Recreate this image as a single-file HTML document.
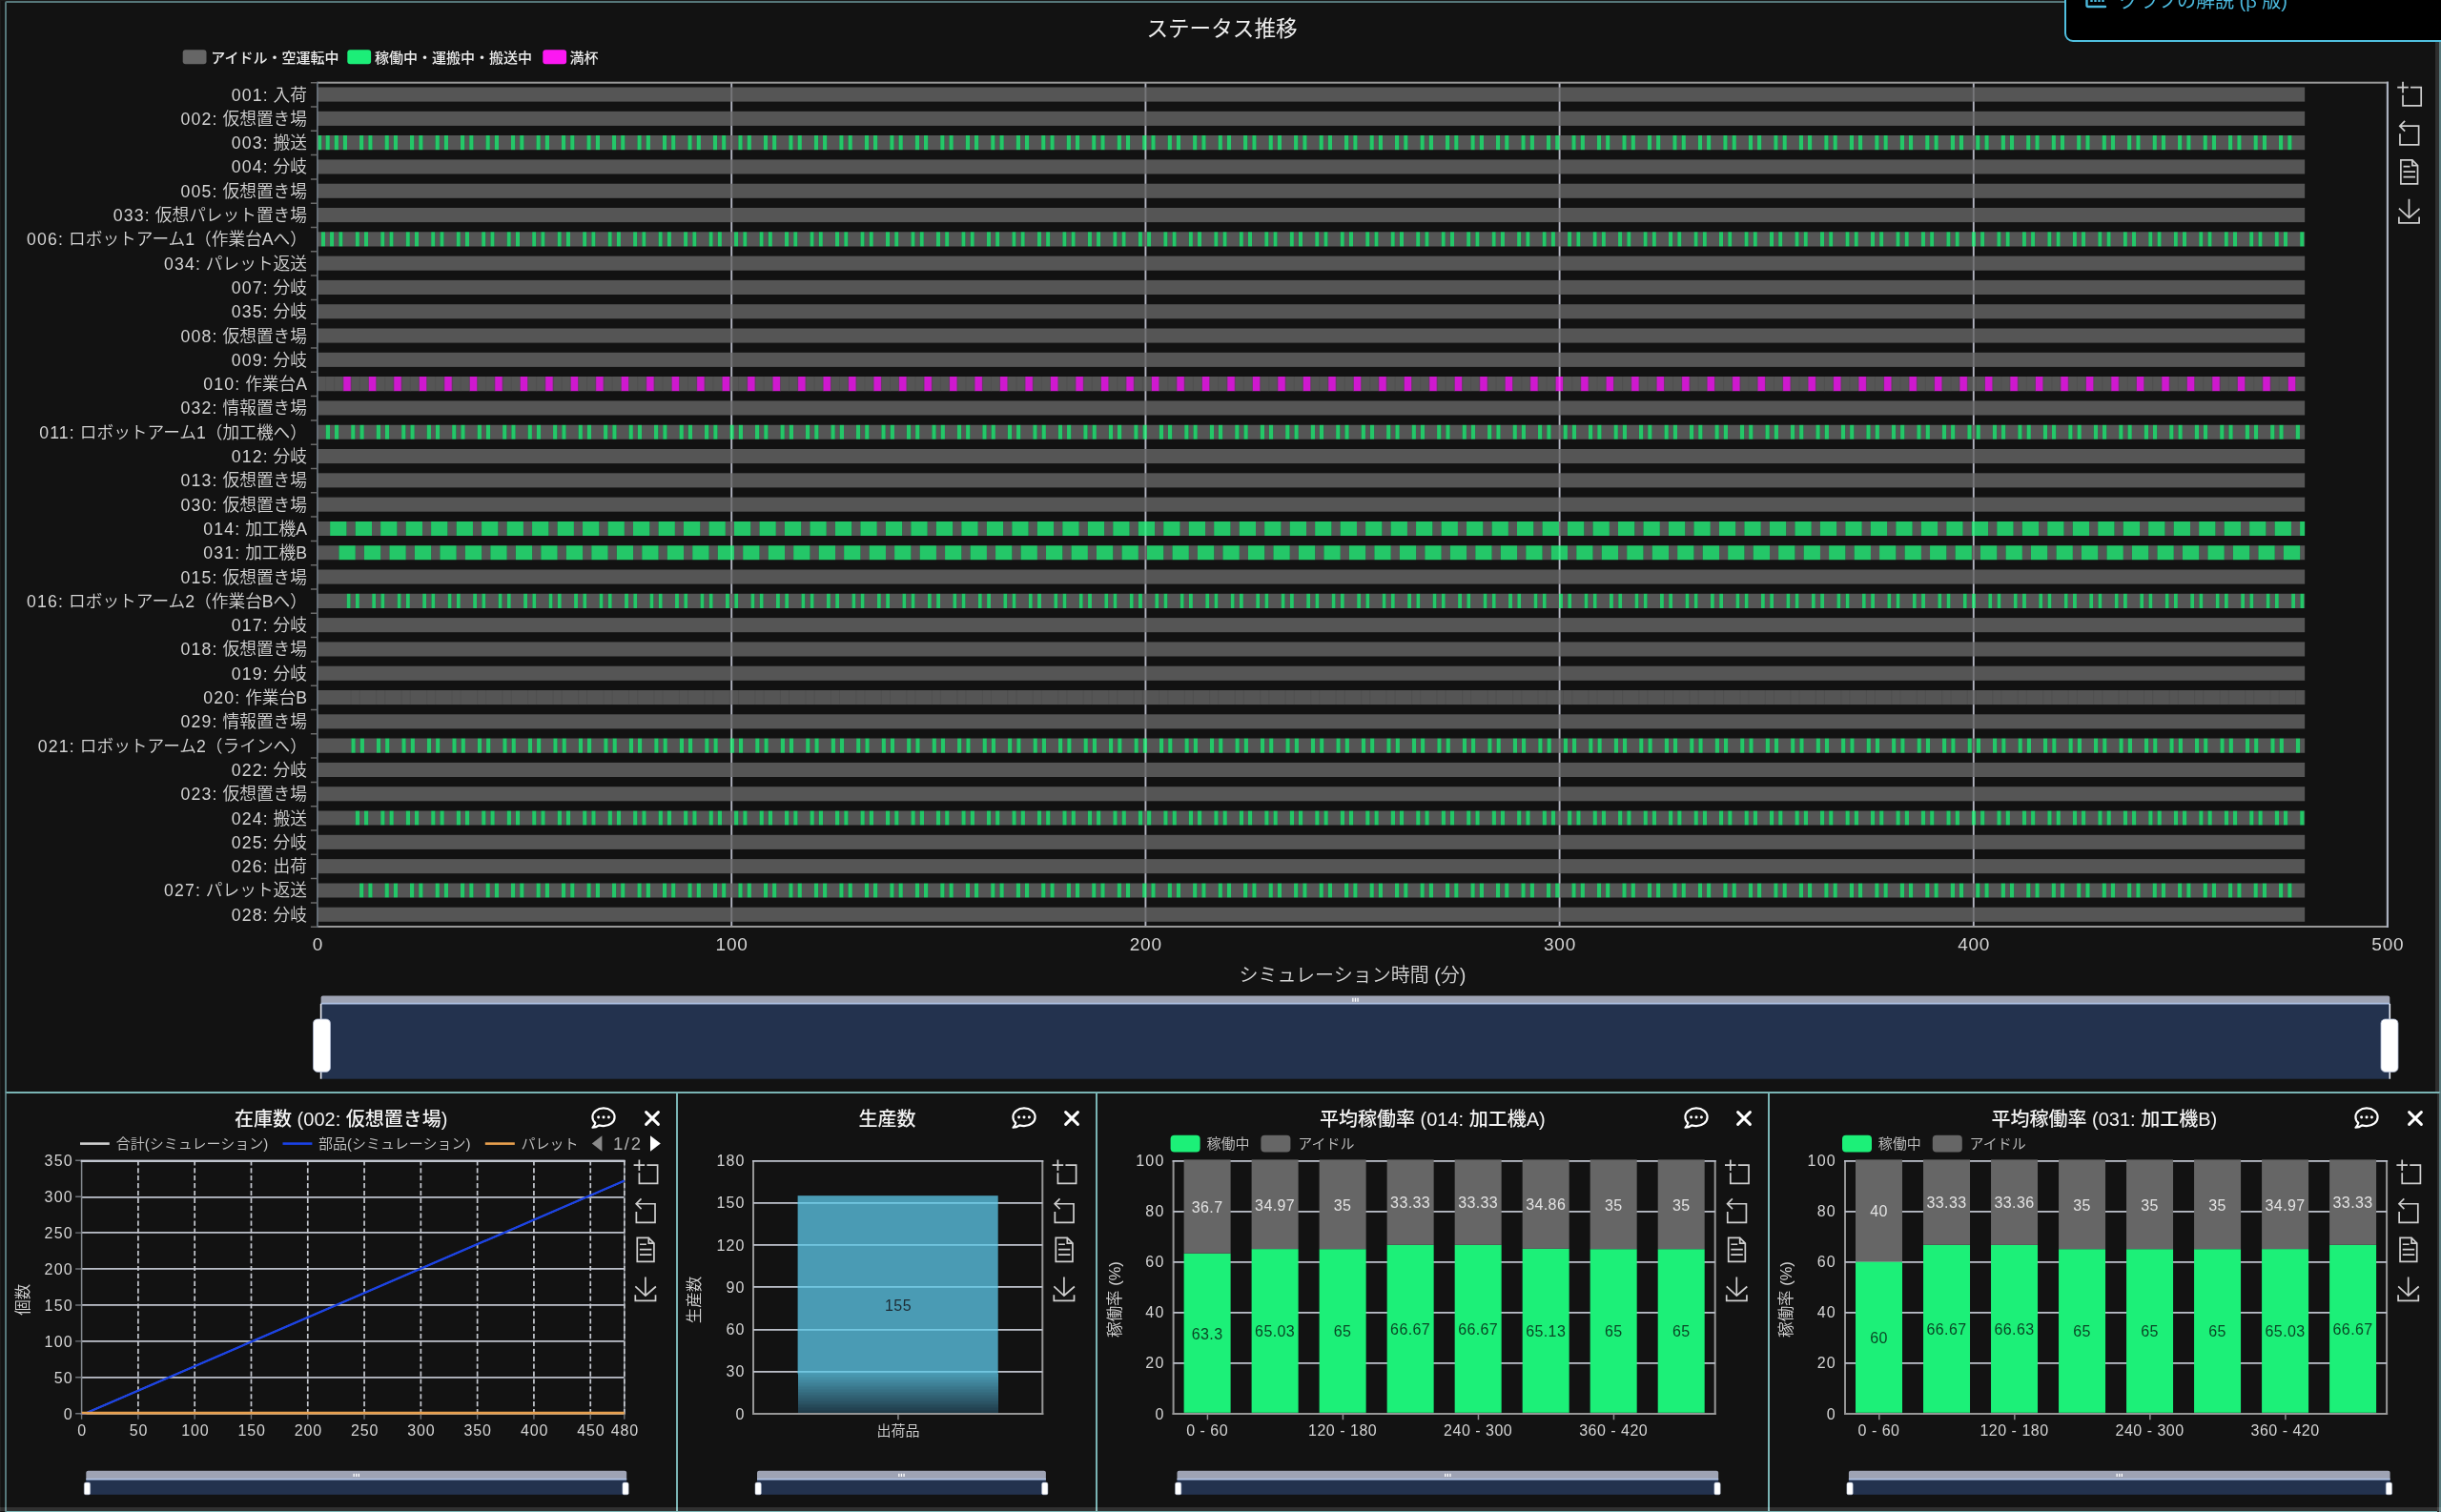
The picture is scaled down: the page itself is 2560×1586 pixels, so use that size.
<!DOCTYPE html>
<html lang="ja">
<head>
<meta charset="utf-8">
<title>ステータス推移 ダッシュボード</title>
<style>
html,body{margin:0;padding:0;background:#121212;}
body{width:2560px;height:1586px;overflow:hidden;position:relative;font-family:"Liberation Sans","Noto Sans CJK JP",sans-serif;color:#eee;}
#app{position:absolute;left:0;top:0;width:2560px;height:1586px;overflow:hidden;background:#121212;}
.edge-l{position:absolute;left:0;top:0;width:1px;height:1586px;background:#1c1c1c;}
.edge-t{position:absolute;left:0;top:0;width:2560px;height:1px;background:#1a1a1a;}
.panel{position:absolute;box-sizing:border-box;border:2px solid #557679;border-radius:2px;}
.panel.main{left:5px;top:1px;width:2555px;height:1146px;}
.panel.sub{top:1145px;height:442px;border-color:#7ab4b4;}
.ptitle{will-change:transform;position:absolute;left:0;right:0;text-align:center;white-space:nowrap;color:#f2f2f2;}
.sub .ptitle{top:12px;font-size:20px;line-height:30px;font-weight:500;}
.main .ptitle{top:10.7px;font-size:22.6px;line-height:34px;font-weight:400;color:#eee;}
svg{position:absolute;left:0;top:0;overflow:visible;will-change:transform;}
svg text{font-family:"Liberation Sans","Noto Sans CJK JP",sans-serif;}
.ibtn{position:absolute;}
.popup{position:absolute;left:2164.7px;top:-38px;width:420px;height:82px;box-sizing:border-box;border:2.6px solid #50c0e0;border-radius:9px;background:#000;color:#4bb8dc;font-size:20px;white-space:nowrap;}
.popup span{will-change:transform;position:absolute;left:56.5px;top:22px;line-height:30px;}
.vstrip{position:absolute;left:2554px;top:0;width:4px;height:1145px;background:#2e2e2e;}
.vstrip2{position:absolute;left:2556px;top:1147px;width:1.5px;height:439px;background:#2e2e2e;}
.scrollstrip{position:absolute;left:0;top:1581px;width:2560px;height:4px;background:rgba(255,255,255,0.13);}
</style>
</head>
<body>
<div id="app">
<div class="edge-l"></div><div class="edge-t"></div>

<section class="panel main"><div class="ptitle" style="left:-2px">ステータス推移</div></section>
<svg width="2560" height="1586" viewBox="0 0 2560 1586">
<rect x="191.7" y="52.2" width="24.8" height="15" rx="3" fill="#666"/>
<text x="221.2" y="66.3" font-size="15" fill="#ececec" font-weight="500">アイドル・空運転中</text>
<rect x="364.3" y="52.2" width="24.8" height="15" rx="3" fill="#1cee78"/>
<text x="392.9" y="66.3" font-size="15" fill="#ececec" font-weight="500">稼働中・運搬中・搬送中</text>
<rect x="569.3" y="52.2" width="24.8" height="15" rx="3" fill="#fc18f2"/>
<text x="597.4" y="66.3" font-size="15" fill="#ececec" font-weight="500">満杯</text>
<rect x="766.25" y="86.4" width="1.9" height="885.5" fill="#b2b4c0"/>
<rect x="1200.45" y="86.4" width="1.9" height="885.5" fill="#b2b4c0"/>
<rect x="1634.65" y="86.4" width="1.9" height="885.5" fill="#b2b4c0"/>
<rect x="2068.85" y="86.4" width="1.9" height="885.5" fill="#b2b4c0"/>
<g fill-opacity="0.8">
<rect x="333" y="91.5" width="2084.16" height="15.1" fill="#666"/>
<rect x="333" y="116.8" width="2084.16" height="15.1" fill="#666"/>
<path d="M337.34 142.1h4.12v15.1h-4.12zM345.81 142.1h4.78v15.1h-4.78zM354.93 142.1h4.78v15.1h-4.78zM364.05 142.1h12.98v15.1h-12.98zM381.37 142.1h4.91v15.1h-4.91zM390.62 142.1h12.9v15.1h-12.9zM407.86 142.1h4.91v15.1h-4.91zM417.1 142.1h12.9v15.1h-12.9zM434.34 142.1h4.91v15.1h-4.91zM443.59 142.1h12.9v15.1h-12.9zM460.83 142.1h4.91v15.1h-4.91zM470.08 142.1h12.9v15.1h-12.9zM487.31 142.1h4.91v15.1h-4.91zM496.56 142.1h12.9v15.1h-12.9zM513.8 142.1h4.91v15.1h-4.91zM523.05 142.1h12.9v15.1h-12.9zM540.29 142.1h4.91v15.1h-4.91zM549.54 142.1h12.9v15.1h-12.9zM566.77 142.1h4.91v15.1h-4.91zM576.02 142.1h12.9v15.1h-12.9zM593.26 142.1h4.91v15.1h-4.91zM602.51 142.1h12.9v15.1h-12.9zM619.75 142.1h4.91v15.1h-4.91zM628.99 142.1h12.9v15.1h-12.9zM646.23 142.1h4.91v15.1h-4.91zM655.48 142.1h12.9v15.1h-12.9zM672.72 142.1h4.91v15.1h-4.91zM681.97 142.1h12.9v15.1h-12.9zM699.2 142.1h4.91v15.1h-4.91zM708.45 142.1h12.9v15.1h-12.9zM725.69 142.1h4.91v15.1h-4.91zM734.94 142.1h12.9v15.1h-12.9zM752.18 142.1h4.91v15.1h-4.91zM761.43 142.1h12.9v15.1h-12.9zM778.66 142.1h4.91v15.1h-4.91zM787.91 142.1h12.9v15.1h-12.9zM805.15 142.1h4.91v15.1h-4.91zM814.4 142.1h12.9v15.1h-12.9zM831.64 142.1h4.91v15.1h-4.91zM840.88 142.1h12.9v15.1h-12.9zM858.12 142.1h4.91v15.1h-4.91zM867.37 142.1h12.9v15.1h-12.9zM884.61 142.1h4.91v15.1h-4.91zM893.86 142.1h12.9v15.1h-12.9zM911.09 142.1h4.91v15.1h-4.91zM920.34 142.1h12.9v15.1h-12.9zM937.58 142.1h4.91v15.1h-4.91zM946.83 142.1h12.9v15.1h-12.9zM964.07 142.1h4.91v15.1h-4.91zM973.31 142.1h12.9v15.1h-12.9zM990.55 142.1h4.91v15.1h-4.91zM999.8 142.1h12.9v15.1h-12.9zM1017.04 142.1h4.91v15.1h-4.91zM1026.29 142.1h12.9v15.1h-12.9zM1043.52 142.1h4.91v15.1h-4.91zM1052.77 142.1h12.9v15.1h-12.9zM1070.01 142.1h4.91v15.1h-4.91zM1079.26 142.1h12.9v15.1h-12.9zM1096.5 142.1h4.91v15.1h-4.91zM1105.75 142.1h12.9v15.1h-12.9zM1122.98 142.1h4.91v15.1h-4.91zM1132.23 142.1h12.9v15.1h-12.9zM1149.47 142.1h4.91v15.1h-4.91zM1158.72 142.1h12.9v15.1h-12.9zM1175.96 142.1h4.91v15.1h-4.91zM1185.2 142.1h12.9v15.1h-12.9zM1202.44 142.1h4.91v15.1h-4.91zM1211.69 142.1h12.9v15.1h-12.9zM1228.93 142.1h4.91v15.1h-4.91zM1238.18 142.1h12.9v15.1h-12.9zM1255.41 142.1h4.91v15.1h-4.91zM1264.66 142.1h12.9v15.1h-12.9zM1281.9 142.1h4.91v15.1h-4.91zM1291.15 142.1h12.9v15.1h-12.9zM1308.39 142.1h4.91v15.1h-4.91zM1317.64 142.1h12.9v15.1h-12.9zM1334.87 142.1h4.91v15.1h-4.91zM1344.12 142.1h12.9v15.1h-12.9zM1361.36 142.1h4.91v15.1h-4.91zM1370.61 142.1h12.9v15.1h-12.9zM1387.85 142.1h4.91v15.1h-4.91zM1397.09 142.1h12.9v15.1h-12.9zM1414.33 142.1h4.91v15.1h-4.91zM1423.58 142.1h12.9v15.1h-12.9zM1440.82 142.1h4.91v15.1h-4.91zM1450.07 142.1h12.9v15.1h-12.9zM1467.3 142.1h4.91v15.1h-4.91zM1476.55 142.1h12.9v15.1h-12.9zM1493.79 142.1h4.91v15.1h-4.91zM1503.04 142.1h12.9v15.1h-12.9zM1520.28 142.1h4.91v15.1h-4.91zM1529.52 142.1h12.9v15.1h-12.9zM1546.76 142.1h4.91v15.1h-4.91zM1556.01 142.1h12.9v15.1h-12.9zM1573.25 142.1h4.91v15.1h-4.91zM1582.5 142.1h12.9v15.1h-12.9zM1599.74 142.1h4.91v15.1h-4.91zM1608.98 142.1h12.9v15.1h-12.9zM1626.22 142.1h4.91v15.1h-4.91zM1635.47 142.1h12.9v15.1h-12.9zM1652.71 142.1h4.91v15.1h-4.91zM1661.96 142.1h12.9v15.1h-12.9zM1679.19 142.1h4.91v15.1h-4.91zM1688.44 142.1h12.9v15.1h-12.9zM1705.68 142.1h4.91v15.1h-4.91zM1714.93 142.1h12.9v15.1h-12.9zM1732.17 142.1h4.91v15.1h-4.91zM1741.41 142.1h12.9v15.1h-12.9zM1758.65 142.1h4.91v15.1h-4.91zM1767.9 142.1h12.9v15.1h-12.9zM1785.14 142.1h4.91v15.1h-4.91zM1794.39 142.1h12.9v15.1h-12.9zM1811.62 142.1h4.91v15.1h-4.91zM1820.87 142.1h12.9v15.1h-12.9zM1838.11 142.1h4.91v15.1h-4.91zM1847.36 142.1h12.9v15.1h-12.9zM1864.6 142.1h4.91v15.1h-4.91zM1873.85 142.1h12.9v15.1h-12.9zM1891.08 142.1h4.91v15.1h-4.91zM1900.33 142.1h12.9v15.1h-12.9zM1917.57 142.1h4.91v15.1h-4.91zM1926.82 142.1h12.9v15.1h-12.9zM1944.06 142.1h4.91v15.1h-4.91zM1953.3 142.1h12.9v15.1h-12.9zM1970.54 142.1h4.91v15.1h-4.91zM1979.79 142.1h12.9v15.1h-12.9zM1997.03 142.1h4.91v15.1h-4.91zM2006.28 142.1h12.9v15.1h-12.9zM2023.51 142.1h4.91v15.1h-4.91zM2032.76 142.1h12.9v15.1h-12.9zM2050 142.1h4.91v15.1h-4.91zM2059.25 142.1h12.9v15.1h-12.9zM2076.49 142.1h4.91v15.1h-4.91zM2085.74 142.1h12.9v15.1h-12.9zM2102.97 142.1h4.91v15.1h-4.91zM2112.22 142.1h12.9v15.1h-12.9zM2129.46 142.1h4.91v15.1h-4.91zM2138.71 142.1h12.9v15.1h-12.9zM2155.95 142.1h4.91v15.1h-4.91zM2165.19 142.1h12.9v15.1h-12.9zM2182.43 142.1h4.91v15.1h-4.91zM2191.68 142.1h12.9v15.1h-12.9zM2208.92 142.1h4.91v15.1h-4.91zM2218.17 142.1h12.9v15.1h-12.9zM2235.4 142.1h4.91v15.1h-4.91zM2244.65 142.1h12.9v15.1h-12.9zM2261.89 142.1h4.91v15.1h-4.91zM2271.14 142.1h12.9v15.1h-12.9zM2288.38 142.1h4.91v15.1h-4.91zM2297.62 142.1h12.9v15.1h-12.9zM2314.86 142.1h4.91v15.1h-4.91zM2324.11 142.1h12.9v15.1h-12.9zM2341.35 142.1h4.91v15.1h-4.91zM2350.6 142.1h12.9v15.1h-12.9zM2367.83 142.1h4.91v15.1h-4.91zM2377.08 142.1h12.9v15.1h-12.9zM2394.32 142.1h4.91v15.1h-4.91zM2403.57 142.1h13.59v15.1h-13.59z" fill="#666"/>
<path d="M333 142.1h4.34v15.1h-4.34zM341.47 142.1h4.34v15.1h-4.34zM350.59 142.1h4.34v15.1h-4.34zM359.7 142.1h4.34v15.1h-4.34zM377.03 142.1h4.34v15.1h-4.34zM386.28 142.1h4.34v15.1h-4.34zM403.51 142.1h4.34v15.1h-4.34zM412.76 142.1h4.34v15.1h-4.34zM430 142.1h4.34v15.1h-4.34zM439.25 142.1h4.34v15.1h-4.34zM456.49 142.1h4.34v15.1h-4.34zM465.73 142.1h4.34v15.1h-4.34zM482.97 142.1h4.34v15.1h-4.34zM492.22 142.1h4.34v15.1h-4.34zM509.46 142.1h4.34v15.1h-4.34zM518.71 142.1h4.34v15.1h-4.34zM535.95 142.1h4.34v15.1h-4.34zM545.19 142.1h4.34v15.1h-4.34zM562.43 142.1h4.34v15.1h-4.34zM571.68 142.1h4.34v15.1h-4.34zM588.92 142.1h4.34v15.1h-4.34zM598.17 142.1h4.34v15.1h-4.34zM615.4 142.1h4.34v15.1h-4.34zM624.65 142.1h4.34v15.1h-4.34zM641.89 142.1h4.34v15.1h-4.34zM651.14 142.1h4.34v15.1h-4.34zM668.38 142.1h4.34v15.1h-4.34zM677.62 142.1h4.34v15.1h-4.34zM694.86 142.1h4.34v15.1h-4.34zM704.11 142.1h4.34v15.1h-4.34zM721.35 142.1h4.34v15.1h-4.34zM730.6 142.1h4.34v15.1h-4.34zM747.83 142.1h4.34v15.1h-4.34zM757.08 142.1h4.34v15.1h-4.34zM774.32 142.1h4.34v15.1h-4.34zM783.57 142.1h4.34v15.1h-4.34zM800.81 142.1h4.34v15.1h-4.34zM810.06 142.1h4.34v15.1h-4.34zM827.29 142.1h4.34v15.1h-4.34zM836.54 142.1h4.34v15.1h-4.34zM853.78 142.1h4.34v15.1h-4.34zM863.03 142.1h4.34v15.1h-4.34zM880.27 142.1h4.34v15.1h-4.34zM889.51 142.1h4.34v15.1h-4.34zM906.75 142.1h4.34v15.1h-4.34zM916 142.1h4.34v15.1h-4.34zM933.24 142.1h4.34v15.1h-4.34zM942.49 142.1h4.34v15.1h-4.34zM959.72 142.1h4.34v15.1h-4.34zM968.97 142.1h4.34v15.1h-4.34zM986.21 142.1h4.34v15.1h-4.34zM995.46 142.1h4.34v15.1h-4.34zM1012.7 142.1h4.34v15.1h-4.34zM1021.95 142.1h4.34v15.1h-4.34zM1039.18 142.1h4.34v15.1h-4.34zM1048.43 142.1h4.34v15.1h-4.34zM1065.67 142.1h4.34v15.1h-4.34zM1074.92 142.1h4.34v15.1h-4.34zM1092.16 142.1h4.34v15.1h-4.34zM1101.4 142.1h4.34v15.1h-4.34zM1118.64 142.1h4.34v15.1h-4.34zM1127.89 142.1h4.34v15.1h-4.34zM1145.13 142.1h4.34v15.1h-4.34zM1154.38 142.1h4.34v15.1h-4.34zM1171.61 142.1h4.34v15.1h-4.34zM1180.86 142.1h4.34v15.1h-4.34zM1198.1 142.1h4.34v15.1h-4.34zM1207.35 142.1h4.34v15.1h-4.34zM1224.59 142.1h4.34v15.1h-4.34zM1233.83 142.1h4.34v15.1h-4.34zM1251.07 142.1h4.34v15.1h-4.34zM1260.32 142.1h4.34v15.1h-4.34zM1277.56 142.1h4.34v15.1h-4.34zM1286.81 142.1h4.34v15.1h-4.34zM1304.04 142.1h4.34v15.1h-4.34zM1313.29 142.1h4.34v15.1h-4.34zM1330.53 142.1h4.34v15.1h-4.34zM1339.78 142.1h4.34v15.1h-4.34zM1357.02 142.1h4.34v15.1h-4.34zM1366.27 142.1h4.34v15.1h-4.34zM1383.5 142.1h4.34v15.1h-4.34zM1392.75 142.1h4.34v15.1h-4.34zM1409.99 142.1h4.34v15.1h-4.34zM1419.24 142.1h4.34v15.1h-4.34zM1436.48 142.1h4.34v15.1h-4.34zM1445.72 142.1h4.34v15.1h-4.34zM1462.96 142.1h4.34v15.1h-4.34zM1472.21 142.1h4.34v15.1h-4.34zM1489.45 142.1h4.34v15.1h-4.34zM1498.7 142.1h4.34v15.1h-4.34zM1515.93 142.1h4.34v15.1h-4.34zM1525.18 142.1h4.34v15.1h-4.34zM1542.42 142.1h4.34v15.1h-4.34zM1551.67 142.1h4.34v15.1h-4.34zM1568.91 142.1h4.34v15.1h-4.34zM1578.16 142.1h4.34v15.1h-4.34zM1595.39 142.1h4.34v15.1h-4.34zM1604.64 142.1h4.34v15.1h-4.34zM1621.88 142.1h4.34v15.1h-4.34zM1631.13 142.1h4.34v15.1h-4.34zM1648.37 142.1h4.34v15.1h-4.34zM1657.61 142.1h4.34v15.1h-4.34zM1674.85 142.1h4.34v15.1h-4.34zM1684.1 142.1h4.34v15.1h-4.34zM1701.34 142.1h4.34v15.1h-4.34zM1710.59 142.1h4.34v15.1h-4.34zM1727.82 142.1h4.34v15.1h-4.34zM1737.07 142.1h4.34v15.1h-4.34zM1754.31 142.1h4.34v15.1h-4.34zM1763.56 142.1h4.34v15.1h-4.34zM1780.8 142.1h4.34v15.1h-4.34zM1790.04 142.1h4.34v15.1h-4.34zM1807.28 142.1h4.34v15.1h-4.34zM1816.53 142.1h4.34v15.1h-4.34zM1833.77 142.1h4.34v15.1h-4.34zM1843.02 142.1h4.34v15.1h-4.34zM1860.26 142.1h4.34v15.1h-4.34zM1869.5 142.1h4.34v15.1h-4.34zM1886.74 142.1h4.34v15.1h-4.34zM1895.99 142.1h4.34v15.1h-4.34zM1913.23 142.1h4.34v15.1h-4.34zM1922.48 142.1h4.34v15.1h-4.34zM1939.71 142.1h4.34v15.1h-4.34zM1948.96 142.1h4.34v15.1h-4.34zM1966.2 142.1h4.34v15.1h-4.34zM1975.45 142.1h4.34v15.1h-4.34zM1992.69 142.1h4.34v15.1h-4.34zM2001.93 142.1h4.34v15.1h-4.34zM2019.17 142.1h4.34v15.1h-4.34zM2028.42 142.1h4.34v15.1h-4.34zM2045.66 142.1h4.34v15.1h-4.34zM2054.91 142.1h4.34v15.1h-4.34zM2072.14 142.1h4.34v15.1h-4.34zM2081.39 142.1h4.34v15.1h-4.34zM2098.63 142.1h4.34v15.1h-4.34zM2107.88 142.1h4.34v15.1h-4.34zM2125.12 142.1h4.34v15.1h-4.34zM2134.37 142.1h4.34v15.1h-4.34zM2151.6 142.1h4.34v15.1h-4.34zM2160.85 142.1h4.34v15.1h-4.34zM2178.09 142.1h4.34v15.1h-4.34zM2187.34 142.1h4.34v15.1h-4.34zM2204.58 142.1h4.34v15.1h-4.34zM2213.82 142.1h4.34v15.1h-4.34zM2231.06 142.1h4.34v15.1h-4.34zM2240.31 142.1h4.34v15.1h-4.34zM2257.55 142.1h4.34v15.1h-4.34zM2266.8 142.1h4.34v15.1h-4.34zM2284.03 142.1h4.34v15.1h-4.34zM2293.28 142.1h4.34v15.1h-4.34zM2310.52 142.1h4.34v15.1h-4.34zM2319.77 142.1h4.34v15.1h-4.34zM2337.01 142.1h4.34v15.1h-4.34zM2346.26 142.1h4.34v15.1h-4.34zM2363.49 142.1h4.34v15.1h-4.34zM2372.74 142.1h4.34v15.1h-4.34zM2389.98 142.1h4.34v15.1h-4.34zM2399.23 142.1h4.34v15.1h-4.34z" fill="#29f57e"/>
<rect x="333" y="167.4" width="2084.16" height="15.1" fill="#666"/>
<rect x="333" y="192.7" width="2084.16" height="15.1" fill="#666"/>
<rect x="333" y="218" width="2084.16" height="15.1" fill="#666"/>
<path d="M333 243.3h3.91v15.1h-3.91zM341.03 243.3h4.99v15.1h-4.99zM350.15 243.3h5.21v15.1h-5.21zM359.49 243.3h13.24v15.1h-13.24zM376.85 243.3h5.12v15.1h-5.12zM386.1 243.3h13.11v15.1h-13.11zM403.34 243.3h5.12v15.1h-5.12zM412.59 243.3h13.11v15.1h-13.11zM429.83 243.3h5.12v15.1h-5.12zM439.08 243.3h13.11v15.1h-13.11zM456.31 243.3h5.12v15.1h-5.12zM465.56 243.3h13.11v15.1h-13.11zM482.8 243.3h5.12v15.1h-5.12zM492.05 243.3h13.11v15.1h-13.11zM509.29 243.3h5.12v15.1h-5.12zM518.53 243.3h13.11v15.1h-13.11zM535.77 243.3h5.12v15.1h-5.12zM545.02 243.3h13.11v15.1h-13.11zM562.26 243.3h5.12v15.1h-5.12zM571.51 243.3h13.11v15.1h-13.11zM588.74 243.3h5.12v15.1h-5.12zM597.99 243.3h13.11v15.1h-13.11zM615.23 243.3h5.12v15.1h-5.12zM624.48 243.3h13.11v15.1h-13.11zM641.72 243.3h5.12v15.1h-5.12zM650.96 243.3h13.11v15.1h-13.11zM668.2 243.3h5.12v15.1h-5.12zM677.45 243.3h13.11v15.1h-13.11zM694.69 243.3h5.12v15.1h-5.12zM703.94 243.3h13.11v15.1h-13.11zM721.17 243.3h5.12v15.1h-5.12zM730.42 243.3h13.11v15.1h-13.11zM747.66 243.3h5.12v15.1h-5.12zM756.91 243.3h13.11v15.1h-13.11zM774.15 243.3h5.12v15.1h-5.12zM783.4 243.3h13.11v15.1h-13.11zM800.63 243.3h5.12v15.1h-5.12zM809.88 243.3h13.11v15.1h-13.11zM827.12 243.3h5.12v15.1h-5.12zM836.37 243.3h13.11v15.1h-13.11zM853.61 243.3h5.12v15.1h-5.12zM862.85 243.3h13.11v15.1h-13.11zM880.09 243.3h5.12v15.1h-5.12zM889.34 243.3h13.11v15.1h-13.11zM906.58 243.3h5.12v15.1h-5.12zM915.83 243.3h13.11v15.1h-13.11zM933.06 243.3h5.12v15.1h-5.12zM942.31 243.3h13.11v15.1h-13.11zM959.55 243.3h5.12v15.1h-5.12zM968.8 243.3h13.11v15.1h-13.11zM986.04 243.3h5.12v15.1h-5.12zM995.29 243.3h13.11v15.1h-13.11zM1012.52 243.3h5.12v15.1h-5.12zM1021.77 243.3h13.11v15.1h-13.11zM1039.01 243.3h5.12v15.1h-5.12zM1048.26 243.3h13.11v15.1h-13.11zM1065.5 243.3h5.12v15.1h-5.12zM1074.74 243.3h13.11v15.1h-13.11zM1091.98 243.3h5.12v15.1h-5.12zM1101.23 243.3h13.11v15.1h-13.11zM1118.47 243.3h5.12v15.1h-5.12zM1127.72 243.3h13.11v15.1h-13.11zM1144.95 243.3h5.12v15.1h-5.12zM1154.2 243.3h13.11v15.1h-13.11zM1171.44 243.3h5.12v15.1h-5.12zM1180.69 243.3h13.11v15.1h-13.11zM1197.93 243.3h5.12v15.1h-5.12zM1207.17 243.3h13.11v15.1h-13.11zM1224.41 243.3h5.12v15.1h-5.12zM1233.66 243.3h13.11v15.1h-13.11zM1250.9 243.3h5.12v15.1h-5.12zM1260.15 243.3h13.11v15.1h-13.11zM1277.38 243.3h5.12v15.1h-5.12zM1286.63 243.3h13.11v15.1h-13.11zM1303.87 243.3h5.12v15.1h-5.12zM1313.12 243.3h13.11v15.1h-13.11zM1330.36 243.3h5.12v15.1h-5.12zM1339.61 243.3h13.11v15.1h-13.11zM1356.84 243.3h5.12v15.1h-5.12zM1366.09 243.3h13.11v15.1h-13.11zM1383.33 243.3h5.12v15.1h-5.12zM1392.58 243.3h13.11v15.1h-13.11zM1409.82 243.3h5.12v15.1h-5.12zM1419.06 243.3h13.11v15.1h-13.11zM1436.3 243.3h5.12v15.1h-5.12zM1445.55 243.3h13.11v15.1h-13.11zM1462.79 243.3h5.12v15.1h-5.12zM1472.04 243.3h13.11v15.1h-13.11zM1489.27 243.3h5.12v15.1h-5.12zM1498.52 243.3h13.11v15.1h-13.11zM1515.76 243.3h5.12v15.1h-5.12zM1525.01 243.3h13.11v15.1h-13.11zM1542.25 243.3h5.12v15.1h-5.12zM1551.5 243.3h13.11v15.1h-13.11zM1568.73 243.3h5.12v15.1h-5.12zM1577.98 243.3h13.11v15.1h-13.11zM1595.22 243.3h5.12v15.1h-5.12zM1604.47 243.3h13.11v15.1h-13.11zM1621.71 243.3h5.12v15.1h-5.12zM1630.95 243.3h13.11v15.1h-13.11zM1648.19 243.3h5.12v15.1h-5.12zM1657.44 243.3h13.11v15.1h-13.11zM1674.68 243.3h5.12v15.1h-5.12zM1683.93 243.3h13.11v15.1h-13.11zM1701.16 243.3h5.12v15.1h-5.12zM1710.41 243.3h13.11v15.1h-13.11zM1727.65 243.3h5.12v15.1h-5.12zM1736.9 243.3h13.11v15.1h-13.11zM1754.14 243.3h5.12v15.1h-5.12zM1763.39 243.3h13.11v15.1h-13.11zM1780.62 243.3h5.12v15.1h-5.12zM1789.87 243.3h13.11v15.1h-13.11zM1807.11 243.3h5.12v15.1h-5.12zM1816.36 243.3h13.11v15.1h-13.11zM1833.6 243.3h5.12v15.1h-5.12zM1842.84 243.3h13.11v15.1h-13.11zM1860.08 243.3h5.12v15.1h-5.12zM1869.33 243.3h13.11v15.1h-13.11zM1886.57 243.3h5.12v15.1h-5.12zM1895.82 243.3h13.11v15.1h-13.11zM1913.05 243.3h5.12v15.1h-5.12zM1922.3 243.3h13.11v15.1h-13.11zM1939.54 243.3h5.12v15.1h-5.12zM1948.79 243.3h13.11v15.1h-13.11zM1966.03 243.3h5.12v15.1h-5.12zM1975.27 243.3h13.11v15.1h-13.11zM1992.51 243.3h5.12v15.1h-5.12zM2001.76 243.3h13.11v15.1h-13.11zM2019 243.3h5.12v15.1h-5.12zM2028.25 243.3h13.11v15.1h-13.11zM2045.48 243.3h5.12v15.1h-5.12zM2054.73 243.3h13.11v15.1h-13.11zM2071.97 243.3h5.12v15.1h-5.12zM2081.22 243.3h13.11v15.1h-13.11zM2098.46 243.3h5.12v15.1h-5.12zM2107.71 243.3h13.11v15.1h-13.11zM2124.94 243.3h5.12v15.1h-5.12zM2134.19 243.3h13.11v15.1h-13.11zM2151.43 243.3h5.12v15.1h-5.12zM2160.68 243.3h13.11v15.1h-13.11zM2177.92 243.3h5.12v15.1h-5.12zM2187.16 243.3h13.11v15.1h-13.11zM2204.4 243.3h5.12v15.1h-5.12zM2213.65 243.3h13.11v15.1h-13.11zM2230.89 243.3h5.12v15.1h-5.12zM2240.14 243.3h13.11v15.1h-13.11zM2257.37 243.3h5.12v15.1h-5.12zM2266.62 243.3h13.11v15.1h-13.11zM2283.86 243.3h5.12v15.1h-5.12zM2293.11 243.3h13.11v15.1h-13.11zM2310.35 243.3h5.12v15.1h-5.12zM2319.6 243.3h13.11v15.1h-13.11zM2336.83 243.3h5.12v15.1h-5.12zM2346.08 243.3h13.11v15.1h-13.11zM2363.32 243.3h5.12v15.1h-5.12zM2372.57 243.3h13.11v15.1h-13.11zM2389.81 243.3h5.12v15.1h-5.12zM2399.05 243.3h13.11v15.1h-13.11zM2416.29 243.3h0.87v15.1h-0.87z" fill="#666"/>
<path d="M336.91 243.3h4.12v15.1h-4.12zM346.03 243.3h4.12v15.1h-4.12zM355.36 243.3h4.12v15.1h-4.12zM372.73 243.3h4.12v15.1h-4.12zM381.98 243.3h4.12v15.1h-4.12zM399.22 243.3h4.12v15.1h-4.12zM408.46 243.3h4.12v15.1h-4.12zM425.7 243.3h4.12v15.1h-4.12zM434.95 243.3h4.12v15.1h-4.12zM452.19 243.3h4.12v15.1h-4.12zM461.44 243.3h4.12v15.1h-4.12zM478.67 243.3h4.12v15.1h-4.12zM487.92 243.3h4.12v15.1h-4.12zM505.16 243.3h4.12v15.1h-4.12zM514.41 243.3h4.12v15.1h-4.12zM531.65 243.3h4.12v15.1h-4.12zM540.89 243.3h4.12v15.1h-4.12zM558.13 243.3h4.12v15.1h-4.12zM567.38 243.3h4.12v15.1h-4.12zM584.62 243.3h4.12v15.1h-4.12zM593.87 243.3h4.12v15.1h-4.12zM611.11 243.3h4.12v15.1h-4.12zM620.35 243.3h4.12v15.1h-4.12zM637.59 243.3h4.12v15.1h-4.12zM646.84 243.3h4.12v15.1h-4.12zM664.08 243.3h4.12v15.1h-4.12zM673.33 243.3h4.12v15.1h-4.12zM690.56 243.3h4.12v15.1h-4.12zM699.81 243.3h4.12v15.1h-4.12zM717.05 243.3h4.12v15.1h-4.12zM726.3 243.3h4.12v15.1h-4.12zM743.54 243.3h4.12v15.1h-4.12zM752.78 243.3h4.12v15.1h-4.12zM770.02 243.3h4.12v15.1h-4.12zM779.27 243.3h4.12v15.1h-4.12zM796.51 243.3h4.12v15.1h-4.12zM805.76 243.3h4.12v15.1h-4.12zM822.99 243.3h4.12v15.1h-4.12zM832.24 243.3h4.12v15.1h-4.12zM849.48 243.3h4.12v15.1h-4.12zM858.73 243.3h4.12v15.1h-4.12zM875.97 243.3h4.12v15.1h-4.12zM885.22 243.3h4.12v15.1h-4.12zM902.45 243.3h4.12v15.1h-4.12zM911.7 243.3h4.12v15.1h-4.12zM928.94 243.3h4.12v15.1h-4.12zM938.19 243.3h4.12v15.1h-4.12zM955.43 243.3h4.12v15.1h-4.12zM964.67 243.3h4.12v15.1h-4.12zM981.91 243.3h4.12v15.1h-4.12zM991.16 243.3h4.12v15.1h-4.12zM1008.4 243.3h4.12v15.1h-4.12zM1017.65 243.3h4.12v15.1h-4.12zM1034.88 243.3h4.12v15.1h-4.12zM1044.13 243.3h4.12v15.1h-4.12zM1061.37 243.3h4.12v15.1h-4.12zM1070.62 243.3h4.12v15.1h-4.12zM1087.86 243.3h4.12v15.1h-4.12zM1097.11 243.3h4.12v15.1h-4.12zM1114.34 243.3h4.12v15.1h-4.12zM1123.59 243.3h4.12v15.1h-4.12zM1140.83 243.3h4.12v15.1h-4.12zM1150.08 243.3h4.12v15.1h-4.12zM1167.32 243.3h4.12v15.1h-4.12zM1176.56 243.3h4.12v15.1h-4.12zM1193.8 243.3h4.12v15.1h-4.12zM1203.05 243.3h4.12v15.1h-4.12zM1220.29 243.3h4.12v15.1h-4.12zM1229.54 243.3h4.12v15.1h-4.12zM1246.77 243.3h4.12v15.1h-4.12zM1256.02 243.3h4.12v15.1h-4.12zM1273.26 243.3h4.12v15.1h-4.12zM1282.51 243.3h4.12v15.1h-4.12zM1299.75 243.3h4.12v15.1h-4.12zM1308.99 243.3h4.12v15.1h-4.12zM1326.23 243.3h4.12v15.1h-4.12zM1335.48 243.3h4.12v15.1h-4.12zM1352.72 243.3h4.12v15.1h-4.12zM1361.97 243.3h4.12v15.1h-4.12zM1379.2 243.3h4.12v15.1h-4.12zM1388.45 243.3h4.12v15.1h-4.12zM1405.69 243.3h4.12v15.1h-4.12zM1414.94 243.3h4.12v15.1h-4.12zM1432.18 243.3h4.12v15.1h-4.12zM1441.43 243.3h4.12v15.1h-4.12zM1458.66 243.3h4.12v15.1h-4.12zM1467.91 243.3h4.12v15.1h-4.12zM1485.15 243.3h4.12v15.1h-4.12zM1494.4 243.3h4.12v15.1h-4.12zM1511.64 243.3h4.12v15.1h-4.12zM1520.88 243.3h4.12v15.1h-4.12zM1538.12 243.3h4.12v15.1h-4.12zM1547.37 243.3h4.12v15.1h-4.12zM1564.61 243.3h4.12v15.1h-4.12zM1573.86 243.3h4.12v15.1h-4.12zM1591.09 243.3h4.12v15.1h-4.12zM1600.34 243.3h4.12v15.1h-4.12zM1617.58 243.3h4.12v15.1h-4.12zM1626.83 243.3h4.12v15.1h-4.12zM1644.07 243.3h4.12v15.1h-4.12zM1653.32 243.3h4.12v15.1h-4.12zM1670.55 243.3h4.12v15.1h-4.12zM1679.8 243.3h4.12v15.1h-4.12zM1697.04 243.3h4.12v15.1h-4.12zM1706.29 243.3h4.12v15.1h-4.12zM1723.53 243.3h4.12v15.1h-4.12zM1732.77 243.3h4.12v15.1h-4.12zM1750.01 243.3h4.12v15.1h-4.12zM1759.26 243.3h4.12v15.1h-4.12zM1776.5 243.3h4.12v15.1h-4.12zM1785.75 243.3h4.12v15.1h-4.12zM1802.98 243.3h4.12v15.1h-4.12zM1812.23 243.3h4.12v15.1h-4.12zM1829.47 243.3h4.12v15.1h-4.12zM1838.72 243.3h4.12v15.1h-4.12zM1855.96 243.3h4.12v15.1h-4.12zM1865.2 243.3h4.12v15.1h-4.12zM1882.44 243.3h4.12v15.1h-4.12zM1891.69 243.3h4.12v15.1h-4.12zM1908.93 243.3h4.12v15.1h-4.12zM1918.18 243.3h4.12v15.1h-4.12zM1935.42 243.3h4.12v15.1h-4.12zM1944.66 243.3h4.12v15.1h-4.12zM1961.9 243.3h4.12v15.1h-4.12zM1971.15 243.3h4.12v15.1h-4.12zM1988.39 243.3h4.12v15.1h-4.12zM1997.64 243.3h4.12v15.1h-4.12zM2014.87 243.3h4.12v15.1h-4.12zM2024.12 243.3h4.12v15.1h-4.12zM2041.36 243.3h4.12v15.1h-4.12zM2050.61 243.3h4.12v15.1h-4.12zM2067.85 243.3h4.12v15.1h-4.12zM2077.09 243.3h4.12v15.1h-4.12zM2094.33 243.3h4.12v15.1h-4.12zM2103.58 243.3h4.12v15.1h-4.12zM2120.82 243.3h4.12v15.1h-4.12zM2130.07 243.3h4.12v15.1h-4.12zM2147.3 243.3h4.12v15.1h-4.12zM2156.55 243.3h4.12v15.1h-4.12zM2173.79 243.3h4.12v15.1h-4.12zM2183.04 243.3h4.12v15.1h-4.12zM2200.28 243.3h4.12v15.1h-4.12zM2209.53 243.3h4.12v15.1h-4.12zM2226.76 243.3h4.12v15.1h-4.12zM2236.01 243.3h4.12v15.1h-4.12zM2253.25 243.3h4.12v15.1h-4.12zM2262.5 243.3h4.12v15.1h-4.12zM2279.74 243.3h4.12v15.1h-4.12zM2288.98 243.3h4.12v15.1h-4.12zM2306.22 243.3h4.12v15.1h-4.12zM2315.47 243.3h4.12v15.1h-4.12zM2332.71 243.3h4.12v15.1h-4.12zM2341.96 243.3h4.12v15.1h-4.12zM2359.19 243.3h4.12v15.1h-4.12zM2368.44 243.3h4.12v15.1h-4.12zM2385.68 243.3h4.12v15.1h-4.12zM2394.93 243.3h4.12v15.1h-4.12zM2412.17 243.3h4.12v15.1h-4.12z" fill="#29f57e"/>
<rect x="333" y="268.6" width="2084.16" height="15.1" fill="#666"/>
<rect x="333" y="293.9" width="2084.16" height="15.1" fill="#666"/>
<rect x="333" y="319.2" width="2084.16" height="15.1" fill="#666"/>
<rect x="333" y="344.5" width="2084.16" height="15.1" fill="#666"/>
<rect x="333" y="369.8" width="2084.16" height="15.1" fill="#666"/>
<path d="M333 395.1h26.79v15.1h-26.79zM368.39 395.1h17.89v15.1h-17.89zM394.87 395.1h17.89v15.1h-17.89zM421.36 395.1h17.89v15.1h-17.89zM447.85 395.1h17.89v15.1h-17.89zM474.33 395.1h17.89v15.1h-17.89zM500.82 395.1h17.89v15.1h-17.89zM527.3 395.1h17.89v15.1h-17.89zM553.79 395.1h17.89v15.1h-17.89zM580.28 395.1h17.89v15.1h-17.89zM606.76 395.1h17.89v15.1h-17.89zM633.25 395.1h17.89v15.1h-17.89zM659.74 395.1h17.89v15.1h-17.89zM686.22 395.1h17.89v15.1h-17.89zM712.71 395.1h17.89v15.1h-17.89zM739.19 395.1h17.89v15.1h-17.89zM765.68 395.1h17.89v15.1h-17.89zM792.17 395.1h17.89v15.1h-17.89zM818.65 395.1h17.89v15.1h-17.89zM845.14 395.1h17.89v15.1h-17.89zM871.63 395.1h17.89v15.1h-17.89zM898.11 395.1h17.89v15.1h-17.89zM924.6 395.1h17.89v15.1h-17.89zM951.08 395.1h17.89v15.1h-17.89zM977.57 395.1h17.89v15.1h-17.89zM1004.06 395.1h17.89v15.1h-17.89zM1030.54 395.1h17.89v15.1h-17.89zM1057.03 395.1h17.89v15.1h-17.89zM1083.51 395.1h17.89v15.1h-17.89zM1110 395.1h17.89v15.1h-17.89zM1136.49 395.1h17.89v15.1h-17.89zM1162.97 395.1h17.89v15.1h-17.89zM1189.46 395.1h17.89v15.1h-17.89zM1215.95 395.1h17.89v15.1h-17.89zM1242.43 395.1h17.89v15.1h-17.89zM1268.92 395.1h17.89v15.1h-17.89zM1295.4 395.1h17.89v15.1h-17.89zM1321.89 395.1h17.89v15.1h-17.89zM1348.38 395.1h17.89v15.1h-17.89zM1374.86 395.1h17.89v15.1h-17.89zM1401.35 395.1h17.89v15.1h-17.89zM1427.84 395.1h17.89v15.1h-17.89zM1454.32 395.1h17.89v15.1h-17.89zM1480.81 395.1h17.89v15.1h-17.89zM1507.29 395.1h17.89v15.1h-17.89zM1533.78 395.1h17.89v15.1h-17.89zM1560.27 395.1h17.89v15.1h-17.89zM1586.75 395.1h17.89v15.1h-17.89zM1613.24 395.1h17.89v15.1h-17.89zM1639.72 395.1h17.89v15.1h-17.89zM1666.21 395.1h17.89v15.1h-17.89zM1692.7 395.1h17.89v15.1h-17.89zM1719.18 395.1h17.89v15.1h-17.89zM1745.67 395.1h17.89v15.1h-17.89zM1772.16 395.1h17.89v15.1h-17.89zM1798.64 395.1h17.89v15.1h-17.89zM1825.13 395.1h17.89v15.1h-17.89zM1851.61 395.1h17.89v15.1h-17.89zM1878.1 395.1h17.89v15.1h-17.89zM1904.59 395.1h17.89v15.1h-17.89zM1931.07 395.1h17.89v15.1h-17.89zM1957.56 395.1h17.89v15.1h-17.89zM1984.05 395.1h17.89v15.1h-17.89zM2010.53 395.1h17.89v15.1h-17.89zM2037.02 395.1h17.89v15.1h-17.89zM2063.5 395.1h17.89v15.1h-17.89zM2089.99 395.1h17.89v15.1h-17.89zM2116.48 395.1h17.89v15.1h-17.89zM2142.96 395.1h17.89v15.1h-17.89zM2169.45 395.1h17.89v15.1h-17.89zM2195.94 395.1h17.89v15.1h-17.89zM2222.42 395.1h17.89v15.1h-17.89zM2248.91 395.1h17.89v15.1h-17.89zM2275.39 395.1h17.89v15.1h-17.89zM2301.88 395.1h17.89v15.1h-17.89zM2328.37 395.1h17.89v15.1h-17.89zM2354.85 395.1h17.89v15.1h-17.89zM2381.34 395.1h17.89v15.1h-17.89zM2407.82 395.1h9.34v15.1h-9.34z" fill="#666"/>
<path d="M359.79 395.1h8.6v15.1h-8.6zM386.28 395.1h8.6v15.1h-8.6zM412.76 395.1h8.6v15.1h-8.6zM439.25 395.1h8.6v15.1h-8.6zM465.73 395.1h8.6v15.1h-8.6zM492.22 395.1h8.6v15.1h-8.6zM518.71 395.1h8.6v15.1h-8.6zM545.19 395.1h8.6v15.1h-8.6zM571.68 395.1h8.6v15.1h-8.6zM598.17 395.1h8.6v15.1h-8.6zM624.65 395.1h8.6v15.1h-8.6zM651.14 395.1h8.6v15.1h-8.6zM677.62 395.1h8.6v15.1h-8.6zM704.11 395.1h8.6v15.1h-8.6zM730.6 395.1h8.6v15.1h-8.6zM757.08 395.1h8.6v15.1h-8.6zM783.57 395.1h8.6v15.1h-8.6zM810.06 395.1h8.6v15.1h-8.6zM836.54 395.1h8.6v15.1h-8.6zM863.03 395.1h8.6v15.1h-8.6zM889.51 395.1h8.6v15.1h-8.6zM916 395.1h8.6v15.1h-8.6zM942.49 395.1h8.6v15.1h-8.6zM968.97 395.1h8.6v15.1h-8.6zM995.46 395.1h8.6v15.1h-8.6zM1021.95 395.1h8.6v15.1h-8.6zM1048.43 395.1h8.6v15.1h-8.6zM1074.92 395.1h8.6v15.1h-8.6zM1101.4 395.1h8.6v15.1h-8.6zM1127.89 395.1h8.6v15.1h-8.6zM1154.38 395.1h8.6v15.1h-8.6zM1180.86 395.1h8.6v15.1h-8.6zM1207.35 395.1h8.6v15.1h-8.6zM1233.83 395.1h8.6v15.1h-8.6zM1260.32 395.1h8.6v15.1h-8.6zM1286.81 395.1h8.6v15.1h-8.6zM1313.29 395.1h8.6v15.1h-8.6zM1339.78 395.1h8.6v15.1h-8.6zM1366.27 395.1h8.6v15.1h-8.6zM1392.75 395.1h8.6v15.1h-8.6zM1419.24 395.1h8.6v15.1h-8.6zM1445.72 395.1h8.6v15.1h-8.6zM1472.21 395.1h8.6v15.1h-8.6zM1498.7 395.1h8.6v15.1h-8.6zM1525.18 395.1h8.6v15.1h-8.6zM1551.67 395.1h8.6v15.1h-8.6zM1578.16 395.1h8.6v15.1h-8.6zM1604.64 395.1h8.6v15.1h-8.6zM1631.13 395.1h8.6v15.1h-8.6zM1657.61 395.1h8.6v15.1h-8.6zM1684.1 395.1h8.6v15.1h-8.6zM1710.59 395.1h8.6v15.1h-8.6zM1737.07 395.1h8.6v15.1h-8.6zM1763.56 395.1h8.6v15.1h-8.6zM1790.04 395.1h8.6v15.1h-8.6zM1816.53 395.1h8.6v15.1h-8.6zM1843.02 395.1h8.6v15.1h-8.6zM1869.5 395.1h8.6v15.1h-8.6zM1895.99 395.1h8.6v15.1h-8.6zM1922.48 395.1h8.6v15.1h-8.6zM1948.96 395.1h8.6v15.1h-8.6zM1975.45 395.1h8.6v15.1h-8.6zM2001.93 395.1h8.6v15.1h-8.6zM2028.42 395.1h8.6v15.1h-8.6zM2054.91 395.1h8.6v15.1h-8.6zM2081.39 395.1h8.6v15.1h-8.6zM2107.88 395.1h8.6v15.1h-8.6zM2134.37 395.1h8.6v15.1h-8.6zM2160.85 395.1h8.6v15.1h-8.6zM2187.34 395.1h8.6v15.1h-8.6zM2213.82 395.1h8.6v15.1h-8.6zM2240.31 395.1h8.6v15.1h-8.6zM2266.8 395.1h8.6v15.1h-8.6zM2293.28 395.1h8.6v15.1h-8.6zM2319.77 395.1h8.6v15.1h-8.6zM2346.26 395.1h8.6v15.1h-8.6zM2372.74 395.1h8.6v15.1h-8.6zM2399.23 395.1h8.6v15.1h-8.6z" fill="#ff1aff"/>
<rect x="333" y="420.4" width="2084.16" height="15.1" fill="#666"/>
<path d="M333 445.7h8.68v15.1h-8.68zM346.03 445.7h4.91v15.1h-4.91zM355.27 445.7h12.9v15.1h-12.9zM372.51 445.7h4.91v15.1h-4.91zM381.76 445.7h12.9v15.1h-12.9zM399 445.7h4.91v15.1h-4.91zM408.25 445.7h12.9v15.1h-12.9zM425.48 445.7h4.91v15.1h-4.91zM434.73 445.7h12.9v15.1h-12.9zM451.97 445.7h4.91v15.1h-4.91zM461.22 445.7h12.9v15.1h-12.9zM478.46 445.7h4.91v15.1h-4.91zM487.71 445.7h12.9v15.1h-12.9zM504.94 445.7h4.91v15.1h-4.91zM514.19 445.7h12.9v15.1h-12.9zM531.43 445.7h4.91v15.1h-4.91zM540.68 445.7h12.9v15.1h-12.9zM557.92 445.7h4.91v15.1h-4.91zM567.16 445.7h12.9v15.1h-12.9zM584.4 445.7h4.91v15.1h-4.91zM593.65 445.7h12.9v15.1h-12.9zM610.89 445.7h4.91v15.1h-4.91zM620.14 445.7h12.9v15.1h-12.9zM637.37 445.7h4.91v15.1h-4.91zM646.62 445.7h12.9v15.1h-12.9zM663.86 445.7h4.91v15.1h-4.91zM673.11 445.7h12.9v15.1h-12.9zM690.35 445.7h4.91v15.1h-4.91zM699.6 445.7h12.9v15.1h-12.9zM716.83 445.7h4.91v15.1h-4.91zM726.08 445.7h12.9v15.1h-12.9zM743.32 445.7h4.91v15.1h-4.91zM752.57 445.7h12.9v15.1h-12.9zM769.81 445.7h4.91v15.1h-4.91zM779.05 445.7h12.9v15.1h-12.9zM796.29 445.7h4.91v15.1h-4.91zM805.54 445.7h12.9v15.1h-12.9zM822.78 445.7h4.91v15.1h-4.91zM832.03 445.7h12.9v15.1h-12.9zM849.26 445.7h4.91v15.1h-4.91zM858.51 445.7h12.9v15.1h-12.9zM875.75 445.7h4.91v15.1h-4.91zM885 445.7h12.9v15.1h-12.9zM902.24 445.7h4.91v15.1h-4.91zM911.48 445.7h12.9v15.1h-12.9zM928.72 445.7h4.91v15.1h-4.91zM937.97 445.7h12.9v15.1h-12.9zM955.21 445.7h4.91v15.1h-4.91zM964.46 445.7h12.9v15.1h-12.9zM981.69 445.7h4.91v15.1h-4.91zM990.94 445.7h12.9v15.1h-12.9zM1008.18 445.7h4.91v15.1h-4.91zM1017.43 445.7h12.9v15.1h-12.9zM1034.67 445.7h4.91v15.1h-4.91zM1043.92 445.7h12.9v15.1h-12.9zM1061.15 445.7h4.91v15.1h-4.91zM1070.4 445.7h12.9v15.1h-12.9zM1087.64 445.7h4.91v15.1h-4.91zM1096.89 445.7h12.9v15.1h-12.9zM1114.13 445.7h4.91v15.1h-4.91zM1123.37 445.7h12.9v15.1h-12.9zM1140.61 445.7h4.91v15.1h-4.91zM1149.86 445.7h12.9v15.1h-12.9zM1167.1 445.7h4.91v15.1h-4.91zM1176.35 445.7h12.9v15.1h-12.9zM1193.58 445.7h4.91v15.1h-4.91zM1202.83 445.7h12.9v15.1h-12.9zM1220.07 445.7h4.91v15.1h-4.91zM1229.32 445.7h12.9v15.1h-12.9zM1246.56 445.7h4.91v15.1h-4.91zM1255.81 445.7h12.9v15.1h-12.9zM1273.04 445.7h4.91v15.1h-4.91zM1282.29 445.7h12.9v15.1h-12.9zM1299.53 445.7h4.91v15.1h-4.91zM1308.78 445.7h12.9v15.1h-12.9zM1326.02 445.7h4.91v15.1h-4.91zM1335.26 445.7h12.9v15.1h-12.9zM1352.5 445.7h4.91v15.1h-4.91zM1361.75 445.7h12.9v15.1h-12.9zM1378.99 445.7h4.91v15.1h-4.91zM1388.24 445.7h12.9v15.1h-12.9zM1405.47 445.7h4.91v15.1h-4.91zM1414.72 445.7h12.9v15.1h-12.9zM1431.96 445.7h4.91v15.1h-4.91zM1441.21 445.7h12.9v15.1h-12.9zM1458.45 445.7h4.91v15.1h-4.91zM1467.69 445.7h12.9v15.1h-12.9zM1484.93 445.7h4.91v15.1h-4.91zM1494.18 445.7h12.9v15.1h-12.9zM1511.42 445.7h4.91v15.1h-4.91zM1520.67 445.7h12.9v15.1h-12.9zM1537.9 445.7h4.91v15.1h-4.91zM1547.15 445.7h12.9v15.1h-12.9zM1564.39 445.7h4.91v15.1h-4.91zM1573.64 445.7h12.9v15.1h-12.9zM1590.88 445.7h4.91v15.1h-4.91zM1600.13 445.7h12.9v15.1h-12.9zM1617.36 445.7h4.91v15.1h-4.91zM1626.61 445.7h12.9v15.1h-12.9zM1643.85 445.7h4.91v15.1h-4.91zM1653.1 445.7h12.9v15.1h-12.9zM1670.34 445.7h4.91v15.1h-4.91zM1679.58 445.7h12.9v15.1h-12.9zM1696.82 445.7h4.91v15.1h-4.91zM1706.07 445.7h12.9v15.1h-12.9zM1723.31 445.7h4.91v15.1h-4.91zM1732.56 445.7h12.9v15.1h-12.9zM1749.79 445.7h4.91v15.1h-4.91zM1759.04 445.7h12.9v15.1h-12.9zM1776.28 445.7h4.91v15.1h-4.91zM1785.53 445.7h12.9v15.1h-12.9zM1802.77 445.7h4.91v15.1h-4.91zM1812.02 445.7h12.9v15.1h-12.9zM1829.25 445.7h4.91v15.1h-4.91zM1838.5 445.7h12.9v15.1h-12.9zM1855.74 445.7h4.91v15.1h-4.91zM1864.99 445.7h12.9v15.1h-12.9zM1882.23 445.7h4.91v15.1h-4.91zM1891.47 445.7h12.9v15.1h-12.9zM1908.71 445.7h4.91v15.1h-4.91zM1917.96 445.7h12.9v15.1h-12.9zM1935.2 445.7h4.91v15.1h-4.91zM1944.45 445.7h12.9v15.1h-12.9zM1961.68 445.7h4.91v15.1h-4.91zM1970.93 445.7h12.9v15.1h-12.9zM1988.17 445.7h4.91v15.1h-4.91zM1997.42 445.7h12.9v15.1h-12.9zM2014.66 445.7h4.91v15.1h-4.91zM2023.91 445.7h12.9v15.1h-12.9zM2041.14 445.7h4.91v15.1h-4.91zM2050.39 445.7h12.9v15.1h-12.9zM2067.63 445.7h4.91v15.1h-4.91zM2076.88 445.7h12.9v15.1h-12.9zM2094.12 445.7h4.91v15.1h-4.91zM2103.36 445.7h12.9v15.1h-12.9zM2120.6 445.7h4.91v15.1h-4.91zM2129.85 445.7h12.9v15.1h-12.9zM2147.09 445.7h4.91v15.1h-4.91zM2156.34 445.7h12.9v15.1h-12.9zM2173.57 445.7h4.91v15.1h-4.91zM2182.82 445.7h12.9v15.1h-12.9zM2200.06 445.7h4.91v15.1h-4.91zM2209.31 445.7h12.9v15.1h-12.9zM2226.55 445.7h4.91v15.1h-4.91zM2235.79 445.7h12.9v15.1h-12.9zM2253.03 445.7h4.91v15.1h-4.91zM2262.28 445.7h12.9v15.1h-12.9zM2279.52 445.7h4.91v15.1h-4.91zM2288.77 445.7h12.9v15.1h-12.9zM2306 445.7h4.91v15.1h-4.91zM2315.25 445.7h12.9v15.1h-12.9zM2332.49 445.7h4.91v15.1h-4.91zM2341.74 445.7h12.9v15.1h-12.9zM2358.98 445.7h4.91v15.1h-4.91zM2368.23 445.7h12.9v15.1h-12.9zM2385.46 445.7h4.91v15.1h-4.91zM2394.71 445.7h12.9v15.1h-12.9zM2411.95 445.7h5.21v15.1h-5.21z" fill="#666"/>
<path d="M341.68 445.7h4.34v15.1h-4.34zM350.93 445.7h4.34v15.1h-4.34zM368.17 445.7h4.34v15.1h-4.34zM377.42 445.7h4.34v15.1h-4.34zM394.66 445.7h4.34v15.1h-4.34zM403.9 445.7h4.34v15.1h-4.34zM421.14 445.7h4.34v15.1h-4.34zM430.39 445.7h4.34v15.1h-4.34zM447.63 445.7h4.34v15.1h-4.34zM456.88 445.7h4.34v15.1h-4.34zM474.12 445.7h4.34v15.1h-4.34zM483.36 445.7h4.34v15.1h-4.34zM500.6 445.7h4.34v15.1h-4.34zM509.85 445.7h4.34v15.1h-4.34zM527.09 445.7h4.34v15.1h-4.34zM536.34 445.7h4.34v15.1h-4.34zM553.57 445.7h4.34v15.1h-4.34zM562.82 445.7h4.34v15.1h-4.34zM580.06 445.7h4.34v15.1h-4.34zM589.31 445.7h4.34v15.1h-4.34zM606.55 445.7h4.34v15.1h-4.34zM615.79 445.7h4.34v15.1h-4.34zM633.03 445.7h4.34v15.1h-4.34zM642.28 445.7h4.34v15.1h-4.34zM659.52 445.7h4.34v15.1h-4.34zM668.77 445.7h4.34v15.1h-4.34zM686 445.7h4.34v15.1h-4.34zM695.25 445.7h4.34v15.1h-4.34zM712.49 445.7h4.34v15.1h-4.34zM721.74 445.7h4.34v15.1h-4.34zM738.98 445.7h4.34v15.1h-4.34zM748.23 445.7h4.34v15.1h-4.34zM765.46 445.7h4.34v15.1h-4.34zM774.71 445.7h4.34v15.1h-4.34zM791.95 445.7h4.34v15.1h-4.34zM801.2 445.7h4.34v15.1h-4.34zM818.44 445.7h4.34v15.1h-4.34zM827.68 445.7h4.34v15.1h-4.34zM844.92 445.7h4.34v15.1h-4.34zM854.17 445.7h4.34v15.1h-4.34zM871.41 445.7h4.34v15.1h-4.34zM880.66 445.7h4.34v15.1h-4.34zM897.89 445.7h4.34v15.1h-4.34zM907.14 445.7h4.34v15.1h-4.34zM924.38 445.7h4.34v15.1h-4.34zM933.63 445.7h4.34v15.1h-4.34zM950.87 445.7h4.34v15.1h-4.34zM960.12 445.7h4.34v15.1h-4.34zM977.35 445.7h4.34v15.1h-4.34zM986.6 445.7h4.34v15.1h-4.34zM1003.84 445.7h4.34v15.1h-4.34zM1013.09 445.7h4.34v15.1h-4.34zM1030.33 445.7h4.34v15.1h-4.34zM1039.57 445.7h4.34v15.1h-4.34zM1056.81 445.7h4.34v15.1h-4.34zM1066.06 445.7h4.34v15.1h-4.34zM1083.3 445.7h4.34v15.1h-4.34zM1092.55 445.7h4.34v15.1h-4.34zM1109.78 445.7h4.34v15.1h-4.34zM1119.03 445.7h4.34v15.1h-4.34zM1136.27 445.7h4.34v15.1h-4.34zM1145.52 445.7h4.34v15.1h-4.34zM1162.76 445.7h4.34v15.1h-4.34zM1172 445.7h4.34v15.1h-4.34zM1189.24 445.7h4.34v15.1h-4.34zM1198.49 445.7h4.34v15.1h-4.34zM1215.73 445.7h4.34v15.1h-4.34zM1224.98 445.7h4.34v15.1h-4.34zM1242.21 445.7h4.34v15.1h-4.34zM1251.46 445.7h4.34v15.1h-4.34zM1268.7 445.7h4.34v15.1h-4.34zM1277.95 445.7h4.34v15.1h-4.34zM1295.19 445.7h4.34v15.1h-4.34zM1304.44 445.7h4.34v15.1h-4.34zM1321.67 445.7h4.34v15.1h-4.34zM1330.92 445.7h4.34v15.1h-4.34zM1348.16 445.7h4.34v15.1h-4.34zM1357.41 445.7h4.34v15.1h-4.34zM1374.65 445.7h4.34v15.1h-4.34zM1383.89 445.7h4.34v15.1h-4.34zM1401.13 445.7h4.34v15.1h-4.34zM1410.38 445.7h4.34v15.1h-4.34zM1427.62 445.7h4.34v15.1h-4.34zM1436.87 445.7h4.34v15.1h-4.34zM1454.1 445.7h4.34v15.1h-4.34zM1463.35 445.7h4.34v15.1h-4.34zM1480.59 445.7h4.34v15.1h-4.34zM1489.84 445.7h4.34v15.1h-4.34zM1507.08 445.7h4.34v15.1h-4.34zM1516.33 445.7h4.34v15.1h-4.34zM1533.56 445.7h4.34v15.1h-4.34zM1542.81 445.7h4.34v15.1h-4.34zM1560.05 445.7h4.34v15.1h-4.34zM1569.3 445.7h4.34v15.1h-4.34zM1586.54 445.7h4.34v15.1h-4.34zM1595.78 445.7h4.34v15.1h-4.34zM1613.02 445.7h4.34v15.1h-4.34zM1622.27 445.7h4.34v15.1h-4.34zM1639.51 445.7h4.34v15.1h-4.34zM1648.76 445.7h4.34v15.1h-4.34zM1665.99 445.7h4.34v15.1h-4.34zM1675.24 445.7h4.34v15.1h-4.34zM1692.48 445.7h4.34v15.1h-4.34zM1701.73 445.7h4.34v15.1h-4.34zM1718.97 445.7h4.34v15.1h-4.34zM1728.21 445.7h4.34v15.1h-4.34zM1745.45 445.7h4.34v15.1h-4.34zM1754.7 445.7h4.34v15.1h-4.34zM1771.94 445.7h4.34v15.1h-4.34zM1781.19 445.7h4.34v15.1h-4.34zM1798.42 445.7h4.34v15.1h-4.34zM1807.67 445.7h4.34v15.1h-4.34zM1824.91 445.7h4.34v15.1h-4.34zM1834.16 445.7h4.34v15.1h-4.34zM1851.4 445.7h4.34v15.1h-4.34zM1860.65 445.7h4.34v15.1h-4.34zM1877.88 445.7h4.34v15.1h-4.34zM1887.13 445.7h4.34v15.1h-4.34zM1904.37 445.7h4.34v15.1h-4.34zM1913.62 445.7h4.34v15.1h-4.34zM1930.86 445.7h4.34v15.1h-4.34zM1940.1 445.7h4.34v15.1h-4.34zM1957.34 445.7h4.34v15.1h-4.34zM1966.59 445.7h4.34v15.1h-4.34zM1983.83 445.7h4.34v15.1h-4.34zM1993.08 445.7h4.34v15.1h-4.34zM2010.31 445.7h4.34v15.1h-4.34zM2019.56 445.7h4.34v15.1h-4.34zM2036.8 445.7h4.34v15.1h-4.34zM2046.05 445.7h4.34v15.1h-4.34zM2063.29 445.7h4.34v15.1h-4.34zM2072.54 445.7h4.34v15.1h-4.34zM2089.77 445.7h4.34v15.1h-4.34zM2099.02 445.7h4.34v15.1h-4.34zM2116.26 445.7h4.34v15.1h-4.34zM2125.51 445.7h4.34v15.1h-4.34zM2142.75 445.7h4.34v15.1h-4.34zM2151.99 445.7h4.34v15.1h-4.34zM2169.23 445.7h4.34v15.1h-4.34zM2178.48 445.7h4.34v15.1h-4.34zM2195.72 445.7h4.34v15.1h-4.34zM2204.97 445.7h4.34v15.1h-4.34zM2222.2 445.7h4.34v15.1h-4.34zM2231.45 445.7h4.34v15.1h-4.34zM2248.69 445.7h4.34v15.1h-4.34zM2257.94 445.7h4.34v15.1h-4.34zM2275.18 445.7h4.34v15.1h-4.34zM2284.43 445.7h4.34v15.1h-4.34zM2301.66 445.7h4.34v15.1h-4.34zM2310.91 445.7h4.34v15.1h-4.34zM2328.15 445.7h4.34v15.1h-4.34zM2337.4 445.7h4.34v15.1h-4.34zM2354.64 445.7h4.34v15.1h-4.34zM2363.88 445.7h4.34v15.1h-4.34zM2381.12 445.7h4.34v15.1h-4.34zM2390.37 445.7h4.34v15.1h-4.34zM2407.61 445.7h4.34v15.1h-4.34z" fill="#29f57e"/>
<rect x="333" y="471" width="2084.16" height="15.1" fill="#666"/>
<rect x="333" y="496.3" width="2084.16" height="15.1" fill="#666"/>
<rect x="333" y="521.6" width="2084.16" height="15.1" fill="#666"/>
<path d="M333 546.9h13.16v15.1h-13.16zM363.52 546.9h9.12v15.1h-9.12zM390.01 546.9h9.12v15.1h-9.12zM416.5 546.9h9.12v15.1h-9.12zM442.98 546.9h9.12v15.1h-9.12zM469.47 546.9h9.12v15.1h-9.12zM495.96 546.9h9.12v15.1h-9.12zM522.44 546.9h9.12v15.1h-9.12zM548.93 546.9h9.12v15.1h-9.12zM575.41 546.9h9.12v15.1h-9.12zM601.9 546.9h9.12v15.1h-9.12zM628.39 546.9h9.12v15.1h-9.12zM654.87 546.9h9.12v15.1h-9.12zM681.36 546.9h9.12v15.1h-9.12zM707.84 546.9h9.12v15.1h-9.12zM734.33 546.9h9.12v15.1h-9.12zM760.82 546.9h9.12v15.1h-9.12zM787.3 546.9h9.12v15.1h-9.12zM813.79 546.9h9.12v15.1h-9.12zM840.28 546.9h9.12v15.1h-9.12zM866.76 546.9h9.12v15.1h-9.12zM893.25 546.9h9.12v15.1h-9.12zM919.73 546.9h9.12v15.1h-9.12zM946.22 546.9h9.12v15.1h-9.12zM972.71 546.9h9.12v15.1h-9.12zM999.19 546.9h9.12v15.1h-9.12zM1025.68 546.9h9.12v15.1h-9.12zM1052.17 546.9h9.12v15.1h-9.12zM1078.65 546.9h9.12v15.1h-9.12zM1105.14 546.9h9.12v15.1h-9.12zM1131.62 546.9h9.12v15.1h-9.12zM1158.11 546.9h9.12v15.1h-9.12zM1184.6 546.9h9.12v15.1h-9.12zM1211.08 546.9h9.12v15.1h-9.12zM1237.57 546.9h9.12v15.1h-9.12zM1264.06 546.9h9.12v15.1h-9.12zM1290.54 546.9h9.12v15.1h-9.12zM1317.03 546.9h9.12v15.1h-9.12zM1343.51 546.9h9.12v15.1h-9.12zM1370 546.9h9.12v15.1h-9.12zM1396.49 546.9h9.12v15.1h-9.12zM1422.97 546.9h9.12v15.1h-9.12zM1449.46 546.9h9.12v15.1h-9.12zM1475.94 546.9h9.12v15.1h-9.12zM1502.43 546.9h9.12v15.1h-9.12zM1528.92 546.9h9.12v15.1h-9.12zM1555.4 546.9h9.12v15.1h-9.12zM1581.89 546.9h9.12v15.1h-9.12zM1608.38 546.9h9.12v15.1h-9.12zM1634.86 546.9h9.12v15.1h-9.12zM1661.35 546.9h9.12v15.1h-9.12zM1687.83 546.9h9.12v15.1h-9.12zM1714.32 546.9h9.12v15.1h-9.12zM1740.81 546.9h9.12v15.1h-9.12zM1767.29 546.9h9.12v15.1h-9.12zM1793.78 546.9h9.12v15.1h-9.12zM1820.27 546.9h9.12v15.1h-9.12zM1846.75 546.9h9.12v15.1h-9.12zM1873.24 546.9h9.12v15.1h-9.12zM1899.72 546.9h9.12v15.1h-9.12zM1926.21 546.9h9.12v15.1h-9.12zM1952.7 546.9h9.12v15.1h-9.12zM1979.18 546.9h9.12v15.1h-9.12zM2005.67 546.9h9.12v15.1h-9.12zM2032.15 546.9h9.12v15.1h-9.12zM2058.64 546.9h9.12v15.1h-9.12zM2085.13 546.9h9.12v15.1h-9.12zM2111.61 546.9h9.12v15.1h-9.12zM2138.1 546.9h9.12v15.1h-9.12zM2164.59 546.9h9.12v15.1h-9.12zM2191.07 546.9h9.12v15.1h-9.12zM2217.56 546.9h9.12v15.1h-9.12zM2244.04 546.9h9.12v15.1h-9.12zM2270.53 546.9h9.12v15.1h-9.12zM2297.02 546.9h9.12v15.1h-9.12zM2323.5 546.9h9.12v15.1h-9.12zM2349.99 546.9h9.12v15.1h-9.12zM2376.48 546.9h9.12v15.1h-9.12zM2402.96 546.9h9.12v15.1h-9.12z" fill="#666"/>
<path d="M346.16 546.9h17.37v15.1h-17.37zM372.64 546.9h17.37v15.1h-17.37zM399.13 546.9h17.37v15.1h-17.37zM425.61 546.9h17.37v15.1h-17.37zM452.1 546.9h17.37v15.1h-17.37zM478.59 546.9h17.37v15.1h-17.37zM505.07 546.9h17.37v15.1h-17.37zM531.56 546.9h17.37v15.1h-17.37zM558.05 546.9h17.37v15.1h-17.37zM584.53 546.9h17.37v15.1h-17.37zM611.02 546.9h17.37v15.1h-17.37zM637.5 546.9h17.37v15.1h-17.37zM663.99 546.9h17.37v15.1h-17.37zM690.48 546.9h17.37v15.1h-17.37zM716.96 546.9h17.37v15.1h-17.37zM743.45 546.9h17.37v15.1h-17.37zM769.94 546.9h17.37v15.1h-17.37zM796.42 546.9h17.37v15.1h-17.37zM822.91 546.9h17.37v15.1h-17.37zM849.39 546.9h17.37v15.1h-17.37zM875.88 546.9h17.37v15.1h-17.37zM902.37 546.9h17.37v15.1h-17.37zM928.85 546.9h17.37v15.1h-17.37zM955.34 546.9h17.37v15.1h-17.37zM981.83 546.9h17.37v15.1h-17.37zM1008.31 546.9h17.37v15.1h-17.37zM1034.8 546.9h17.37v15.1h-17.37zM1061.28 546.9h17.37v15.1h-17.37zM1087.77 546.9h17.37v15.1h-17.37zM1114.26 546.9h17.37v15.1h-17.37zM1140.74 546.9h17.37v15.1h-17.37zM1167.23 546.9h17.37v15.1h-17.37zM1193.71 546.9h17.37v15.1h-17.37zM1220.2 546.9h17.37v15.1h-17.37zM1246.69 546.9h17.37v15.1h-17.37zM1273.17 546.9h17.37v15.1h-17.37zM1299.66 546.9h17.37v15.1h-17.37zM1326.15 546.9h17.37v15.1h-17.37zM1352.63 546.9h17.37v15.1h-17.37zM1379.12 546.9h17.37v15.1h-17.37zM1405.6 546.9h17.37v15.1h-17.37zM1432.09 546.9h17.37v15.1h-17.37zM1458.58 546.9h17.37v15.1h-17.37zM1485.06 546.9h17.37v15.1h-17.37zM1511.55 546.9h17.37v15.1h-17.37zM1538.04 546.9h17.37v15.1h-17.37zM1564.52 546.9h17.37v15.1h-17.37zM1591.01 546.9h17.37v15.1h-17.37zM1617.49 546.9h17.37v15.1h-17.37zM1643.98 546.9h17.37v15.1h-17.37zM1670.47 546.9h17.37v15.1h-17.37zM1696.95 546.9h17.37v15.1h-17.37zM1723.44 546.9h17.37v15.1h-17.37zM1749.92 546.9h17.37v15.1h-17.37zM1776.41 546.9h17.37v15.1h-17.37zM1802.9 546.9h17.37v15.1h-17.37zM1829.38 546.9h17.37v15.1h-17.37zM1855.87 546.9h17.37v15.1h-17.37zM1882.36 546.9h17.37v15.1h-17.37zM1908.84 546.9h17.37v15.1h-17.37zM1935.33 546.9h17.37v15.1h-17.37zM1961.81 546.9h17.37v15.1h-17.37zM1988.3 546.9h17.37v15.1h-17.37zM2014.79 546.9h17.37v15.1h-17.37zM2041.27 546.9h17.37v15.1h-17.37zM2067.76 546.9h17.37v15.1h-17.37zM2094.25 546.9h17.37v15.1h-17.37zM2120.73 546.9h17.37v15.1h-17.37zM2147.22 546.9h17.37v15.1h-17.37zM2173.7 546.9h17.37v15.1h-17.37zM2200.19 546.9h17.37v15.1h-17.37zM2226.68 546.9h17.37v15.1h-17.37zM2253.16 546.9h17.37v15.1h-17.37zM2279.65 546.9h17.37v15.1h-17.37zM2306.14 546.9h17.37v15.1h-17.37zM2332.62 546.9h17.37v15.1h-17.37zM2359.11 546.9h17.37v15.1h-17.37zM2385.59 546.9h17.37v15.1h-17.37zM2412.08 546.9h5.08v15.1h-5.08z" fill="#29f57e"/>
<path d="M333 572.2h22.4v15.1h-22.4zM372.77 572.2h9.12v15.1h-9.12zM399.26 572.2h9.12v15.1h-9.12zM425.75 572.2h9.12v15.1h-9.12zM452.23 572.2h9.12v15.1h-9.12zM478.72 572.2h9.12v15.1h-9.12zM505.2 572.2h9.12v15.1h-9.12zM531.69 572.2h9.12v15.1h-9.12zM558.18 572.2h9.12v15.1h-9.12zM584.66 572.2h9.12v15.1h-9.12zM611.15 572.2h9.12v15.1h-9.12zM637.63 572.2h9.12v15.1h-9.12zM664.12 572.2h9.12v15.1h-9.12zM690.61 572.2h9.12v15.1h-9.12zM717.09 572.2h9.12v15.1h-9.12zM743.58 572.2h9.12v15.1h-9.12zM770.07 572.2h9.12v15.1h-9.12zM796.55 572.2h9.12v15.1h-9.12zM823.04 572.2h9.12v15.1h-9.12zM849.52 572.2h9.12v15.1h-9.12zM876.01 572.2h9.12v15.1h-9.12zM902.5 572.2h9.12v15.1h-9.12zM928.98 572.2h9.12v15.1h-9.12zM955.47 572.2h9.12v15.1h-9.12zM981.96 572.2h9.12v15.1h-9.12zM1008.44 572.2h9.12v15.1h-9.12zM1034.93 572.2h9.12v15.1h-9.12zM1061.41 572.2h9.12v15.1h-9.12zM1087.9 572.2h9.12v15.1h-9.12zM1114.39 572.2h9.12v15.1h-9.12zM1140.87 572.2h9.12v15.1h-9.12zM1167.36 572.2h9.12v15.1h-9.12zM1193.84 572.2h9.12v15.1h-9.12zM1220.33 572.2h9.12v15.1h-9.12zM1246.82 572.2h9.12v15.1h-9.12zM1273.3 572.2h9.12v15.1h-9.12zM1299.79 572.2h9.12v15.1h-9.12zM1326.28 572.2h9.12v15.1h-9.12zM1352.76 572.2h9.12v15.1h-9.12zM1379.25 572.2h9.12v15.1h-9.12zM1405.73 572.2h9.12v15.1h-9.12zM1432.22 572.2h9.12v15.1h-9.12zM1458.71 572.2h9.12v15.1h-9.12zM1485.19 572.2h9.12v15.1h-9.12zM1511.68 572.2h9.12v15.1h-9.12zM1538.17 572.2h9.12v15.1h-9.12zM1564.65 572.2h9.12v15.1h-9.12zM1591.14 572.2h9.12v15.1h-9.12zM1617.62 572.2h9.12v15.1h-9.12zM1644.11 572.2h9.12v15.1h-9.12zM1670.6 572.2h9.12v15.1h-9.12zM1697.08 572.2h9.12v15.1h-9.12zM1723.57 572.2h9.12v15.1h-9.12zM1750.06 572.2h9.12v15.1h-9.12zM1776.54 572.2h9.12v15.1h-9.12zM1803.03 572.2h9.12v15.1h-9.12zM1829.51 572.2h9.12v15.1h-9.12zM1856 572.2h9.12v15.1h-9.12zM1882.49 572.2h9.12v15.1h-9.12zM1908.97 572.2h9.12v15.1h-9.12zM1935.46 572.2h9.12v15.1h-9.12zM1961.94 572.2h9.12v15.1h-9.12zM1988.43 572.2h9.12v15.1h-9.12zM2014.92 572.2h9.12v15.1h-9.12zM2041.4 572.2h9.12v15.1h-9.12zM2067.89 572.2h9.12v15.1h-9.12zM2094.38 572.2h9.12v15.1h-9.12zM2120.86 572.2h9.12v15.1h-9.12zM2147.35 572.2h9.12v15.1h-9.12zM2173.83 572.2h9.12v15.1h-9.12zM2200.32 572.2h9.12v15.1h-9.12zM2226.81 572.2h9.12v15.1h-9.12zM2253.29 572.2h9.12v15.1h-9.12zM2279.78 572.2h9.12v15.1h-9.12zM2306.27 572.2h9.12v15.1h-9.12zM2332.75 572.2h9.12v15.1h-9.12zM2359.24 572.2h9.12v15.1h-9.12zM2385.72 572.2h9.12v15.1h-9.12zM2412.21 572.2h4.95v15.1h-4.95z" fill="#666"/>
<path d="M355.4 572.2h17.37v15.1h-17.37zM381.89 572.2h17.37v15.1h-17.37zM408.38 572.2h17.37v15.1h-17.37zM434.86 572.2h17.37v15.1h-17.37zM461.35 572.2h17.37v15.1h-17.37zM487.84 572.2h17.37v15.1h-17.37zM514.32 572.2h17.37v15.1h-17.37zM540.81 572.2h17.37v15.1h-17.37zM567.29 572.2h17.37v15.1h-17.37zM593.78 572.2h17.37v15.1h-17.37zM620.27 572.2h17.37v15.1h-17.37zM646.75 572.2h17.37v15.1h-17.37zM673.24 572.2h17.37v15.1h-17.37zM699.73 572.2h17.37v15.1h-17.37zM726.21 572.2h17.37v15.1h-17.37zM752.7 572.2h17.37v15.1h-17.37zM779.18 572.2h17.37v15.1h-17.37zM805.67 572.2h17.37v15.1h-17.37zM832.16 572.2h17.37v15.1h-17.37zM858.64 572.2h17.37v15.1h-17.37zM885.13 572.2h17.37v15.1h-17.37zM911.61 572.2h17.37v15.1h-17.37zM938.1 572.2h17.37v15.1h-17.37zM964.59 572.2h17.37v15.1h-17.37zM991.07 572.2h17.37v15.1h-17.37zM1017.56 572.2h17.37v15.1h-17.37zM1044.05 572.2h17.37v15.1h-17.37zM1070.53 572.2h17.37v15.1h-17.37zM1097.02 572.2h17.37v15.1h-17.37zM1123.5 572.2h17.37v15.1h-17.37zM1149.99 572.2h17.37v15.1h-17.37zM1176.48 572.2h17.37v15.1h-17.37zM1202.96 572.2h17.37v15.1h-17.37zM1229.45 572.2h17.37v15.1h-17.37zM1255.94 572.2h17.37v15.1h-17.37zM1282.42 572.2h17.37v15.1h-17.37zM1308.91 572.2h17.37v15.1h-17.37zM1335.39 572.2h17.37v15.1h-17.37zM1361.88 572.2h17.37v15.1h-17.37zM1388.37 572.2h17.37v15.1h-17.37zM1414.85 572.2h17.37v15.1h-17.37zM1441.34 572.2h17.37v15.1h-17.37zM1467.83 572.2h17.37v15.1h-17.37zM1494.31 572.2h17.37v15.1h-17.37zM1520.8 572.2h17.37v15.1h-17.37zM1547.28 572.2h17.37v15.1h-17.37zM1573.77 572.2h17.37v15.1h-17.37zM1600.26 572.2h17.37v15.1h-17.37zM1626.74 572.2h17.37v15.1h-17.37zM1653.23 572.2h17.37v15.1h-17.37zM1679.71 572.2h17.37v15.1h-17.37zM1706.2 572.2h17.37v15.1h-17.37zM1732.69 572.2h17.37v15.1h-17.37zM1759.17 572.2h17.37v15.1h-17.37zM1785.66 572.2h17.37v15.1h-17.37zM1812.15 572.2h17.37v15.1h-17.37zM1838.63 572.2h17.37v15.1h-17.37zM1865.12 572.2h17.37v15.1h-17.37zM1891.6 572.2h17.37v15.1h-17.37zM1918.09 572.2h17.37v15.1h-17.37zM1944.58 572.2h17.37v15.1h-17.37zM1971.06 572.2h17.37v15.1h-17.37zM1997.55 572.2h17.37v15.1h-17.37zM2024.04 572.2h17.37v15.1h-17.37zM2050.52 572.2h17.37v15.1h-17.37zM2077.01 572.2h17.37v15.1h-17.37zM2103.49 572.2h17.37v15.1h-17.37zM2129.98 572.2h17.37v15.1h-17.37zM2156.47 572.2h17.37v15.1h-17.37zM2182.95 572.2h17.37v15.1h-17.37zM2209.44 572.2h17.37v15.1h-17.37zM2235.92 572.2h17.37v15.1h-17.37zM2262.41 572.2h17.37v15.1h-17.37zM2288.9 572.2h17.37v15.1h-17.37zM2315.38 572.2h17.37v15.1h-17.37zM2341.87 572.2h17.37v15.1h-17.37zM2368.36 572.2h17.37v15.1h-17.37zM2394.84 572.2h17.37v15.1h-17.37z" fill="#29f57e"/>
<rect x="333" y="597.5" width="2084.16" height="15.1" fill="#666"/>
<path d="M333 622.8h30.7v15.1h-30.7zM367.61 622.8h5.34v15.1h-5.34zM376.85 622.8h13.33v15.1h-13.33zM394.09 622.8h5.34v15.1h-5.34zM403.34 622.8h13.33v15.1h-13.33zM420.58 622.8h5.34v15.1h-5.34zM429.83 622.8h13.33v15.1h-13.33zM447.06 622.8h5.34v15.1h-5.34zM456.31 622.8h13.33v15.1h-13.33zM473.55 622.8h5.34v15.1h-5.34zM482.8 622.8h13.33v15.1h-13.33zM500.04 622.8h5.34v15.1h-5.34zM509.29 622.8h13.33v15.1h-13.33zM526.52 622.8h5.34v15.1h-5.34zM535.77 622.8h13.33v15.1h-13.33zM553.01 622.8h5.34v15.1h-5.34zM562.26 622.8h13.33v15.1h-13.33zM579.5 622.8h5.34v15.1h-5.34zM588.74 622.8h13.33v15.1h-13.33zM605.98 622.8h5.34v15.1h-5.34zM615.23 622.8h13.33v15.1h-13.33zM632.47 622.8h5.34v15.1h-5.34zM641.72 622.8h13.33v15.1h-13.33zM658.95 622.8h5.34v15.1h-5.34zM668.2 622.8h13.33v15.1h-13.33zM685.44 622.8h5.34v15.1h-5.34zM694.69 622.8h13.33v15.1h-13.33zM711.93 622.8h5.34v15.1h-5.34zM721.17 622.8h13.33v15.1h-13.33zM738.41 622.8h5.34v15.1h-5.34zM747.66 622.8h13.33v15.1h-13.33zM764.9 622.8h5.34v15.1h-5.34zM774.15 622.8h13.33v15.1h-13.33zM791.38 622.8h5.34v15.1h-5.34zM800.63 622.8h13.33v15.1h-13.33zM817.87 622.8h5.34v15.1h-5.34zM827.12 622.8h13.33v15.1h-13.33zM844.36 622.8h5.34v15.1h-5.34zM853.61 622.8h13.33v15.1h-13.33zM870.84 622.8h5.34v15.1h-5.34zM880.09 622.8h13.33v15.1h-13.33zM897.33 622.8h5.34v15.1h-5.34zM906.58 622.8h13.33v15.1h-13.33zM923.82 622.8h5.34v15.1h-5.34zM933.06 622.8h13.33v15.1h-13.33zM950.3 622.8h5.34v15.1h-5.34zM959.55 622.8h13.33v15.1h-13.33zM976.79 622.8h5.34v15.1h-5.34zM986.04 622.8h13.33v15.1h-13.33zM1003.27 622.8h5.34v15.1h-5.34zM1012.52 622.8h13.33v15.1h-13.33zM1029.76 622.8h5.34v15.1h-5.34zM1039.01 622.8h13.33v15.1h-13.33zM1056.25 622.8h5.34v15.1h-5.34zM1065.5 622.8h13.33v15.1h-13.33zM1082.73 622.8h5.34v15.1h-5.34zM1091.98 622.8h13.33v15.1h-13.33zM1109.22 622.8h5.34v15.1h-5.34zM1118.47 622.8h13.33v15.1h-13.33zM1135.71 622.8h5.34v15.1h-5.34zM1144.95 622.8h13.33v15.1h-13.33zM1162.19 622.8h5.34v15.1h-5.34zM1171.44 622.8h13.33v15.1h-13.33zM1188.68 622.8h5.34v15.1h-5.34zM1197.93 622.8h13.33v15.1h-13.33zM1215.16 622.8h5.34v15.1h-5.34zM1224.41 622.8h13.33v15.1h-13.33zM1241.65 622.8h5.34v15.1h-5.34zM1250.9 622.8h13.33v15.1h-13.33zM1268.14 622.8h5.34v15.1h-5.34zM1277.38 622.8h13.33v15.1h-13.33zM1294.62 622.8h5.34v15.1h-5.34zM1303.87 622.8h13.33v15.1h-13.33zM1321.11 622.8h5.34v15.1h-5.34zM1330.36 622.8h13.33v15.1h-13.33zM1347.6 622.8h5.34v15.1h-5.34zM1356.84 622.8h13.33v15.1h-13.33zM1374.08 622.8h5.34v15.1h-5.34zM1383.33 622.8h13.33v15.1h-13.33zM1400.57 622.8h5.34v15.1h-5.34zM1409.82 622.8h13.33v15.1h-13.33zM1427.05 622.8h5.34v15.1h-5.34zM1436.3 622.8h13.33v15.1h-13.33zM1453.54 622.8h5.34v15.1h-5.34zM1462.79 622.8h13.33v15.1h-13.33zM1480.03 622.8h5.34v15.1h-5.34zM1489.27 622.8h13.33v15.1h-13.33zM1506.51 622.8h5.34v15.1h-5.34zM1515.76 622.8h13.33v15.1h-13.33zM1533 622.8h5.34v15.1h-5.34zM1542.25 622.8h13.33v15.1h-13.33zM1559.48 622.8h5.34v15.1h-5.34zM1568.73 622.8h13.33v15.1h-13.33zM1585.97 622.8h5.34v15.1h-5.34zM1595.22 622.8h13.33v15.1h-13.33zM1612.46 622.8h5.34v15.1h-5.34zM1621.71 622.8h13.33v15.1h-13.33zM1638.94 622.8h5.34v15.1h-5.34zM1648.19 622.8h13.33v15.1h-13.33zM1665.43 622.8h5.34v15.1h-5.34zM1674.68 622.8h13.33v15.1h-13.33zM1691.92 622.8h5.34v15.1h-5.34zM1701.16 622.8h13.33v15.1h-13.33zM1718.4 622.8h5.34v15.1h-5.34zM1727.65 622.8h13.33v15.1h-13.33zM1744.89 622.8h5.34v15.1h-5.34zM1754.14 622.8h13.33v15.1h-13.33zM1771.37 622.8h5.34v15.1h-5.34zM1780.62 622.8h13.33v15.1h-13.33zM1797.86 622.8h5.34v15.1h-5.34zM1807.11 622.8h13.33v15.1h-13.33zM1824.35 622.8h5.34v15.1h-5.34zM1833.6 622.8h13.33v15.1h-13.33zM1850.83 622.8h5.34v15.1h-5.34zM1860.08 622.8h13.33v15.1h-13.33zM1877.32 622.8h5.34v15.1h-5.34zM1886.57 622.8h13.33v15.1h-13.33zM1903.81 622.8h5.34v15.1h-5.34zM1913.05 622.8h13.33v15.1h-13.33zM1930.29 622.8h5.34v15.1h-5.34zM1939.54 622.8h13.33v15.1h-13.33zM1956.78 622.8h5.34v15.1h-5.34zM1966.03 622.8h13.33v15.1h-13.33zM1983.26 622.8h5.34v15.1h-5.34zM1992.51 622.8h13.33v15.1h-13.33zM2009.75 622.8h5.34v15.1h-5.34zM2019 622.8h13.33v15.1h-13.33zM2036.24 622.8h5.34v15.1h-5.34zM2045.48 622.8h13.33v15.1h-13.33zM2062.72 622.8h5.34v15.1h-5.34zM2071.97 622.8h13.33v15.1h-13.33zM2089.21 622.8h5.34v15.1h-5.34zM2098.46 622.8h13.33v15.1h-13.33zM2115.69 622.8h5.34v15.1h-5.34zM2124.94 622.8h13.33v15.1h-13.33zM2142.18 622.8h5.34v15.1h-5.34zM2151.43 622.8h13.33v15.1h-13.33zM2168.67 622.8h5.34v15.1h-5.34zM2177.92 622.8h13.33v15.1h-13.33zM2195.15 622.8h5.34v15.1h-5.34zM2204.4 622.8h13.33v15.1h-13.33zM2221.64 622.8h5.34v15.1h-5.34zM2230.89 622.8h13.33v15.1h-13.33zM2248.13 622.8h5.34v15.1h-5.34zM2257.37 622.8h13.33v15.1h-13.33zM2274.61 622.8h5.34v15.1h-5.34zM2283.86 622.8h13.33v15.1h-13.33zM2301.1 622.8h5.34v15.1h-5.34zM2310.35 622.8h13.33v15.1h-13.33zM2327.58 622.8h5.34v15.1h-5.34zM2336.83 622.8h13.33v15.1h-13.33zM2354.07 622.8h5.34v15.1h-5.34zM2363.32 622.8h13.33v15.1h-13.33zM2380.56 622.8h5.34v15.1h-5.34zM2389.81 622.8h13.33v15.1h-13.33zM2407.04 622.8h5.34v15.1h-5.34zM2416.29 622.8h0.87v15.1h-0.87z" fill="#666"/>
<path d="M363.7 622.8h3.91v15.1h-3.91zM372.95 622.8h3.91v15.1h-3.91zM390.18 622.8h3.91v15.1h-3.91zM399.43 622.8h3.91v15.1h-3.91zM416.67 622.8h3.91v15.1h-3.91zM425.92 622.8h3.91v15.1h-3.91zM443.16 622.8h3.91v15.1h-3.91zM452.4 622.8h3.91v15.1h-3.91zM469.64 622.8h3.91v15.1h-3.91zM478.89 622.8h3.91v15.1h-3.91zM496.13 622.8h3.91v15.1h-3.91zM505.38 622.8h3.91v15.1h-3.91zM522.62 622.8h3.91v15.1h-3.91zM531.86 622.8h3.91v15.1h-3.91zM549.1 622.8h3.91v15.1h-3.91zM558.35 622.8h3.91v15.1h-3.91zM575.59 622.8h3.91v15.1h-3.91zM584.84 622.8h3.91v15.1h-3.91zM602.07 622.8h3.91v15.1h-3.91zM611.32 622.8h3.91v15.1h-3.91zM628.56 622.8h3.91v15.1h-3.91zM637.81 622.8h3.91v15.1h-3.91zM655.05 622.8h3.91v15.1h-3.91zM664.29 622.8h3.91v15.1h-3.91zM681.53 622.8h3.91v15.1h-3.91zM690.78 622.8h3.91v15.1h-3.91zM708.02 622.8h3.91v15.1h-3.91zM717.27 622.8h3.91v15.1h-3.91zM734.5 622.8h3.91v15.1h-3.91zM743.75 622.8h3.91v15.1h-3.91zM760.99 622.8h3.91v15.1h-3.91zM770.24 622.8h3.91v15.1h-3.91zM787.48 622.8h3.91v15.1h-3.91zM796.73 622.8h3.91v15.1h-3.91zM813.96 622.8h3.91v15.1h-3.91zM823.21 622.8h3.91v15.1h-3.91zM840.45 622.8h3.91v15.1h-3.91zM849.7 622.8h3.91v15.1h-3.91zM866.94 622.8h3.91v15.1h-3.91zM876.18 622.8h3.91v15.1h-3.91zM893.42 622.8h3.91v15.1h-3.91zM902.67 622.8h3.91v15.1h-3.91zM919.91 622.8h3.91v15.1h-3.91zM929.16 622.8h3.91v15.1h-3.91zM946.39 622.8h3.91v15.1h-3.91zM955.64 622.8h3.91v15.1h-3.91zM972.88 622.8h3.91v15.1h-3.91zM982.13 622.8h3.91v15.1h-3.91zM999.37 622.8h3.91v15.1h-3.91zM1008.62 622.8h3.91v15.1h-3.91zM1025.85 622.8h3.91v15.1h-3.91zM1035.1 622.8h3.91v15.1h-3.91zM1052.34 622.8h3.91v15.1h-3.91zM1061.59 622.8h3.91v15.1h-3.91zM1078.83 622.8h3.91v15.1h-3.91zM1088.07 622.8h3.91v15.1h-3.91zM1105.31 622.8h3.91v15.1h-3.91zM1114.56 622.8h3.91v15.1h-3.91zM1131.8 622.8h3.91v15.1h-3.91zM1141.05 622.8h3.91v15.1h-3.91zM1158.28 622.8h3.91v15.1h-3.91zM1167.53 622.8h3.91v15.1h-3.91zM1184.77 622.8h3.91v15.1h-3.91zM1194.02 622.8h3.91v15.1h-3.91zM1211.26 622.8h3.91v15.1h-3.91zM1220.5 622.8h3.91v15.1h-3.91zM1237.74 622.8h3.91v15.1h-3.91zM1246.99 622.8h3.91v15.1h-3.91zM1264.23 622.8h3.91v15.1h-3.91zM1273.48 622.8h3.91v15.1h-3.91zM1290.71 622.8h3.91v15.1h-3.91zM1299.96 622.8h3.91v15.1h-3.91zM1317.2 622.8h3.91v15.1h-3.91zM1326.45 622.8h3.91v15.1h-3.91zM1343.69 622.8h3.91v15.1h-3.91zM1352.94 622.8h3.91v15.1h-3.91zM1370.17 622.8h3.91v15.1h-3.91zM1379.42 622.8h3.91v15.1h-3.91zM1396.66 622.8h3.91v15.1h-3.91zM1405.91 622.8h3.91v15.1h-3.91zM1423.15 622.8h3.91v15.1h-3.91zM1432.39 622.8h3.91v15.1h-3.91zM1449.63 622.8h3.91v15.1h-3.91zM1458.88 622.8h3.91v15.1h-3.91zM1476.12 622.8h3.91v15.1h-3.91zM1485.37 622.8h3.91v15.1h-3.91zM1502.6 622.8h3.91v15.1h-3.91zM1511.85 622.8h3.91v15.1h-3.91zM1529.09 622.8h3.91v15.1h-3.91zM1538.34 622.8h3.91v15.1h-3.91zM1555.58 622.8h3.91v15.1h-3.91zM1564.83 622.8h3.91v15.1h-3.91zM1582.06 622.8h3.91v15.1h-3.91zM1591.31 622.8h3.91v15.1h-3.91zM1608.55 622.8h3.91v15.1h-3.91zM1617.8 622.8h3.91v15.1h-3.91zM1635.04 622.8h3.91v15.1h-3.91zM1644.28 622.8h3.91v15.1h-3.91zM1661.52 622.8h3.91v15.1h-3.91zM1670.77 622.8h3.91v15.1h-3.91zM1688.01 622.8h3.91v15.1h-3.91zM1697.26 622.8h3.91v15.1h-3.91zM1714.49 622.8h3.91v15.1h-3.91zM1723.74 622.8h3.91v15.1h-3.91zM1740.98 622.8h3.91v15.1h-3.91zM1750.23 622.8h3.91v15.1h-3.91zM1767.47 622.8h3.91v15.1h-3.91zM1776.71 622.8h3.91v15.1h-3.91zM1793.95 622.8h3.91v15.1h-3.91zM1803.2 622.8h3.91v15.1h-3.91zM1820.44 622.8h3.91v15.1h-3.91zM1829.69 622.8h3.91v15.1h-3.91zM1846.93 622.8h3.91v15.1h-3.91zM1856.17 622.8h3.91v15.1h-3.91zM1873.41 622.8h3.91v15.1h-3.91zM1882.66 622.8h3.91v15.1h-3.91zM1899.9 622.8h3.91v15.1h-3.91zM1909.15 622.8h3.91v15.1h-3.91zM1926.38 622.8h3.91v15.1h-3.91zM1935.63 622.8h3.91v15.1h-3.91zM1952.87 622.8h3.91v15.1h-3.91zM1962.12 622.8h3.91v15.1h-3.91zM1979.36 622.8h3.91v15.1h-3.91zM1988.6 622.8h3.91v15.1h-3.91zM2005.84 622.8h3.91v15.1h-3.91zM2015.09 622.8h3.91v15.1h-3.91zM2032.33 622.8h3.91v15.1h-3.91zM2041.58 622.8h3.91v15.1h-3.91zM2058.81 622.8h3.91v15.1h-3.91zM2068.06 622.8h3.91v15.1h-3.91zM2085.3 622.8h3.91v15.1h-3.91zM2094.55 622.8h3.91v15.1h-3.91zM2111.79 622.8h3.91v15.1h-3.91zM2121.04 622.8h3.91v15.1h-3.91zM2138.27 622.8h3.91v15.1h-3.91zM2147.52 622.8h3.91v15.1h-3.91zM2164.76 622.8h3.91v15.1h-3.91zM2174.01 622.8h3.91v15.1h-3.91zM2191.25 622.8h3.91v15.1h-3.91zM2200.49 622.8h3.91v15.1h-3.91zM2217.73 622.8h3.91v15.1h-3.91zM2226.98 622.8h3.91v15.1h-3.91zM2244.22 622.8h3.91v15.1h-3.91zM2253.47 622.8h3.91v15.1h-3.91zM2270.7 622.8h3.91v15.1h-3.91zM2279.95 622.8h3.91v15.1h-3.91zM2297.19 622.8h3.91v15.1h-3.91zM2306.44 622.8h3.91v15.1h-3.91zM2323.68 622.8h3.91v15.1h-3.91zM2332.93 622.8h3.91v15.1h-3.91zM2350.16 622.8h3.91v15.1h-3.91zM2359.41 622.8h3.91v15.1h-3.91zM2376.65 622.8h3.91v15.1h-3.91zM2385.9 622.8h3.91v15.1h-3.91zM2403.14 622.8h3.91v15.1h-3.91zM2412.38 622.8h3.91v15.1h-3.91z" fill="#29f57e"/>
<rect x="333" y="648.1" width="2084.16" height="15.1" fill="#666"/>
<rect x="333" y="673.4" width="2084.16" height="15.1" fill="#666"/>
<rect x="333" y="698.7" width="2084.16" height="15.1" fill="#666"/>
<rect x="333" y="724" width="2084.16" height="15.1" fill="#666"/>
<rect x="333" y="749.3" width="2084.16" height="15.1" fill="#666"/>
<path d="M333 774.6h35.39v15.1h-35.39zM372.73 774.6h4.91v15.1h-4.91zM381.98 774.6h12.9v15.1h-12.9zM399.22 774.6h4.91v15.1h-4.91zM408.46 774.6h12.9v15.1h-12.9zM425.7 774.6h4.91v15.1h-4.91zM434.95 774.6h12.9v15.1h-12.9zM452.19 774.6h4.91v15.1h-4.91zM461.44 774.6h12.9v15.1h-12.9zM478.67 774.6h4.91v15.1h-4.91zM487.92 774.6h12.9v15.1h-12.9zM505.16 774.6h4.91v15.1h-4.91zM514.41 774.6h12.9v15.1h-12.9zM531.65 774.6h4.91v15.1h-4.91zM540.89 774.6h12.9v15.1h-12.9zM558.13 774.6h4.91v15.1h-4.91zM567.38 774.6h12.9v15.1h-12.9zM584.62 774.6h4.91v15.1h-4.91zM593.87 774.6h12.9v15.1h-12.9zM611.11 774.6h4.91v15.1h-4.91zM620.35 774.6h12.9v15.1h-12.9zM637.59 774.6h4.91v15.1h-4.91zM646.84 774.6h12.9v15.1h-12.9zM664.08 774.6h4.91v15.1h-4.91zM673.33 774.6h12.9v15.1h-12.9zM690.56 774.6h4.91v15.1h-4.91zM699.81 774.6h12.9v15.1h-12.9zM717.05 774.6h4.91v15.1h-4.91zM726.3 774.6h12.9v15.1h-12.9zM743.54 774.6h4.91v15.1h-4.91zM752.78 774.6h12.9v15.1h-12.9zM770.02 774.6h4.91v15.1h-4.91zM779.27 774.6h12.9v15.1h-12.9zM796.51 774.6h4.91v15.1h-4.91zM805.76 774.6h12.9v15.1h-12.9zM822.99 774.6h4.91v15.1h-4.91zM832.24 774.6h12.9v15.1h-12.9zM849.48 774.6h4.91v15.1h-4.91zM858.73 774.6h12.9v15.1h-12.9zM875.97 774.6h4.91v15.1h-4.91zM885.22 774.6h12.9v15.1h-12.9zM902.45 774.6h4.91v15.1h-4.91zM911.7 774.6h12.9v15.1h-12.9zM928.94 774.6h4.91v15.1h-4.91zM938.19 774.6h12.9v15.1h-12.9zM955.43 774.6h4.91v15.1h-4.91zM964.67 774.6h12.9v15.1h-12.9zM981.91 774.6h4.91v15.1h-4.91zM991.16 774.6h12.9v15.1h-12.9zM1008.4 774.6h4.91v15.1h-4.91zM1017.65 774.6h12.9v15.1h-12.9zM1034.88 774.6h4.91v15.1h-4.91zM1044.13 774.6h12.9v15.1h-12.9zM1061.37 774.6h4.91v15.1h-4.91zM1070.62 774.6h12.9v15.1h-12.9zM1087.86 774.6h4.91v15.1h-4.91zM1097.11 774.6h12.9v15.1h-12.9zM1114.34 774.6h4.91v15.1h-4.91zM1123.59 774.6h12.9v15.1h-12.9zM1140.83 774.6h4.91v15.1h-4.91zM1150.08 774.6h12.9v15.1h-12.9zM1167.32 774.6h4.91v15.1h-4.91zM1176.56 774.6h12.9v15.1h-12.9zM1193.8 774.6h4.91v15.1h-4.91zM1203.05 774.6h12.9v15.1h-12.9zM1220.29 774.6h4.91v15.1h-4.91zM1229.54 774.6h12.9v15.1h-12.9zM1246.77 774.6h4.91v15.1h-4.91zM1256.02 774.6h12.9v15.1h-12.9zM1273.26 774.6h4.91v15.1h-4.91zM1282.51 774.6h12.9v15.1h-12.9zM1299.75 774.6h4.91v15.1h-4.91zM1308.99 774.6h12.9v15.1h-12.9zM1326.23 774.6h4.91v15.1h-4.91zM1335.48 774.6h12.9v15.1h-12.9zM1352.72 774.6h4.91v15.1h-4.91zM1361.97 774.6h12.9v15.1h-12.9zM1379.2 774.6h4.91v15.1h-4.91zM1388.45 774.6h12.9v15.1h-12.9zM1405.69 774.6h4.91v15.1h-4.91zM1414.94 774.6h12.9v15.1h-12.9zM1432.18 774.6h4.91v15.1h-4.91zM1441.43 774.6h12.9v15.1h-12.9zM1458.66 774.6h4.91v15.1h-4.91zM1467.91 774.6h12.9v15.1h-12.9zM1485.15 774.6h4.91v15.1h-4.91zM1494.4 774.6h12.9v15.1h-12.9zM1511.64 774.6h4.91v15.1h-4.91zM1520.88 774.6h12.9v15.1h-12.9zM1538.12 774.6h4.91v15.1h-4.91zM1547.37 774.6h12.9v15.1h-12.9zM1564.61 774.6h4.91v15.1h-4.91zM1573.86 774.6h12.9v15.1h-12.9zM1591.09 774.6h4.91v15.1h-4.91zM1600.34 774.6h12.9v15.1h-12.9zM1617.58 774.6h4.91v15.1h-4.91zM1626.83 774.6h12.9v15.1h-12.9zM1644.07 774.6h4.91v15.1h-4.91zM1653.32 774.6h12.9v15.1h-12.9zM1670.55 774.6h4.91v15.1h-4.91zM1679.8 774.6h12.9v15.1h-12.9zM1697.04 774.6h4.91v15.1h-4.91zM1706.29 774.6h12.9v15.1h-12.9zM1723.53 774.6h4.91v15.1h-4.91zM1732.77 774.6h12.9v15.1h-12.9zM1750.01 774.6h4.91v15.1h-4.91zM1759.26 774.6h12.9v15.1h-12.9zM1776.5 774.6h4.91v15.1h-4.91zM1785.75 774.6h12.9v15.1h-12.9zM1802.98 774.6h4.91v15.1h-4.91zM1812.23 774.6h12.9v15.1h-12.9zM1829.47 774.6h4.91v15.1h-4.91zM1838.72 774.6h12.9v15.1h-12.9zM1855.96 774.6h4.91v15.1h-4.91zM1865.2 774.6h12.9v15.1h-12.9zM1882.44 774.6h4.91v15.1h-4.91zM1891.69 774.6h12.9v15.1h-12.9zM1908.93 774.6h4.91v15.1h-4.91zM1918.18 774.6h12.9v15.1h-12.9zM1935.42 774.6h4.91v15.1h-4.91zM1944.66 774.6h12.9v15.1h-12.9zM1961.9 774.6h4.91v15.1h-4.91zM1971.15 774.6h12.9v15.1h-12.9zM1988.39 774.6h4.91v15.1h-4.91zM1997.64 774.6h12.9v15.1h-12.9zM2014.87 774.6h4.91v15.1h-4.91zM2024.12 774.6h12.9v15.1h-12.9zM2041.36 774.6h4.91v15.1h-4.91zM2050.61 774.6h12.9v15.1h-12.9zM2067.85 774.6h4.91v15.1h-4.91zM2077.09 774.6h12.9v15.1h-12.9zM2094.33 774.6h4.91v15.1h-4.91zM2103.58 774.6h12.9v15.1h-12.9zM2120.82 774.6h4.91v15.1h-4.91zM2130.07 774.6h12.9v15.1h-12.9zM2147.3 774.6h4.91v15.1h-4.91zM2156.55 774.6h12.9v15.1h-12.9zM2173.79 774.6h4.91v15.1h-4.91zM2183.04 774.6h12.9v15.1h-12.9zM2200.28 774.6h4.91v15.1h-4.91zM2209.53 774.6h12.9v15.1h-12.9zM2226.76 774.6h4.91v15.1h-4.91zM2236.01 774.6h12.9v15.1h-12.9zM2253.25 774.6h4.91v15.1h-4.91zM2262.5 774.6h12.9v15.1h-12.9zM2279.74 774.6h4.91v15.1h-4.91zM2288.98 774.6h12.9v15.1h-12.9zM2306.22 774.6h4.91v15.1h-4.91zM2315.47 774.6h12.9v15.1h-12.9zM2332.71 774.6h4.91v15.1h-4.91zM2341.96 774.6h12.9v15.1h-12.9zM2359.19 774.6h4.91v15.1h-4.91zM2368.44 774.6h12.9v15.1h-12.9zM2385.68 774.6h4.91v15.1h-4.91zM2394.93 774.6h12.9v15.1h-12.9zM2412.17 774.6h4.99v15.1h-4.99z" fill="#666"/>
<path d="M368.39 774.6h4.34v15.1h-4.34zM377.64 774.6h4.34v15.1h-4.34zM394.87 774.6h4.34v15.1h-4.34zM404.12 774.6h4.34v15.1h-4.34zM421.36 774.6h4.34v15.1h-4.34zM430.61 774.6h4.34v15.1h-4.34zM447.85 774.6h4.34v15.1h-4.34zM457.09 774.6h4.34v15.1h-4.34zM474.33 774.6h4.34v15.1h-4.34zM483.58 774.6h4.34v15.1h-4.34zM500.82 774.6h4.34v15.1h-4.34zM510.07 774.6h4.34v15.1h-4.34zM527.3 774.6h4.34v15.1h-4.34zM536.55 774.6h4.34v15.1h-4.34zM553.79 774.6h4.34v15.1h-4.34zM563.04 774.6h4.34v15.1h-4.34zM580.28 774.6h4.34v15.1h-4.34zM589.53 774.6h4.34v15.1h-4.34zM606.76 774.6h4.34v15.1h-4.34zM616.01 774.6h4.34v15.1h-4.34zM633.25 774.6h4.34v15.1h-4.34zM642.5 774.6h4.34v15.1h-4.34zM659.74 774.6h4.34v15.1h-4.34zM668.98 774.6h4.34v15.1h-4.34zM686.22 774.6h4.34v15.1h-4.34zM695.47 774.6h4.34v15.1h-4.34zM712.71 774.6h4.34v15.1h-4.34zM721.96 774.6h4.34v15.1h-4.34zM739.19 774.6h4.34v15.1h-4.34zM748.44 774.6h4.34v15.1h-4.34zM765.68 774.6h4.34v15.1h-4.34zM774.93 774.6h4.34v15.1h-4.34zM792.17 774.6h4.34v15.1h-4.34zM801.41 774.6h4.34v15.1h-4.34zM818.65 774.6h4.34v15.1h-4.34zM827.9 774.6h4.34v15.1h-4.34zM845.14 774.6h4.34v15.1h-4.34zM854.39 774.6h4.34v15.1h-4.34zM871.63 774.6h4.34v15.1h-4.34zM880.87 774.6h4.34v15.1h-4.34zM898.11 774.6h4.34v15.1h-4.34zM907.36 774.6h4.34v15.1h-4.34zM924.6 774.6h4.34v15.1h-4.34zM933.85 774.6h4.34v15.1h-4.34zM951.08 774.6h4.34v15.1h-4.34zM960.33 774.6h4.34v15.1h-4.34zM977.57 774.6h4.34v15.1h-4.34zM986.82 774.6h4.34v15.1h-4.34zM1004.06 774.6h4.34v15.1h-4.34zM1013.3 774.6h4.34v15.1h-4.34zM1030.54 774.6h4.34v15.1h-4.34zM1039.79 774.6h4.34v15.1h-4.34zM1057.03 774.6h4.34v15.1h-4.34zM1066.28 774.6h4.34v15.1h-4.34zM1083.51 774.6h4.34v15.1h-4.34zM1092.76 774.6h4.34v15.1h-4.34zM1110 774.6h4.34v15.1h-4.34zM1119.25 774.6h4.34v15.1h-4.34zM1136.49 774.6h4.34v15.1h-4.34zM1145.74 774.6h4.34v15.1h-4.34zM1162.97 774.6h4.34v15.1h-4.34zM1172.22 774.6h4.34v15.1h-4.34zM1189.46 774.6h4.34v15.1h-4.34zM1198.71 774.6h4.34v15.1h-4.34zM1215.95 774.6h4.34v15.1h-4.34zM1225.19 774.6h4.34v15.1h-4.34zM1242.43 774.6h4.34v15.1h-4.34zM1251.68 774.6h4.34v15.1h-4.34zM1268.92 774.6h4.34v15.1h-4.34zM1278.17 774.6h4.34v15.1h-4.34zM1295.4 774.6h4.34v15.1h-4.34zM1304.65 774.6h4.34v15.1h-4.34zM1321.89 774.6h4.34v15.1h-4.34zM1331.14 774.6h4.34v15.1h-4.34zM1348.38 774.6h4.34v15.1h-4.34zM1357.63 774.6h4.34v15.1h-4.34zM1374.86 774.6h4.34v15.1h-4.34zM1384.11 774.6h4.34v15.1h-4.34zM1401.35 774.6h4.34v15.1h-4.34zM1410.6 774.6h4.34v15.1h-4.34zM1427.84 774.6h4.34v15.1h-4.34zM1437.08 774.6h4.34v15.1h-4.34zM1454.32 774.6h4.34v15.1h-4.34zM1463.57 774.6h4.34v15.1h-4.34zM1480.81 774.6h4.34v15.1h-4.34zM1490.06 774.6h4.34v15.1h-4.34zM1507.29 774.6h4.34v15.1h-4.34zM1516.54 774.6h4.34v15.1h-4.34zM1533.78 774.6h4.34v15.1h-4.34zM1543.03 774.6h4.34v15.1h-4.34zM1560.27 774.6h4.34v15.1h-4.34zM1569.51 774.6h4.34v15.1h-4.34zM1586.75 774.6h4.34v15.1h-4.34zM1596 774.6h4.34v15.1h-4.34zM1613.24 774.6h4.34v15.1h-4.34zM1622.49 774.6h4.34v15.1h-4.34zM1639.72 774.6h4.34v15.1h-4.34zM1648.97 774.6h4.34v15.1h-4.34zM1666.21 774.6h4.34v15.1h-4.34zM1675.46 774.6h4.34v15.1h-4.34zM1692.7 774.6h4.34v15.1h-4.34zM1701.95 774.6h4.34v15.1h-4.34zM1719.18 774.6h4.34v15.1h-4.34zM1728.43 774.6h4.34v15.1h-4.34zM1745.67 774.6h4.34v15.1h-4.34zM1754.92 774.6h4.34v15.1h-4.34zM1772.16 774.6h4.34v15.1h-4.34zM1781.4 774.6h4.34v15.1h-4.34zM1798.64 774.6h4.34v15.1h-4.34zM1807.89 774.6h4.34v15.1h-4.34zM1825.13 774.6h4.34v15.1h-4.34zM1834.38 774.6h4.34v15.1h-4.34zM1851.61 774.6h4.34v15.1h-4.34zM1860.86 774.6h4.34v15.1h-4.34zM1878.1 774.6h4.34v15.1h-4.34zM1887.35 774.6h4.34v15.1h-4.34zM1904.59 774.6h4.34v15.1h-4.34zM1913.84 774.6h4.34v15.1h-4.34zM1931.07 774.6h4.34v15.1h-4.34zM1940.32 774.6h4.34v15.1h-4.34zM1957.56 774.6h4.34v15.1h-4.34zM1966.81 774.6h4.34v15.1h-4.34zM1984.05 774.6h4.34v15.1h-4.34zM1993.29 774.6h4.34v15.1h-4.34zM2010.53 774.6h4.34v15.1h-4.34zM2019.78 774.6h4.34v15.1h-4.34zM2037.02 774.6h4.34v15.1h-4.34zM2046.27 774.6h4.34v15.1h-4.34zM2063.5 774.6h4.34v15.1h-4.34zM2072.75 774.6h4.34v15.1h-4.34zM2089.99 774.6h4.34v15.1h-4.34zM2099.24 774.6h4.34v15.1h-4.34zM2116.48 774.6h4.34v15.1h-4.34zM2125.72 774.6h4.34v15.1h-4.34zM2142.96 774.6h4.34v15.1h-4.34zM2152.21 774.6h4.34v15.1h-4.34zM2169.45 774.6h4.34v15.1h-4.34zM2178.7 774.6h4.34v15.1h-4.34zM2195.94 774.6h4.34v15.1h-4.34zM2205.18 774.6h4.34v15.1h-4.34zM2222.42 774.6h4.34v15.1h-4.34zM2231.67 774.6h4.34v15.1h-4.34zM2248.91 774.6h4.34v15.1h-4.34zM2258.16 774.6h4.34v15.1h-4.34zM2275.39 774.6h4.34v15.1h-4.34zM2284.64 774.6h4.34v15.1h-4.34zM2301.88 774.6h4.34v15.1h-4.34zM2311.13 774.6h4.34v15.1h-4.34zM2328.37 774.6h4.34v15.1h-4.34zM2337.61 774.6h4.34v15.1h-4.34zM2354.85 774.6h4.34v15.1h-4.34zM2364.1 774.6h4.34v15.1h-4.34zM2381.34 774.6h4.34v15.1h-4.34zM2390.59 774.6h4.34v15.1h-4.34zM2407.82 774.6h4.34v15.1h-4.34z" fill="#29f57e"/>
<rect x="333" y="799.9" width="2084.16" height="15.1" fill="#666"/>
<rect x="333" y="825.2" width="2084.16" height="15.1" fill="#666"/>
<path d="M333 850.5h39.73v15.1h-39.73zM377.07 850.5h4.91v15.1h-4.91zM386.32 850.5h12.9v15.1h-12.9zM403.56 850.5h4.91v15.1h-4.91zM412.81 850.5h12.9v15.1h-12.9zM430.04 850.5h4.91v15.1h-4.91zM439.29 850.5h12.9v15.1h-12.9zM456.53 850.5h4.91v15.1h-4.91zM465.78 850.5h12.9v15.1h-12.9zM483.02 850.5h4.91v15.1h-4.91zM492.26 850.5h12.9v15.1h-12.9zM509.5 850.5h4.91v15.1h-4.91zM518.75 850.5h12.9v15.1h-12.9zM535.99 850.5h4.91v15.1h-4.91zM545.24 850.5h12.9v15.1h-12.9zM562.47 850.5h4.91v15.1h-4.91zM571.72 850.5h12.9v15.1h-12.9zM588.96 850.5h4.91v15.1h-4.91zM598.21 850.5h12.9v15.1h-12.9zM615.45 850.5h4.91v15.1h-4.91zM624.7 850.5h12.9v15.1h-12.9zM641.93 850.5h4.91v15.1h-4.91zM651.18 850.5h12.9v15.1h-12.9zM668.42 850.5h4.91v15.1h-4.91zM677.67 850.5h12.9v15.1h-12.9zM694.91 850.5h4.91v15.1h-4.91zM704.15 850.5h12.9v15.1h-12.9zM721.39 850.5h4.91v15.1h-4.91zM730.64 850.5h12.9v15.1h-12.9zM747.88 850.5h4.91v15.1h-4.91zM757.13 850.5h12.9v15.1h-12.9zM774.36 850.5h4.91v15.1h-4.91zM783.61 850.5h12.9v15.1h-12.9zM800.85 850.5h4.91v15.1h-4.91zM810.1 850.5h12.9v15.1h-12.9zM827.34 850.5h4.91v15.1h-4.91zM836.59 850.5h12.9v15.1h-12.9zM853.82 850.5h4.91v15.1h-4.91zM863.07 850.5h12.9v15.1h-12.9zM880.31 850.5h4.91v15.1h-4.91zM889.56 850.5h12.9v15.1h-12.9zM906.8 850.5h4.91v15.1h-4.91zM916.04 850.5h12.9v15.1h-12.9zM933.28 850.5h4.91v15.1h-4.91zM942.53 850.5h12.9v15.1h-12.9zM959.77 850.5h4.91v15.1h-4.91zM969.02 850.5h12.9v15.1h-12.9zM986.25 850.5h4.91v15.1h-4.91zM995.5 850.5h12.9v15.1h-12.9zM1012.74 850.5h4.91v15.1h-4.91zM1021.99 850.5h12.9v15.1h-12.9zM1039.23 850.5h4.91v15.1h-4.91zM1048.47 850.5h12.9v15.1h-12.9zM1065.71 850.5h4.91v15.1h-4.91zM1074.96 850.5h12.9v15.1h-12.9zM1092.2 850.5h4.91v15.1h-4.91zM1101.45 850.5h12.9v15.1h-12.9zM1118.68 850.5h4.91v15.1h-4.91zM1127.93 850.5h12.9v15.1h-12.9zM1145.17 850.5h4.91v15.1h-4.91zM1154.42 850.5h12.9v15.1h-12.9zM1171.66 850.5h4.91v15.1h-4.91zM1180.91 850.5h12.9v15.1h-12.9zM1198.14 850.5h4.91v15.1h-4.91zM1207.39 850.5h12.9v15.1h-12.9zM1224.63 850.5h4.91v15.1h-4.91zM1233.88 850.5h12.9v15.1h-12.9zM1251.12 850.5h4.91v15.1h-4.91zM1260.36 850.5h12.9v15.1h-12.9zM1277.6 850.5h4.91v15.1h-4.91zM1286.85 850.5h12.9v15.1h-12.9zM1304.09 850.5h4.91v15.1h-4.91zM1313.34 850.5h12.9v15.1h-12.9zM1330.57 850.5h4.91v15.1h-4.91zM1339.82 850.5h12.9v15.1h-12.9zM1357.06 850.5h4.91v15.1h-4.91zM1366.31 850.5h12.9v15.1h-12.9zM1383.55 850.5h4.91v15.1h-4.91zM1392.8 850.5h12.9v15.1h-12.9zM1410.03 850.5h4.91v15.1h-4.91zM1419.28 850.5h12.9v15.1h-12.9zM1436.52 850.5h4.91v15.1h-4.91zM1445.77 850.5h12.9v15.1h-12.9zM1463.01 850.5h4.91v15.1h-4.91zM1472.25 850.5h12.9v15.1h-12.9zM1489.49 850.5h4.91v15.1h-4.91zM1498.74 850.5h12.9v15.1h-12.9zM1515.98 850.5h4.91v15.1h-4.91zM1525.23 850.5h12.9v15.1h-12.9zM1542.46 850.5h4.91v15.1h-4.91zM1551.71 850.5h12.9v15.1h-12.9zM1568.95 850.5h4.91v15.1h-4.91zM1578.2 850.5h12.9v15.1h-12.9zM1595.44 850.5h4.91v15.1h-4.91zM1604.68 850.5h12.9v15.1h-12.9zM1621.92 850.5h4.91v15.1h-4.91zM1631.17 850.5h12.9v15.1h-12.9zM1648.41 850.5h4.91v15.1h-4.91zM1657.66 850.5h12.9v15.1h-12.9zM1674.9 850.5h4.91v15.1h-4.91zM1684.14 850.5h12.9v15.1h-12.9zM1701.38 850.5h4.91v15.1h-4.91zM1710.63 850.5h12.9v15.1h-12.9zM1727.87 850.5h4.91v15.1h-4.91zM1737.12 850.5h12.9v15.1h-12.9zM1754.35 850.5h4.91v15.1h-4.91zM1763.6 850.5h12.9v15.1h-12.9zM1780.84 850.5h4.91v15.1h-4.91zM1790.09 850.5h12.9v15.1h-12.9zM1807.33 850.5h4.91v15.1h-4.91zM1816.57 850.5h12.9v15.1h-12.9zM1833.81 850.5h4.91v15.1h-4.91zM1843.06 850.5h12.9v15.1h-12.9zM1860.3 850.5h4.91v15.1h-4.91zM1869.55 850.5h12.9v15.1h-12.9zM1886.78 850.5h4.91v15.1h-4.91zM1896.03 850.5h12.9v15.1h-12.9zM1913.27 850.5h4.91v15.1h-4.91zM1922.52 850.5h12.9v15.1h-12.9zM1939.76 850.5h4.91v15.1h-4.91zM1949.01 850.5h12.9v15.1h-12.9zM1966.24 850.5h4.91v15.1h-4.91zM1975.49 850.5h12.9v15.1h-12.9zM1992.73 850.5h4.91v15.1h-4.91zM2001.98 850.5h12.9v15.1h-12.9zM2019.22 850.5h4.91v15.1h-4.91zM2028.46 850.5h12.9v15.1h-12.9zM2045.7 850.5h4.91v15.1h-4.91zM2054.95 850.5h12.9v15.1h-12.9zM2072.19 850.5h4.91v15.1h-4.91zM2081.44 850.5h12.9v15.1h-12.9zM2098.67 850.5h4.91v15.1h-4.91zM2107.92 850.5h12.9v15.1h-12.9zM2125.16 850.5h4.91v15.1h-4.91zM2134.41 850.5h12.9v15.1h-12.9zM2151.65 850.5h4.91v15.1h-4.91zM2160.9 850.5h12.9v15.1h-12.9zM2178.13 850.5h4.91v15.1h-4.91zM2187.38 850.5h12.9v15.1h-12.9zM2204.62 850.5h4.91v15.1h-4.91zM2213.87 850.5h12.9v15.1h-12.9zM2231.11 850.5h4.91v15.1h-4.91zM2240.35 850.5h12.9v15.1h-12.9zM2257.59 850.5h4.91v15.1h-4.91zM2266.84 850.5h12.9v15.1h-12.9zM2284.08 850.5h4.91v15.1h-4.91zM2293.33 850.5h12.9v15.1h-12.9zM2310.56 850.5h4.91v15.1h-4.91zM2319.81 850.5h12.9v15.1h-12.9zM2337.05 850.5h4.91v15.1h-4.91zM2346.3 850.5h12.9v15.1h-12.9zM2363.54 850.5h4.91v15.1h-4.91zM2372.78 850.5h12.9v15.1h-12.9zM2390.02 850.5h4.91v15.1h-4.91zM2399.27 850.5h12.9v15.1h-12.9zM2416.51 850.5h0.65v15.1h-0.65z" fill="#666"/>
<path d="M372.73 850.5h4.34v15.1h-4.34zM381.98 850.5h4.34v15.1h-4.34zM399.22 850.5h4.34v15.1h-4.34zM408.46 850.5h4.34v15.1h-4.34zM425.7 850.5h4.34v15.1h-4.34zM434.95 850.5h4.34v15.1h-4.34zM452.19 850.5h4.34v15.1h-4.34zM461.44 850.5h4.34v15.1h-4.34zM478.67 850.5h4.34v15.1h-4.34zM487.92 850.5h4.34v15.1h-4.34zM505.16 850.5h4.34v15.1h-4.34zM514.41 850.5h4.34v15.1h-4.34zM531.65 850.5h4.34v15.1h-4.34zM540.89 850.5h4.34v15.1h-4.34zM558.13 850.5h4.34v15.1h-4.34zM567.38 850.5h4.34v15.1h-4.34zM584.62 850.5h4.34v15.1h-4.34zM593.87 850.5h4.34v15.1h-4.34zM611.11 850.5h4.34v15.1h-4.34zM620.35 850.5h4.34v15.1h-4.34zM637.59 850.5h4.34v15.1h-4.34zM646.84 850.5h4.34v15.1h-4.34zM664.08 850.5h4.34v15.1h-4.34zM673.33 850.5h4.34v15.1h-4.34zM690.56 850.5h4.34v15.1h-4.34zM699.81 850.5h4.34v15.1h-4.34zM717.05 850.5h4.34v15.1h-4.34zM726.3 850.5h4.34v15.1h-4.34zM743.54 850.5h4.34v15.1h-4.34zM752.78 850.5h4.34v15.1h-4.34zM770.02 850.5h4.34v15.1h-4.34zM779.27 850.5h4.34v15.1h-4.34zM796.51 850.5h4.34v15.1h-4.34zM805.76 850.5h4.34v15.1h-4.34zM822.99 850.5h4.34v15.1h-4.34zM832.24 850.5h4.34v15.1h-4.34zM849.48 850.5h4.34v15.1h-4.34zM858.73 850.5h4.34v15.1h-4.34zM875.97 850.5h4.34v15.1h-4.34zM885.22 850.5h4.34v15.1h-4.34zM902.45 850.5h4.34v15.1h-4.34zM911.7 850.5h4.34v15.1h-4.34zM928.94 850.5h4.34v15.1h-4.34zM938.19 850.5h4.34v15.1h-4.34zM955.43 850.5h4.34v15.1h-4.34zM964.67 850.5h4.34v15.1h-4.34zM981.91 850.5h4.34v15.1h-4.34zM991.16 850.5h4.34v15.1h-4.34zM1008.4 850.5h4.34v15.1h-4.34zM1017.65 850.5h4.34v15.1h-4.34zM1034.88 850.5h4.34v15.1h-4.34zM1044.13 850.5h4.34v15.1h-4.34zM1061.37 850.5h4.34v15.1h-4.34zM1070.62 850.5h4.34v15.1h-4.34zM1087.86 850.5h4.34v15.1h-4.34zM1097.11 850.5h4.34v15.1h-4.34zM1114.34 850.5h4.34v15.1h-4.34zM1123.59 850.5h4.34v15.1h-4.34zM1140.83 850.5h4.34v15.1h-4.34zM1150.08 850.5h4.34v15.1h-4.34zM1167.32 850.5h4.34v15.1h-4.34zM1176.56 850.5h4.34v15.1h-4.34zM1193.8 850.5h4.34v15.1h-4.34zM1203.05 850.5h4.34v15.1h-4.34zM1220.29 850.5h4.34v15.1h-4.34zM1229.54 850.5h4.34v15.1h-4.34zM1246.77 850.5h4.34v15.1h-4.34zM1256.02 850.5h4.34v15.1h-4.34zM1273.26 850.5h4.34v15.1h-4.34zM1282.51 850.5h4.34v15.1h-4.34zM1299.75 850.5h4.34v15.1h-4.34zM1308.99 850.5h4.34v15.1h-4.34zM1326.23 850.5h4.34v15.1h-4.34zM1335.48 850.5h4.34v15.1h-4.34zM1352.72 850.5h4.34v15.1h-4.34zM1361.97 850.5h4.34v15.1h-4.34zM1379.2 850.5h4.34v15.1h-4.34zM1388.45 850.5h4.34v15.1h-4.34zM1405.69 850.5h4.34v15.1h-4.34zM1414.94 850.5h4.34v15.1h-4.34zM1432.18 850.5h4.34v15.1h-4.34zM1441.43 850.5h4.34v15.1h-4.34zM1458.66 850.5h4.34v15.1h-4.34zM1467.91 850.5h4.34v15.1h-4.34zM1485.15 850.5h4.34v15.1h-4.34zM1494.4 850.5h4.34v15.1h-4.34zM1511.64 850.5h4.34v15.1h-4.34zM1520.88 850.5h4.34v15.1h-4.34zM1538.12 850.5h4.34v15.1h-4.34zM1547.37 850.5h4.34v15.1h-4.34zM1564.61 850.5h4.34v15.1h-4.34zM1573.86 850.5h4.34v15.1h-4.34zM1591.09 850.5h4.34v15.1h-4.34zM1600.34 850.5h4.34v15.1h-4.34zM1617.58 850.5h4.34v15.1h-4.34zM1626.83 850.5h4.34v15.1h-4.34zM1644.07 850.5h4.34v15.1h-4.34zM1653.32 850.5h4.34v15.1h-4.34zM1670.55 850.5h4.34v15.1h-4.34zM1679.8 850.5h4.34v15.1h-4.34zM1697.04 850.5h4.34v15.1h-4.34zM1706.29 850.5h4.34v15.1h-4.34zM1723.53 850.5h4.34v15.1h-4.34zM1732.77 850.5h4.34v15.1h-4.34zM1750.01 850.5h4.34v15.1h-4.34zM1759.26 850.5h4.34v15.1h-4.34zM1776.5 850.5h4.34v15.1h-4.34zM1785.75 850.5h4.34v15.1h-4.34zM1802.98 850.5h4.34v15.1h-4.34zM1812.23 850.5h4.34v15.1h-4.34zM1829.47 850.5h4.34v15.1h-4.34zM1838.72 850.5h4.34v15.1h-4.34zM1855.96 850.5h4.34v15.1h-4.34zM1865.2 850.5h4.34v15.1h-4.34zM1882.44 850.5h4.34v15.1h-4.34zM1891.69 850.5h4.34v15.1h-4.34zM1908.93 850.5h4.34v15.1h-4.34zM1918.18 850.5h4.34v15.1h-4.34zM1935.42 850.5h4.34v15.1h-4.34zM1944.66 850.5h4.34v15.1h-4.34zM1961.9 850.5h4.34v15.1h-4.34zM1971.15 850.5h4.34v15.1h-4.34zM1988.39 850.5h4.34v15.1h-4.34zM1997.64 850.5h4.34v15.1h-4.34zM2014.87 850.5h4.34v15.1h-4.34zM2024.12 850.5h4.34v15.1h-4.34zM2041.36 850.5h4.34v15.1h-4.34zM2050.61 850.5h4.34v15.1h-4.34zM2067.85 850.5h4.34v15.1h-4.34zM2077.09 850.5h4.34v15.1h-4.34zM2094.33 850.5h4.34v15.1h-4.34zM2103.58 850.5h4.34v15.1h-4.34zM2120.82 850.5h4.34v15.1h-4.34zM2130.07 850.5h4.34v15.1h-4.34zM2147.3 850.5h4.34v15.1h-4.34zM2156.55 850.5h4.34v15.1h-4.34zM2173.79 850.5h4.34v15.1h-4.34zM2183.04 850.5h4.34v15.1h-4.34zM2200.28 850.5h4.34v15.1h-4.34zM2209.53 850.5h4.34v15.1h-4.34zM2226.76 850.5h4.34v15.1h-4.34zM2236.01 850.5h4.34v15.1h-4.34zM2253.25 850.5h4.34v15.1h-4.34zM2262.5 850.5h4.34v15.1h-4.34zM2279.74 850.5h4.34v15.1h-4.34zM2288.98 850.5h4.34v15.1h-4.34zM2306.22 850.5h4.34v15.1h-4.34zM2315.47 850.5h4.34v15.1h-4.34zM2332.71 850.5h4.34v15.1h-4.34zM2341.96 850.5h4.34v15.1h-4.34zM2359.19 850.5h4.34v15.1h-4.34zM2368.44 850.5h4.34v15.1h-4.34zM2385.68 850.5h4.34v15.1h-4.34zM2394.93 850.5h4.34v15.1h-4.34zM2412.17 850.5h4.34v15.1h-4.34z" fill="#29f57e"/>
<rect x="333" y="875.8" width="2084.16" height="15.1" fill="#666"/>
<rect x="333" y="901.1" width="2084.16" height="15.1" fill="#666"/>
<path d="M333 926.4h44.03v15.1h-44.03zM381.37 926.4h4.91v15.1h-4.91zM390.62 926.4h12.9v15.1h-12.9zM407.86 926.4h4.91v15.1h-4.91zM417.1 926.4h12.9v15.1h-12.9zM434.34 926.4h4.91v15.1h-4.91zM443.59 926.4h12.9v15.1h-12.9zM460.83 926.4h4.91v15.1h-4.91zM470.08 926.4h12.9v15.1h-12.9zM487.31 926.4h4.91v15.1h-4.91zM496.56 926.4h12.9v15.1h-12.9zM513.8 926.4h4.91v15.1h-4.91zM523.05 926.4h12.9v15.1h-12.9zM540.29 926.4h4.91v15.1h-4.91zM549.54 926.4h12.9v15.1h-12.9zM566.77 926.4h4.91v15.1h-4.91zM576.02 926.4h12.9v15.1h-12.9zM593.26 926.4h4.91v15.1h-4.91zM602.51 926.4h12.9v15.1h-12.9zM619.75 926.4h4.91v15.1h-4.91zM628.99 926.4h12.9v15.1h-12.9zM646.23 926.4h4.91v15.1h-4.91zM655.48 926.4h12.9v15.1h-12.9zM672.72 926.4h4.91v15.1h-4.91zM681.97 926.4h12.9v15.1h-12.9zM699.2 926.4h4.91v15.1h-4.91zM708.45 926.4h12.9v15.1h-12.9zM725.69 926.4h4.91v15.1h-4.91zM734.94 926.4h12.9v15.1h-12.9zM752.18 926.4h4.91v15.1h-4.91zM761.43 926.4h12.9v15.1h-12.9zM778.66 926.4h4.91v15.1h-4.91zM787.91 926.4h12.9v15.1h-12.9zM805.15 926.4h4.91v15.1h-4.91zM814.4 926.4h12.9v15.1h-12.9zM831.64 926.4h4.91v15.1h-4.91zM840.88 926.4h12.9v15.1h-12.9zM858.12 926.4h4.91v15.1h-4.91zM867.37 926.4h12.9v15.1h-12.9zM884.61 926.4h4.91v15.1h-4.91zM893.86 926.4h12.9v15.1h-12.9zM911.09 926.4h4.91v15.1h-4.91zM920.34 926.4h12.9v15.1h-12.9zM937.58 926.4h4.91v15.1h-4.91zM946.83 926.4h12.9v15.1h-12.9zM964.07 926.4h4.91v15.1h-4.91zM973.31 926.4h12.9v15.1h-12.9zM990.55 926.4h4.91v15.1h-4.91zM999.8 926.4h12.9v15.1h-12.9zM1017.04 926.4h4.91v15.1h-4.91zM1026.29 926.4h12.9v15.1h-12.9zM1043.52 926.4h4.91v15.1h-4.91zM1052.77 926.4h12.9v15.1h-12.9zM1070.01 926.4h4.91v15.1h-4.91zM1079.26 926.4h12.9v15.1h-12.9zM1096.5 926.4h4.91v15.1h-4.91zM1105.75 926.4h12.9v15.1h-12.9zM1122.98 926.4h4.91v15.1h-4.91zM1132.23 926.4h12.9v15.1h-12.9zM1149.47 926.4h4.91v15.1h-4.91zM1158.72 926.4h12.9v15.1h-12.9zM1175.96 926.4h4.91v15.1h-4.91zM1185.2 926.4h12.9v15.1h-12.9zM1202.44 926.4h4.91v15.1h-4.91zM1211.69 926.4h12.9v15.1h-12.9zM1228.93 926.4h4.91v15.1h-4.91zM1238.18 926.4h12.9v15.1h-12.9zM1255.41 926.4h4.91v15.1h-4.91zM1264.66 926.4h12.9v15.1h-12.9zM1281.9 926.4h4.91v15.1h-4.91zM1291.15 926.4h12.9v15.1h-12.9zM1308.39 926.4h4.91v15.1h-4.91zM1317.64 926.4h12.9v15.1h-12.9zM1334.87 926.4h4.91v15.1h-4.91zM1344.12 926.4h12.9v15.1h-12.9zM1361.36 926.4h4.91v15.1h-4.91zM1370.61 926.4h12.9v15.1h-12.9zM1387.85 926.4h4.91v15.1h-4.91zM1397.09 926.4h12.9v15.1h-12.9zM1414.33 926.4h4.91v15.1h-4.91zM1423.58 926.4h12.9v15.1h-12.9zM1440.82 926.4h4.91v15.1h-4.91zM1450.07 926.4h12.9v15.1h-12.9zM1467.3 926.4h4.91v15.1h-4.91zM1476.55 926.4h12.9v15.1h-12.9zM1493.79 926.4h4.91v15.1h-4.91zM1503.04 926.4h12.9v15.1h-12.9zM1520.28 926.4h4.91v15.1h-4.91zM1529.52 926.4h12.9v15.1h-12.9zM1546.76 926.4h4.91v15.1h-4.91zM1556.01 926.4h12.9v15.1h-12.9zM1573.25 926.4h4.91v15.1h-4.91zM1582.5 926.4h12.9v15.1h-12.9zM1599.74 926.4h4.91v15.1h-4.91zM1608.98 926.4h12.9v15.1h-12.9zM1626.22 926.4h4.91v15.1h-4.91zM1635.47 926.4h12.9v15.1h-12.9zM1652.71 926.4h4.91v15.1h-4.91zM1661.96 926.4h12.9v15.1h-12.9zM1679.19 926.4h4.91v15.1h-4.91zM1688.44 926.4h12.9v15.1h-12.9zM1705.68 926.4h4.91v15.1h-4.91zM1714.93 926.4h12.9v15.1h-12.9zM1732.17 926.4h4.91v15.1h-4.91zM1741.41 926.4h12.9v15.1h-12.9zM1758.65 926.4h4.91v15.1h-4.91zM1767.9 926.4h12.9v15.1h-12.9zM1785.14 926.4h4.91v15.1h-4.91zM1794.39 926.4h12.9v15.1h-12.9zM1811.62 926.4h4.91v15.1h-4.91zM1820.87 926.4h12.9v15.1h-12.9zM1838.11 926.4h4.91v15.1h-4.91zM1847.36 926.4h12.9v15.1h-12.9zM1864.6 926.4h4.91v15.1h-4.91zM1873.85 926.4h12.9v15.1h-12.9zM1891.08 926.4h4.91v15.1h-4.91zM1900.33 926.4h12.9v15.1h-12.9zM1917.57 926.4h4.91v15.1h-4.91zM1926.82 926.4h12.9v15.1h-12.9zM1944.06 926.4h4.91v15.1h-4.91zM1953.3 926.4h12.9v15.1h-12.9zM1970.54 926.4h4.91v15.1h-4.91zM1979.79 926.4h12.9v15.1h-12.9zM1997.03 926.4h4.91v15.1h-4.91zM2006.28 926.4h12.9v15.1h-12.9zM2023.51 926.4h4.91v15.1h-4.91zM2032.76 926.4h12.9v15.1h-12.9zM2050 926.4h4.91v15.1h-4.91zM2059.25 926.4h12.9v15.1h-12.9zM2076.49 926.4h4.91v15.1h-4.91zM2085.74 926.4h12.9v15.1h-12.9zM2102.97 926.4h4.91v15.1h-4.91zM2112.22 926.4h12.9v15.1h-12.9zM2129.46 926.4h4.91v15.1h-4.91zM2138.71 926.4h12.9v15.1h-12.9zM2155.95 926.4h4.91v15.1h-4.91zM2165.19 926.4h12.9v15.1h-12.9zM2182.43 926.4h4.91v15.1h-4.91zM2191.68 926.4h12.9v15.1h-12.9zM2208.92 926.4h4.91v15.1h-4.91zM2218.17 926.4h12.9v15.1h-12.9zM2235.4 926.4h4.91v15.1h-4.91zM2244.65 926.4h12.9v15.1h-12.9zM2261.89 926.4h4.91v15.1h-4.91zM2271.14 926.4h12.9v15.1h-12.9zM2288.38 926.4h4.91v15.1h-4.91zM2297.62 926.4h12.9v15.1h-12.9zM2314.86 926.4h4.91v15.1h-4.91zM2324.11 926.4h12.9v15.1h-12.9zM2341.35 926.4h4.91v15.1h-4.91zM2350.6 926.4h12.9v15.1h-12.9zM2367.83 926.4h4.91v15.1h-4.91zM2377.08 926.4h12.9v15.1h-12.9zM2394.32 926.4h4.91v15.1h-4.91zM2403.57 926.4h13.59v15.1h-13.59z" fill="#666"/>
<path d="M377.03 926.4h4.34v15.1h-4.34zM386.28 926.4h4.34v15.1h-4.34zM403.51 926.4h4.34v15.1h-4.34zM412.76 926.4h4.34v15.1h-4.34zM430 926.4h4.34v15.1h-4.34zM439.25 926.4h4.34v15.1h-4.34zM456.49 926.4h4.34v15.1h-4.34zM465.73 926.4h4.34v15.1h-4.34zM482.97 926.4h4.34v15.1h-4.34zM492.22 926.4h4.34v15.1h-4.34zM509.46 926.4h4.34v15.1h-4.34zM518.71 926.4h4.34v15.1h-4.34zM535.95 926.4h4.34v15.1h-4.34zM545.19 926.4h4.34v15.1h-4.34zM562.43 926.4h4.34v15.1h-4.34zM571.68 926.4h4.34v15.1h-4.34zM588.92 926.4h4.34v15.1h-4.34zM598.17 926.4h4.34v15.1h-4.34zM615.4 926.4h4.34v15.1h-4.34zM624.65 926.4h4.34v15.1h-4.34zM641.89 926.4h4.34v15.1h-4.34zM651.14 926.4h4.34v15.1h-4.34zM668.38 926.4h4.34v15.1h-4.34zM677.62 926.4h4.34v15.1h-4.34zM694.86 926.4h4.34v15.1h-4.34zM704.11 926.4h4.34v15.1h-4.34zM721.35 926.4h4.34v15.1h-4.34zM730.6 926.4h4.34v15.1h-4.34zM747.83 926.4h4.34v15.1h-4.34zM757.08 926.4h4.34v15.1h-4.34zM774.32 926.4h4.34v15.1h-4.34zM783.57 926.4h4.34v15.1h-4.34zM800.81 926.4h4.34v15.1h-4.34zM810.06 926.4h4.34v15.1h-4.34zM827.29 926.4h4.34v15.1h-4.34zM836.54 926.4h4.34v15.1h-4.34zM853.78 926.4h4.34v15.1h-4.34zM863.03 926.4h4.34v15.1h-4.34zM880.27 926.4h4.34v15.1h-4.34zM889.51 926.4h4.34v15.1h-4.34zM906.75 926.4h4.34v15.1h-4.34zM916 926.4h4.34v15.1h-4.34zM933.24 926.4h4.34v15.1h-4.34zM942.49 926.4h4.34v15.1h-4.34zM959.72 926.4h4.34v15.1h-4.34zM968.97 926.4h4.34v15.1h-4.34zM986.21 926.4h4.34v15.1h-4.34zM995.46 926.4h4.34v15.1h-4.34zM1012.7 926.4h4.34v15.1h-4.34zM1021.95 926.4h4.34v15.1h-4.34zM1039.18 926.4h4.34v15.1h-4.34zM1048.43 926.4h4.34v15.1h-4.34zM1065.67 926.4h4.34v15.1h-4.34zM1074.92 926.4h4.34v15.1h-4.34zM1092.16 926.4h4.34v15.1h-4.34zM1101.4 926.4h4.34v15.1h-4.34zM1118.64 926.4h4.34v15.1h-4.34zM1127.89 926.4h4.34v15.1h-4.34zM1145.13 926.4h4.34v15.1h-4.34zM1154.38 926.4h4.34v15.1h-4.34zM1171.61 926.4h4.34v15.1h-4.34zM1180.86 926.4h4.34v15.1h-4.34zM1198.1 926.4h4.34v15.1h-4.34zM1207.35 926.4h4.34v15.1h-4.34zM1224.59 926.4h4.34v15.1h-4.34zM1233.83 926.4h4.34v15.1h-4.34zM1251.07 926.4h4.34v15.1h-4.34zM1260.32 926.4h4.34v15.1h-4.34zM1277.56 926.4h4.34v15.1h-4.34zM1286.81 926.4h4.34v15.1h-4.34zM1304.04 926.4h4.34v15.1h-4.34zM1313.29 926.4h4.34v15.1h-4.34zM1330.53 926.4h4.34v15.1h-4.34zM1339.78 926.4h4.34v15.1h-4.34zM1357.02 926.4h4.34v15.1h-4.34zM1366.27 926.4h4.34v15.1h-4.34zM1383.5 926.4h4.34v15.1h-4.34zM1392.75 926.4h4.34v15.1h-4.34zM1409.99 926.4h4.34v15.1h-4.34zM1419.24 926.4h4.34v15.1h-4.34zM1436.48 926.4h4.34v15.1h-4.34zM1445.72 926.4h4.34v15.1h-4.34zM1462.96 926.4h4.34v15.1h-4.34zM1472.21 926.4h4.34v15.1h-4.34zM1489.45 926.4h4.34v15.1h-4.34zM1498.7 926.4h4.34v15.1h-4.34zM1515.93 926.4h4.34v15.1h-4.34zM1525.18 926.4h4.34v15.1h-4.34zM1542.42 926.4h4.34v15.1h-4.34zM1551.67 926.4h4.34v15.1h-4.34zM1568.91 926.4h4.34v15.1h-4.34zM1578.16 926.4h4.34v15.1h-4.34zM1595.39 926.4h4.34v15.1h-4.34zM1604.64 926.4h4.34v15.1h-4.34zM1621.88 926.4h4.34v15.1h-4.34zM1631.13 926.4h4.34v15.1h-4.34zM1648.37 926.4h4.34v15.1h-4.34zM1657.61 926.4h4.34v15.1h-4.34zM1674.85 926.4h4.34v15.1h-4.34zM1684.1 926.4h4.34v15.1h-4.34zM1701.34 926.4h4.34v15.1h-4.34zM1710.59 926.4h4.34v15.1h-4.34zM1727.82 926.4h4.34v15.1h-4.34zM1737.07 926.4h4.34v15.1h-4.34zM1754.31 926.4h4.34v15.1h-4.34zM1763.56 926.4h4.34v15.1h-4.34zM1780.8 926.4h4.34v15.1h-4.34zM1790.04 926.4h4.34v15.1h-4.34zM1807.28 926.4h4.34v15.1h-4.34zM1816.53 926.4h4.34v15.1h-4.34zM1833.77 926.4h4.34v15.1h-4.34zM1843.02 926.4h4.34v15.1h-4.34zM1860.26 926.4h4.34v15.1h-4.34zM1869.5 926.4h4.34v15.1h-4.34zM1886.74 926.4h4.34v15.1h-4.34zM1895.99 926.4h4.34v15.1h-4.34zM1913.23 926.4h4.34v15.1h-4.34zM1922.48 926.4h4.34v15.1h-4.34zM1939.71 926.4h4.34v15.1h-4.34zM1948.96 926.4h4.34v15.1h-4.34zM1966.2 926.4h4.34v15.1h-4.34zM1975.45 926.4h4.34v15.1h-4.34zM1992.69 926.4h4.34v15.1h-4.34zM2001.93 926.4h4.34v15.1h-4.34zM2019.17 926.4h4.34v15.1h-4.34zM2028.42 926.4h4.34v15.1h-4.34zM2045.66 926.4h4.34v15.1h-4.34zM2054.91 926.4h4.34v15.1h-4.34zM2072.14 926.4h4.34v15.1h-4.34zM2081.39 926.4h4.34v15.1h-4.34zM2098.63 926.4h4.34v15.1h-4.34zM2107.88 926.4h4.34v15.1h-4.34zM2125.12 926.4h4.34v15.1h-4.34zM2134.37 926.4h4.34v15.1h-4.34zM2151.6 926.4h4.34v15.1h-4.34zM2160.85 926.4h4.34v15.1h-4.34zM2178.09 926.4h4.34v15.1h-4.34zM2187.34 926.4h4.34v15.1h-4.34zM2204.58 926.4h4.34v15.1h-4.34zM2213.82 926.4h4.34v15.1h-4.34zM2231.06 926.4h4.34v15.1h-4.34zM2240.31 926.4h4.34v15.1h-4.34zM2257.55 926.4h4.34v15.1h-4.34zM2266.8 926.4h4.34v15.1h-4.34zM2284.03 926.4h4.34v15.1h-4.34zM2293.28 926.4h4.34v15.1h-4.34zM2310.52 926.4h4.34v15.1h-4.34zM2319.77 926.4h4.34v15.1h-4.34zM2337.01 926.4h4.34v15.1h-4.34zM2346.26 926.4h4.34v15.1h-4.34zM2363.49 926.4h4.34v15.1h-4.34zM2372.74 926.4h4.34v15.1h-4.34zM2389.98 926.4h4.34v15.1h-4.34zM2399.23 926.4h4.34v15.1h-4.34z" fill="#29f57e"/>
<rect x="333" y="951.7" width="2084.16" height="15.1" fill="#666"/>
</g>
<path d="M341.68 395.1v15.1M350.8 395.1v15.1M359.92 395.1v15.1M368.17 395.1v15.1M377.29 395.1v15.1M386.41 395.1v15.1M394.66 395.1v15.1M403.77 395.1v15.1M412.89 395.1v15.1M421.14 395.1v15.1M430.26 395.1v15.1M439.38 395.1v15.1M447.63 395.1v15.1M456.75 395.1v15.1M465.87 395.1v15.1M474.12 395.1v15.1M483.23 395.1v15.1M492.35 395.1v15.1M500.6 395.1v15.1M509.72 395.1v15.1M518.84 395.1v15.1M527.09 395.1v15.1M536.21 395.1v15.1M545.32 395.1v15.1M553.57 395.1v15.1M562.69 395.1v15.1M571.81 395.1v15.1M580.06 395.1v15.1M589.18 395.1v15.1M598.3 395.1v15.1M606.55 395.1v15.1M615.66 395.1v15.1M624.78 395.1v15.1M633.03 395.1v15.1M642.15 395.1v15.1M651.27 395.1v15.1M659.52 395.1v15.1M668.64 395.1v15.1M677.75 395.1v15.1M686 395.1v15.1M695.12 395.1v15.1M704.24 395.1v15.1M712.49 395.1v15.1M721.61 395.1v15.1M730.73 395.1v15.1M738.98 395.1v15.1M748.1 395.1v15.1M757.21 395.1v15.1M765.46 395.1v15.1M774.58 395.1v15.1M783.7 395.1v15.1M791.95 395.1v15.1M801.07 395.1v15.1M810.19 395.1v15.1M818.44 395.1v15.1M827.55 395.1v15.1M836.67 395.1v15.1M844.92 395.1v15.1M854.04 395.1v15.1M863.16 395.1v15.1M871.41 395.1v15.1M880.53 395.1v15.1M889.64 395.1v15.1M897.89 395.1v15.1M907.01 395.1v15.1M916.13 395.1v15.1M924.38 395.1v15.1M933.5 395.1v15.1M942.62 395.1v15.1M950.87 395.1v15.1M959.98 395.1v15.1M969.1 395.1v15.1M977.35 395.1v15.1M986.47 395.1v15.1M995.59 395.1v15.1M1003.84 395.1v15.1M1012.96 395.1v15.1M1022.08 395.1v15.1M1030.33 395.1v15.1M1039.44 395.1v15.1M1048.56 395.1v15.1M1056.81 395.1v15.1M1065.93 395.1v15.1M1075.05 395.1v15.1M1083.3 395.1v15.1M1092.42 395.1v15.1M1101.53 395.1v15.1M1109.78 395.1v15.1M1118.9 395.1v15.1M1128.02 395.1v15.1M1136.27 395.1v15.1M1145.39 395.1v15.1M1154.51 395.1v15.1M1162.76 395.1v15.1M1171.87 395.1v15.1M1180.99 395.1v15.1M1189.24 395.1v15.1M1198.36 395.1v15.1M1207.48 395.1v15.1M1215.73 395.1v15.1M1224.85 395.1v15.1M1233.96 395.1v15.1M1242.21 395.1v15.1M1251.33 395.1v15.1M1260.45 395.1v15.1M1268.7 395.1v15.1M1277.82 395.1v15.1M1286.94 395.1v15.1M1295.19 395.1v15.1M1304.31 395.1v15.1M1313.42 395.1v15.1M1321.67 395.1v15.1M1330.79 395.1v15.1M1339.91 395.1v15.1M1348.16 395.1v15.1M1357.28 395.1v15.1M1366.4 395.1v15.1M1374.65 395.1v15.1M1383.76 395.1v15.1M1392.88 395.1v15.1M1401.13 395.1v15.1M1410.25 395.1v15.1M1419.37 395.1v15.1M1427.62 395.1v15.1M1436.74 395.1v15.1M1445.85 395.1v15.1M1454.1 395.1v15.1M1463.22 395.1v15.1M1472.34 395.1v15.1M1480.59 395.1v15.1M1489.71 395.1v15.1M1498.83 395.1v15.1M1507.08 395.1v15.1M1516.19 395.1v15.1M1525.31 395.1v15.1M1533.56 395.1v15.1M1542.68 395.1v15.1M1551.8 395.1v15.1M1560.05 395.1v15.1M1569.17 395.1v15.1M1578.29 395.1v15.1M1586.54 395.1v15.1M1595.65 395.1v15.1M1604.77 395.1v15.1M1613.02 395.1v15.1M1622.14 395.1v15.1M1631.26 395.1v15.1M1639.51 395.1v15.1M1648.63 395.1v15.1M1657.74 395.1v15.1M1665.99 395.1v15.1M1675.11 395.1v15.1M1684.23 395.1v15.1M1692.48 395.1v15.1M1701.6 395.1v15.1M1710.72 395.1v15.1M1718.97 395.1v15.1M1728.08 395.1v15.1M1737.2 395.1v15.1M1745.45 395.1v15.1M1754.57 395.1v15.1M1763.69 395.1v15.1M1771.94 395.1v15.1M1781.06 395.1v15.1M1790.18 395.1v15.1M1798.42 395.1v15.1M1807.54 395.1v15.1M1816.66 395.1v15.1M1824.91 395.1v15.1M1834.03 395.1v15.1M1843.15 395.1v15.1M1851.4 395.1v15.1M1860.52 395.1v15.1M1869.63 395.1v15.1M1877.88 395.1v15.1M1887 395.1v15.1M1896.12 395.1v15.1M1904.37 395.1v15.1M1913.49 395.1v15.1M1922.61 395.1v15.1M1930.86 395.1v15.1M1939.97 395.1v15.1M1949.09 395.1v15.1M1957.34 395.1v15.1M1966.46 395.1v15.1M1975.58 395.1v15.1M1983.83 395.1v15.1M1992.95 395.1v15.1M2002.06 395.1v15.1M2010.31 395.1v15.1M2019.43 395.1v15.1M2028.55 395.1v15.1M2036.8 395.1v15.1M2045.92 395.1v15.1M2055.04 395.1v15.1M2063.29 395.1v15.1M2072.41 395.1v15.1M2081.52 395.1v15.1M2089.77 395.1v15.1M2098.89 395.1v15.1M2108.01 395.1v15.1M2116.26 395.1v15.1M2125.38 395.1v15.1M2134.5 395.1v15.1M2142.75 395.1v15.1M2151.86 395.1v15.1M2160.98 395.1v15.1M2169.23 395.1v15.1M2178.35 395.1v15.1M2187.47 395.1v15.1M2195.72 395.1v15.1M2204.84 395.1v15.1M2213.95 395.1v15.1M2222.2 395.1v15.1M2231.32 395.1v15.1M2240.44 395.1v15.1M2248.69 395.1v15.1M2257.81 395.1v15.1M2266.93 395.1v15.1M2275.18 395.1v15.1M2284.29 395.1v15.1M2293.41 395.1v15.1M2301.66 395.1v15.1M2310.78 395.1v15.1M2319.9 395.1v15.1M2328.15 395.1v15.1M2337.27 395.1v15.1M2346.39 395.1v15.1M2354.64 395.1v15.1M2363.75 395.1v15.1M2372.87 395.1v15.1M2381.12 395.1v15.1M2390.24 395.1v15.1M2399.36 395.1v15.1M2407.61 395.1v15.1M2416.73 395.1v15.1" stroke="#4e4e4e" stroke-width="0.7" fill="none"/>
<path d="M368.17 724v15.1M377.29 724v15.1M394.66 724v15.1M403.77 724v15.1M421.14 724v15.1M430.26 724v15.1M447.63 724v15.1M456.75 724v15.1M474.12 724v15.1M483.23 724v15.1M500.6 724v15.1M509.72 724v15.1M527.09 724v15.1M536.21 724v15.1M553.57 724v15.1M562.69 724v15.1M580.06 724v15.1M589.18 724v15.1M606.55 724v15.1M615.66 724v15.1M633.03 724v15.1M642.15 724v15.1M659.52 724v15.1M668.64 724v15.1M686 724v15.1M695.12 724v15.1M712.49 724v15.1M721.61 724v15.1M738.98 724v15.1M748.1 724v15.1M765.46 724v15.1M774.58 724v15.1M791.95 724v15.1M801.07 724v15.1M818.44 724v15.1M827.55 724v15.1M844.92 724v15.1M854.04 724v15.1M871.41 724v15.1M880.53 724v15.1M897.89 724v15.1M907.01 724v15.1M924.38 724v15.1M933.5 724v15.1M950.87 724v15.1M959.98 724v15.1M977.35 724v15.1M986.47 724v15.1M1003.84 724v15.1M1012.96 724v15.1M1030.33 724v15.1M1039.44 724v15.1M1056.81 724v15.1M1065.93 724v15.1M1083.3 724v15.1M1092.42 724v15.1M1109.78 724v15.1M1118.9 724v15.1M1136.27 724v15.1M1145.39 724v15.1M1162.76 724v15.1M1171.87 724v15.1M1189.24 724v15.1M1198.36 724v15.1M1215.73 724v15.1M1224.85 724v15.1M1242.21 724v15.1M1251.33 724v15.1M1268.7 724v15.1M1277.82 724v15.1M1295.19 724v15.1M1304.31 724v15.1M1321.67 724v15.1M1330.79 724v15.1M1348.16 724v15.1M1357.28 724v15.1M1374.65 724v15.1M1383.76 724v15.1M1401.13 724v15.1M1410.25 724v15.1M1427.62 724v15.1M1436.74 724v15.1M1454.1 724v15.1M1463.22 724v15.1M1480.59 724v15.1M1489.71 724v15.1M1507.08 724v15.1M1516.19 724v15.1M1533.56 724v15.1M1542.68 724v15.1M1560.05 724v15.1M1569.17 724v15.1M1586.54 724v15.1M1595.65 724v15.1M1613.02 724v15.1M1622.14 724v15.1M1639.51 724v15.1M1648.63 724v15.1M1665.99 724v15.1M1675.11 724v15.1M1692.48 724v15.1M1701.6 724v15.1M1718.97 724v15.1M1728.08 724v15.1M1745.45 724v15.1M1754.57 724v15.1M1771.94 724v15.1M1781.06 724v15.1M1798.42 724v15.1M1807.54 724v15.1M1824.91 724v15.1M1834.03 724v15.1M1851.4 724v15.1M1860.52 724v15.1M1877.88 724v15.1M1887 724v15.1M1904.37 724v15.1M1913.49 724v15.1M1930.86 724v15.1M1939.97 724v15.1M1957.34 724v15.1M1966.46 724v15.1M1983.83 724v15.1M1992.95 724v15.1M2010.31 724v15.1M2019.43 724v15.1M2036.8 724v15.1M2045.92 724v15.1M2063.29 724v15.1M2072.41 724v15.1M2089.77 724v15.1M2098.89 724v15.1M2116.26 724v15.1M2125.38 724v15.1M2142.75 724v15.1M2151.86 724v15.1M2169.23 724v15.1M2178.35 724v15.1M2195.72 724v15.1M2204.84 724v15.1M2222.2 724v15.1M2231.32 724v15.1M2248.69 724v15.1M2257.81 724v15.1M2275.18 724v15.1M2284.29 724v15.1M2301.66 724v15.1M2310.78 724v15.1M2328.15 724v15.1M2337.27 724v15.1M2354.64 724v15.1M2363.75 724v15.1M2381.12 724v15.1M2390.24 724v15.1M2407.61 724v15.1M2416.73 724v15.1" stroke="#4e4e4e" stroke-width="0.7" fill="none"/>
<rect x="333" y="85.7" width="2172" height="2" fill="#9a9a9a"/>
<rect x="333" y="971" width="2172" height="2" fill="#989898"/>
<rect x="2502.8" y="85.7" width="2.2" height="887.3" fill="#aab0be"/>
<rect x="332.1" y="85.7" width="1.6" height="887.3" fill="#6e7882"/>
<path d="M325.9 86.7h6.2M325.9 112h6.2M325.9 137.3h6.2M325.9 162.6h6.2M325.9 187.9h6.2M325.9 213.2h6.2M325.9 238.5h6.2M325.9 263.8h6.2M325.9 289.1h6.2M325.9 314.4h6.2M325.9 339.7h6.2M325.9 365h6.2M325.9 390.3h6.2M325.9 415.6h6.2M325.9 440.9h6.2M325.9 466.2h6.2M325.9 491.5h6.2M325.9 516.8h6.2M325.9 542.1h6.2M325.9 567.4h6.2M325.9 592.7h6.2M325.9 618h6.2M325.9 643.3h6.2M325.9 668.6h6.2M325.9 693.9h6.2M325.9 719.2h6.2M325.9 744.5h6.2M325.9 769.8h6.2M325.9 795.1h6.2M325.9 820.4h6.2M325.9 845.7h6.2M325.9 871h6.2M325.9 896.3h6.2M325.9 921.6h6.2M325.9 946.9h6.2M325.9 972.2h6.2" stroke="#6a6a6a" stroke-width="1.5" fill="none"/>
<text x="322" y="105.55" font-size="17.7" fill="#d4d4d4" text-anchor="end" font-weight="350"><tspan letter-spacing="1.15">001:</tspan> 入荷</text>
<text x="322" y="130.85" font-size="17.7" fill="#d4d4d4" text-anchor="end" font-weight="350"><tspan letter-spacing="1.15">002:</tspan> 仮想置き場</text>
<text x="322" y="156.15" font-size="17.7" fill="#d4d4d4" text-anchor="end" font-weight="350"><tspan letter-spacing="1.15">003:</tspan> 搬送</text>
<text x="322" y="181.45" font-size="17.7" fill="#d4d4d4" text-anchor="end" font-weight="350"><tspan letter-spacing="1.15">004:</tspan> 分岐</text>
<text x="322" y="206.75" font-size="17.7" fill="#d4d4d4" text-anchor="end" font-weight="350"><tspan letter-spacing="1.15">005:</tspan> 仮想置き場</text>
<text x="322" y="232.05" font-size="17.7" fill="#d4d4d4" text-anchor="end" font-weight="350"><tspan letter-spacing="1.15">033:</tspan> 仮想パレット置き場</text>
<text x="322" y="257.35" font-size="17.7" fill="#d4d4d4" text-anchor="end" font-weight="350"><tspan letter-spacing="1.15">006:</tspan> ロボットアーム1（作業台Aへ）</text>
<text x="322" y="282.65" font-size="17.7" fill="#d4d4d4" text-anchor="end" font-weight="350"><tspan letter-spacing="1.15">034:</tspan> パレット返送</text>
<text x="322" y="307.95" font-size="17.7" fill="#d4d4d4" text-anchor="end" font-weight="350"><tspan letter-spacing="1.15">007:</tspan> 分岐</text>
<text x="322" y="333.25" font-size="17.7" fill="#d4d4d4" text-anchor="end" font-weight="350"><tspan letter-spacing="1.15">035:</tspan> 分岐</text>
<text x="322" y="358.55" font-size="17.7" fill="#d4d4d4" text-anchor="end" font-weight="350"><tspan letter-spacing="1.15">008:</tspan> 仮想置き場</text>
<text x="322" y="383.85" font-size="17.7" fill="#d4d4d4" text-anchor="end" font-weight="350"><tspan letter-spacing="1.15">009:</tspan> 分岐</text>
<text x="322" y="409.15" font-size="17.7" fill="#d4d4d4" text-anchor="end" font-weight="350"><tspan letter-spacing="1.15">010:</tspan> 作業台A</text>
<text x="322" y="434.45" font-size="17.7" fill="#d4d4d4" text-anchor="end" font-weight="350"><tspan letter-spacing="1.15">032:</tspan> 情報置き場</text>
<text x="322" y="459.75" font-size="17.7" fill="#d4d4d4" text-anchor="end" font-weight="350"><tspan letter-spacing="1.15">011:</tspan> ロボットアーム1（加工機へ）</text>
<text x="322" y="485.05" font-size="17.7" fill="#d4d4d4" text-anchor="end" font-weight="350"><tspan letter-spacing="1.15">012:</tspan> 分岐</text>
<text x="322" y="510.35" font-size="17.7" fill="#d4d4d4" text-anchor="end" font-weight="350"><tspan letter-spacing="1.15">013:</tspan> 仮想置き場</text>
<text x="322" y="535.65" font-size="17.7" fill="#d4d4d4" text-anchor="end" font-weight="350"><tspan letter-spacing="1.15">030:</tspan> 仮想置き場</text>
<text x="322" y="560.95" font-size="17.7" fill="#d4d4d4" text-anchor="end" font-weight="350"><tspan letter-spacing="1.15">014:</tspan> 加工機A</text>
<text x="322" y="586.25" font-size="17.7" fill="#d4d4d4" text-anchor="end" font-weight="350"><tspan letter-spacing="1.15">031:</tspan> 加工機B</text>
<text x="322" y="611.55" font-size="17.7" fill="#d4d4d4" text-anchor="end" font-weight="350"><tspan letter-spacing="1.15">015:</tspan> 仮想置き場</text>
<text x="322" y="636.85" font-size="17.7" fill="#d4d4d4" text-anchor="end" font-weight="350"><tspan letter-spacing="1.15">016:</tspan> ロボットアーム2（作業台Bへ）</text>
<text x="322" y="662.15" font-size="17.7" fill="#d4d4d4" text-anchor="end" font-weight="350"><tspan letter-spacing="1.15">017:</tspan> 分岐</text>
<text x="322" y="687.45" font-size="17.7" fill="#d4d4d4" text-anchor="end" font-weight="350"><tspan letter-spacing="1.15">018:</tspan> 仮想置き場</text>
<text x="322" y="712.75" font-size="17.7" fill="#d4d4d4" text-anchor="end" font-weight="350"><tspan letter-spacing="1.15">019:</tspan> 分岐</text>
<text x="322" y="738.05" font-size="17.7" fill="#d4d4d4" text-anchor="end" font-weight="350"><tspan letter-spacing="1.15">020:</tspan> 作業台B</text>
<text x="322" y="763.35" font-size="17.7" fill="#d4d4d4" text-anchor="end" font-weight="350"><tspan letter-spacing="1.15">029:</tspan> 情報置き場</text>
<text x="322" y="788.65" font-size="17.7" fill="#d4d4d4" text-anchor="end" font-weight="350"><tspan letter-spacing="1.15">021:</tspan> ロボットアーム2（ラインへ）</text>
<text x="322" y="813.95" font-size="17.7" fill="#d4d4d4" text-anchor="end" font-weight="350"><tspan letter-spacing="1.15">022:</tspan> 分岐</text>
<text x="322" y="839.25" font-size="17.7" fill="#d4d4d4" text-anchor="end" font-weight="350"><tspan letter-spacing="1.15">023:</tspan> 仮想置き場</text>
<text x="322" y="864.55" font-size="17.7" fill="#d4d4d4" text-anchor="end" font-weight="350"><tspan letter-spacing="1.15">024:</tspan> 搬送</text>
<text x="322" y="889.85" font-size="17.7" fill="#d4d4d4" text-anchor="end" font-weight="350"><tspan letter-spacing="1.15">025:</tspan> 分岐</text>
<text x="322" y="915.15" font-size="17.7" fill="#d4d4d4" text-anchor="end" font-weight="350"><tspan letter-spacing="1.15">026:</tspan> 出荷</text>
<text x="322" y="940.45" font-size="17.7" fill="#d4d4d4" text-anchor="end" font-weight="350"><tspan letter-spacing="1.15">027:</tspan> パレット返送</text>
<text x="322" y="965.75" font-size="17.7" fill="#d4d4d4" text-anchor="end" font-weight="350"><tspan letter-spacing="1.15">028:</tspan> 分岐</text>
<text x="333.4" y="997.2" font-size="19" fill="#d4d4d4" text-anchor="middle" letter-spacing="0.8">0</text>
<text x="767.6" y="997.2" font-size="19" fill="#d4d4d4" text-anchor="middle" letter-spacing="0.8">100</text>
<text x="1201.8" y="997.2" font-size="19" fill="#d4d4d4" text-anchor="middle" letter-spacing="0.8">200</text>
<text x="1636" y="997.2" font-size="19" fill="#d4d4d4" text-anchor="middle" letter-spacing="0.8">300</text>
<text x="2070.2" y="997.2" font-size="19" fill="#d4d4d4" text-anchor="middle" letter-spacing="0.8">400</text>
<text x="2504.4" y="997.2" font-size="19" fill="#d4d4d4" text-anchor="middle" letter-spacing="0.8">500</text>
<text x="1418.5" y="1030.3" font-size="20" fill="#d4d4d4" text-anchor="middle" font-weight="350">シミュレーション時間 (分)</text>
<path d="M0,13.5h26.9 M13.5,26.9V0 M32.1,13.5H58V58H13.5 V32.1" transform="translate(2514.2 85.8) scale(0.4310)" fill="none" stroke="#cfcfcf" stroke-width="3.94" stroke-linecap="butt"/>
<path d="M22,1.4L9.9,13.5l12.3,12.3 M10.3,13.5H54.9v44.6 H10.3v-26" transform="translate(2512.41 126.18) scale(0.4409)" fill="none" stroke="#cfcfcf" stroke-width="3.86" stroke-linecap="butt"/>
<path d="M17.5,17.3H33 M45.4,29.5h-28 M11.5,2v56H51V14.8L38.4,2H11.5z M38.4,2.2v12.7H51 M45.4,41.7h-28" transform="translate(2512.75 166.91) scale(0.4464)" fill="none" stroke="#cfcfcf" stroke-width="3.81" stroke-linecap="butt"/>
<path d="M4.7,22.9L29.3,45.5L54.7,23.4M4.6,43.6L4.6,58L53.8,58L53.8,43.6M29.2,45.1L29.2,0" transform="translate(2513.92 208.8) scale(0.4310)" fill="none" stroke="#cfcfcf" stroke-width="3.94" stroke-linecap="butt"/>
<path d="M336.6 1053 v-6.5 a2 2 0 0 1 2 -2 h2165.7 a2 2 0 0 1 2 2 v6.5 z" fill="#9ea3b4"/>
<rect x="336.6" y="1053" width="2169.7" height="78.7" fill="#23324e"/>
<rect x="336.6" y="1051.8" width="2169.7" height="1.7" fill="#b0c2e4"/>
<rect x="1418.2" y="1046.75" width="1.3" height="4" fill="#fff"/>
<rect x="1420.8" y="1046.75" width="1.3" height="4" fill="#fff"/>
<rect x="1423.4" y="1046.75" width="1.3" height="4" fill="#fff"/>
<rect x="335.8" y="1053" width="1.6" height="78.7" fill="#e8ecf6"/>
<rect x="328.5" y="1069" width="18" height="55.4" rx="4.5" fill="#fff" stroke="#acb8d1" stroke-width="0.8"/>
<rect x="2505.5" y="1053" width="1.6" height="78.7" fill="#e8ecf6"/>
<rect x="2497" y="1069" width="18" height="55.4" rx="4.5" fill="#fff" stroke="#acb8d1" stroke-width="0.8"/>
</svg>
<section class="panel sub" style="left:5px;width:705.5px;border-left-color:#557679"><div class="ptitle">在庫数 (002: 仮想置き場)</div>
<svg class="ibtn" style="left:613.2px;top:14px" width="26" height="24.8" viewBox="0 0 26 24" preserveAspectRatio="none"><path d="M13 1.4c-6.4 0-11.6 4-11.6 9 0 2.3 1.1 4.4 2.9 6 -0.5 1.9-1.6 3.5-2.8 4.6 2.6 0 5-0.9 6.7-2.2 1.5 0.4 3.1 0.7 4.8 0.7 6.4 0 11.6-4 11.6-9.1s-5.2-9-11.6-9z" fill="none" stroke="#fff" stroke-width="2.15" stroke-linejoin="round"/><circle cx="7.6" cy="10.5" r="1.5" fill="#fff"/><circle cx="13" cy="10.5" r="1.5" fill="#fff"/><circle cx="18.4" cy="10.5" r="1.5" fill="#fff"/></svg>
<svg class="ibtn" style="left:667.6px;top:17px" width="18" height="18" viewBox="0 0 18 18"><path d="M2.6 2.6L15.4 15.4M15.4 2.6L2.6 15.4" stroke="#fff" stroke-width="3" stroke-linecap="round" fill="none"/></svg>
</section>
<section class="panel sub" style="left:708.5px;width:442.8px"><div class="ptitle">生産数</div>
<svg class="ibtn" style="left:350.5px;top:14px" width="26" height="24.8" viewBox="0 0 26 24" preserveAspectRatio="none"><path d="M13 1.4c-6.4 0-11.6 4-11.6 9 0 2.3 1.1 4.4 2.9 6 -0.5 1.9-1.6 3.5-2.8 4.6 2.6 0 5-0.9 6.7-2.2 1.5 0.4 3.1 0.7 4.8 0.7 6.4 0 11.6-4 11.6-9.1s-5.2-9-11.6-9z" fill="none" stroke="#fff" stroke-width="2.15" stroke-linejoin="round"/><circle cx="7.6" cy="10.5" r="1.5" fill="#fff"/><circle cx="13" cy="10.5" r="1.5" fill="#fff"/><circle cx="18.4" cy="10.5" r="1.5" fill="#fff"/></svg>
<svg class="ibtn" style="left:404.9px;top:17px" width="18" height="18" viewBox="0 0 18 18"><path d="M2.6 2.6L15.4 15.4M15.4 2.6L2.6 15.4" stroke="#fff" stroke-width="3" stroke-linecap="round" fill="none"/></svg>
</section>
<section class="panel sub" style="left:1149.3px;width:706.7px"><div class="ptitle">平均稼働率 (014: 加工機A)</div>
<svg class="ibtn" style="left:614.4px;top:14px" width="26" height="24.8" viewBox="0 0 26 24" preserveAspectRatio="none"><path d="M13 1.4c-6.4 0-11.6 4-11.6 9 0 2.3 1.1 4.4 2.9 6 -0.5 1.9-1.6 3.5-2.8 4.6 2.6 0 5-0.9 6.7-2.2 1.5 0.4 3.1 0.7 4.8 0.7 6.4 0 11.6-4 11.6-9.1s-5.2-9-11.6-9z" fill="none" stroke="#fff" stroke-width="2.15" stroke-linejoin="round"/><circle cx="7.6" cy="10.5" r="1.5" fill="#fff"/><circle cx="13" cy="10.5" r="1.5" fill="#fff"/><circle cx="18.4" cy="10.5" r="1.5" fill="#fff"/></svg>
<svg class="ibtn" style="left:668.8px;top:17px" width="18" height="18" viewBox="0 0 18 18"><path d="M2.6 2.6L15.4 15.4M15.4 2.6L2.6 15.4" stroke="#fff" stroke-width="3" stroke-linecap="round" fill="none"/></svg>
</section>
<section class="panel sub" style="left:1854px;width:705.6px;border-right-color:#557679"><div class="ptitle">平均稼働率 (031: 加工機B)</div>
<svg class="ibtn" style="left:613.3px;top:14px" width="26" height="24.8" viewBox="0 0 26 24" preserveAspectRatio="none"><path d="M13 1.4c-6.4 0-11.6 4-11.6 9 0 2.3 1.1 4.4 2.9 6 -0.5 1.9-1.6 3.5-2.8 4.6 2.6 0 5-0.9 6.7-2.2 1.5 0.4 3.1 0.7 4.8 0.7 6.4 0 11.6-4 11.6-9.1s-5.2-9-11.6-9z" fill="none" stroke="#fff" stroke-width="2.15" stroke-linejoin="round"/><circle cx="7.6" cy="10.5" r="1.5" fill="#fff"/><circle cx="13" cy="10.5" r="1.5" fill="#fff"/><circle cx="18.4" cy="10.5" r="1.5" fill="#fff"/></svg>
<svg class="ibtn" style="left:667.7px;top:17px" width="18" height="18" viewBox="0 0 18 18"><path d="M2.6 2.6L15.4 15.4M15.4 2.6L2.6 15.4" stroke="#fff" stroke-width="3" stroke-linecap="round" fill="none"/></svg>
</section>
<svg width="2560" height="1586" viewBox="0 0 2560 1586">
<rect x="84" y="1198.3" width="30.8" height="2.6" fill="#cfcfcf"/>
<text x="121.8" y="1205.1" font-size="15" fill="#c4c4c4" font-weight="350">合計(シミュレーション)</text>
<rect x="296.5" y="1198.3" width="30.9" height="2.6" fill="#1a42e6"/>
<text x="334" y="1205.1" font-size="15" fill="#c4c4c4" font-weight="350">部品(シミュレーション)</text>
<rect x="508.8" y="1198.3" width="31" height="2.6" fill="#e8a04e"/>
<text x="546.6" y="1205.1" font-size="15" fill="#c4c4c4" font-weight="350">パレット</text>
<path d="M631.4 1191.2v16.6l-10.6 -8.3z" fill="#8a8a8a"/>
<text x="658.3" y="1206" font-size="18.5" fill="#b0b0b0" text-anchor="middle" letter-spacing="1.7">1/2</text>
<path d="M682 1191.2v16.6l10.8 -8.3z" fill="#fff"/>
<rect x="84.6" y="1482" width="571.2" height="2" fill="#969696"/>
<rect x="85.6" y="1444" width="569.2" height="1.8" fill="#babec8"/>
<rect x="85.6" y="1406" width="569.2" height="1.8" fill="#babec8"/>
<rect x="85.6" y="1368" width="569.2" height="1.8" fill="#babec8"/>
<rect x="85.6" y="1330" width="569.2" height="1.8" fill="#babec8"/>
<rect x="85.6" y="1292" width="569.2" height="1.8" fill="#babec8"/>
<rect x="85.6" y="1255" width="569.2" height="1.8" fill="#babec8"/>
<rect x="84.6" y="1217" width="571.2" height="1.8" fill="#babec8"/>
<rect x="84.85" y="1217.3" width="1.5" height="266.4" fill="#858a90"/>
<rect x="654.05" y="1217.3" width="1.5" height="266.4" fill="#858a90"/>
<path d="M144.89 1217.3V1482.7M204.18 1217.3V1482.7M263.48 1217.3V1482.7M322.77 1217.3V1482.7M382.06 1217.3V1482.7M441.35 1217.3V1482.7M500.64 1217.3V1482.7M559.93 1217.3V1482.7M619.23 1217.3V1482.7M654.8 1217.3V1482.7" stroke="#c6c9d0" stroke-width="1.7" stroke-dasharray="5.2 2.7" fill="none"/>
<path d="M79.1 1482.7h6M79.1 1444.79h6M79.1 1406.87h6M79.1 1368.96h6M79.1 1331.04h6M79.1 1293.13h6M79.1 1255.21h6M79.1 1217.3h6M85.6 1482.7v6M144.89 1482.7v6M204.18 1482.7v6M263.48 1482.7v6M322.77 1482.7v6M382.06 1482.7v6M441.35 1482.7v6M500.64 1482.7v6M559.93 1482.7v6M619.23 1482.7v6M654.8 1482.7v6" stroke="#70747a" stroke-width="1.4" fill="none"/>
<rect x="84.9" y="1216.6" width="570.6" height="2.2" fill="#c8ccd6"/>
<text x="76.9" y="1488.5" font-size="16" fill="#d4d4d4" text-anchor="end" letter-spacing="1.2">0</text>
<text x="76.9" y="1450.59" font-size="16" fill="#d4d4d4" text-anchor="end" letter-spacing="1.2">50</text>
<text x="76.9" y="1412.67" font-size="16" fill="#d4d4d4" text-anchor="end" letter-spacing="1.2">100</text>
<text x="76.9" y="1374.76" font-size="16" fill="#d4d4d4" text-anchor="end" letter-spacing="1.2">150</text>
<text x="76.9" y="1336.84" font-size="16" fill="#d4d4d4" text-anchor="end" letter-spacing="1.2">200</text>
<text x="76.9" y="1298.93" font-size="16" fill="#d4d4d4" text-anchor="end" letter-spacing="1.2">250</text>
<text x="76.9" y="1261.01" font-size="16" fill="#d4d4d4" text-anchor="end" letter-spacing="1.2">300</text>
<text x="76.9" y="1223.1" font-size="16" fill="#d4d4d4" text-anchor="end" letter-spacing="1.2">350</text>
<text x="86.2" y="1506.4" font-size="16" fill="#d4d4d4" text-anchor="middle" letter-spacing="0.85">0</text>
<text x="145.49" y="1506.4" font-size="16" fill="#d4d4d4" text-anchor="middle" letter-spacing="0.85">50</text>
<text x="204.78" y="1506.4" font-size="16" fill="#d4d4d4" text-anchor="middle" letter-spacing="0.85">100</text>
<text x="264.08" y="1506.4" font-size="16" fill="#d4d4d4" text-anchor="middle" letter-spacing="0.85">150</text>
<text x="323.37" y="1506.4" font-size="16" fill="#d4d4d4" text-anchor="middle" letter-spacing="0.85">200</text>
<text x="382.66" y="1506.4" font-size="16" fill="#d4d4d4" text-anchor="middle" letter-spacing="0.85">250</text>
<text x="441.95" y="1506.4" font-size="16" fill="#d4d4d4" text-anchor="middle" letter-spacing="0.85">300</text>
<text x="501.24" y="1506.4" font-size="16" fill="#d4d4d4" text-anchor="middle" letter-spacing="0.85">350</text>
<text x="560.53" y="1506.4" font-size="16" fill="#d4d4d4" text-anchor="middle" letter-spacing="0.85">400</text>
<text x="619.83" y="1506.4" font-size="16" fill="#d4d4d4" text-anchor="middle" letter-spacing="0.85">450</text>
<text x="655.4" y="1506.4" font-size="16" fill="#d4d4d4" text-anchor="middle" letter-spacing="0.85">480</text>
<text transform="translate(29.5 1363.3) rotate(-90)" font-size="16.5" fill="#d4d4d4" font-weight="350" text-anchor="middle">個数</text>
<path d="M85.6 1482.7L89.16 1482.7L654.8 1238.53" stroke="#d8d8d8" stroke-width="1.4" fill="none"/>
<path d="M85.6 1482.7L89.16 1482.7L654.8 1238.53" stroke="#1a42e6" stroke-width="2.3" fill="none" stroke-linejoin="round"/>
<path d="M85.6 1482.1H654.8" stroke="#e8a04e" stroke-width="2.8" fill="none"/>
<path d="M0,13.5h26.9 M13.5,26.9V0 M32.1,13.5H58V58H13.5 V32.1" transform="translate(664.6 1216.4) scale(0.4310)" fill="none" stroke="#cfcfcf" stroke-width="3.94" stroke-linecap="butt"/>
<path d="M22,1.4L9.9,13.5l12.3,12.3 M10.3,13.5H54.9v44.6 H10.3v-26" transform="translate(662.81 1256.78) scale(0.4409)" fill="none" stroke="#cfcfcf" stroke-width="3.86" stroke-linecap="butt"/>
<path d="M17.5,17.3H33 M45.4,29.5h-28 M11.5,2v56H51V14.8L38.4,2H11.5z M38.4,2.2v12.7H51 M45.4,41.7h-28" transform="translate(663.15 1297.51) scale(0.4464)" fill="none" stroke="#cfcfcf" stroke-width="3.81" stroke-linecap="butt"/>
<path d="M4.7,22.9L29.3,45.5L54.7,23.4M4.6,43.6L4.6,58L53.8,58L53.8,43.6M29.2,45.1L29.2,0" transform="translate(664.32 1339.4) scale(0.4310)" fill="none" stroke="#cfcfcf" stroke-width="3.94" stroke-linecap="butt"/>
<path d="M90.3 1552 v-7.3 a2 2 0 0 1 2 -2 h562.9 a2 2 0 0 1 2 2 v7.3 z" fill="#9ea3b4"/>
<rect x="90.3" y="1552" width="566.9" height="15.8" fill="#23324e"/>
<rect x="90.3" y="1550.8" width="566.9" height="1.7" fill="#b0c2e4"/>
<rect x="370.5" y="1545.75" width="1.3" height="3.2" fill="#fff"/>
<rect x="373.1" y="1545.75" width="1.3" height="3.2" fill="#fff"/>
<rect x="375.7" y="1545.75" width="1.3" height="3.2" fill="#fff"/>
<rect x="88.3" y="1555.1" width="6.3" height="12.7" rx="1.6" fill="#fff" stroke="#acb8d1" stroke-width="0.5"/>
<rect x="652.9" y="1555.1" width="6.3" height="12.7" rx="1.6" fill="#fff" stroke="#acb8d1" stroke-width="0.5"/>
<rect x="789" y="1482" width="305.3" height="2" fill="#969696"/>
<rect x="789" y="1217.3" width="2" height="266.7" fill="#969696"/>
<rect x="1092.3" y="1217.3" width="2" height="266.7" fill="#969696"/>
<rect x="790" y="1438" width="303.3" height="1.8" fill="#babec8"/>
<rect x="790" y="1394" width="303.3" height="1.8" fill="#babec8"/>
<rect x="790" y="1349" width="303.3" height="1.8" fill="#babec8"/>
<rect x="790" y="1305" width="303.3" height="1.8" fill="#babec8"/>
<rect x="790" y="1261" width="303.3" height="1.8" fill="#babec8"/>
<rect x="789" y="1217" width="305.3" height="1.8" fill="#babec8"/>
<rect x="836.6" y="1254.16" width="210.1" height="187.16" fill="#4a9bb4"/>
<g shape-rendering="crispEdges">
<rect x="836.6" y="1440.83" width="210.1" height="2.06" fill="#4999b2"/>
<rect x="836.6" y="1442.29" width="210.1" height="2.06" fill="#4896ae"/>
<rect x="836.6" y="1443.75" width="210.1" height="2.06" fill="#4692aa"/>
<rect x="836.6" y="1445.22" width="210.1" height="2.06" fill="#458fa6"/>
<rect x="836.6" y="1446.68" width="210.1" height="2.06" fill="#438ba3"/>
<rect x="836.6" y="1448.14" width="210.1" height="2.06" fill="#42889f"/>
<rect x="836.6" y="1449.61" width="210.1" height="2.06" fill="#40849b"/>
<rect x="836.6" y="1451.07" width="210.1" height="2.06" fill="#3e8197"/>
<rect x="836.6" y="1452.53" width="210.1" height="2.06" fill="#3d7e93"/>
<rect x="836.6" y="1454" width="210.1" height="2.06" fill="#3b7a8f"/>
<rect x="836.6" y="1455.46" width="210.1" height="2.06" fill="#3a778c"/>
<rect x="836.6" y="1456.92" width="210.1" height="2.06" fill="#387388"/>
<rect x="836.6" y="1458.39" width="210.1" height="2.06" fill="#377084"/>
<rect x="836.6" y="1459.85" width="210.1" height="2.06" fill="#356c80"/>
<rect x="836.6" y="1461.31" width="210.1" height="2.06" fill="#34697c"/>
<rect x="836.6" y="1462.78" width="210.1" height="2.06" fill="#326578"/>
<rect x="836.6" y="1464.24" width="210.1" height="2.06" fill="#316274"/>
<rect x="836.6" y="1465.7" width="210.1" height="2.06" fill="#2f5e70"/>
<rect x="836.6" y="1467.17" width="210.1" height="2.06" fill="#2e5b6d"/>
<rect x="836.6" y="1468.63" width="210.1" height="2.06" fill="#2c5769"/>
<rect x="836.6" y="1470.09" width="210.1" height="2.06" fill="#2b5465"/>
<rect x="836.6" y="1471.56" width="210.1" height="2.06" fill="#295161"/>
<rect x="836.6" y="1473.02" width="210.1" height="2.06" fill="#274d5d"/>
<rect x="836.6" y="1474.48" width="210.1" height="2.06" fill="#264a59"/>
<rect x="836.6" y="1475.95" width="210.1" height="2.06" fill="#244656"/>
<rect x="836.6" y="1477.41" width="210.1" height="2.06" fill="#234352"/>
<rect x="836.6" y="1478.87" width="210.1" height="2.06" fill="#213f4e"/>
<rect x="836.6" y="1480.34" width="210.1" height="2.06" fill="#203c4a"/>
</g>
<rect x="836.6" y="1438" width="210.1" height="1.8" fill="#72c6e0"/>
<rect x="836.6" y="1394" width="210.1" height="1.8" fill="#72c6e0"/>
<rect x="836.6" y="1349" width="210.1" height="1.8" fill="#72c6e0"/>
<rect x="836.6" y="1305" width="210.1" height="1.8" fill="#72c6e0"/>
<rect x="836.6" y="1261" width="210.1" height="1.8" fill="#72c6e0"/>
<path d="M941.95 1484v5.2" stroke="#8e8e8e" stroke-width="1.5"/>
<text x="781.7" y="1488.5" font-size="16" fill="#d4d4d4" text-anchor="end" letter-spacing="1.2">0</text>
<text x="781.7" y="1444.27" font-size="16" fill="#d4d4d4" text-anchor="end" letter-spacing="1.2">30</text>
<text x="781.7" y="1400.03" font-size="16" fill="#d4d4d4" text-anchor="end" letter-spacing="1.2">60</text>
<text x="781.7" y="1355.8" font-size="16" fill="#d4d4d4" text-anchor="end" letter-spacing="1.2">90</text>
<text x="781.7" y="1311.57" font-size="16" fill="#d4d4d4" text-anchor="end" letter-spacing="1.2">120</text>
<text x="781.7" y="1267.33" font-size="16" fill="#d4d4d4" text-anchor="end" letter-spacing="1.2">150</text>
<text x="781.7" y="1223.1" font-size="16" fill="#d4d4d4" text-anchor="end" letter-spacing="1.2">180</text>
<text x="942" y="1374.5" font-size="16" fill="#1d2b33" text-anchor="middle" letter-spacing="0.5">155</text>
<text x="942" y="1506.2" font-size="15" fill="#d4d4d4" text-anchor="middle" font-weight="350">出荷品</text>
<text transform="translate(734 1363.4) rotate(-90)" font-size="16.5" fill="#d4d4d4" font-weight="350" text-anchor="middle">生産数</text>
<path d="M0,13.5h26.9 M13.5,26.9V0 M32.1,13.5H58V58H13.5 V32.1" transform="translate(1103.6 1216.4) scale(0.4310)" fill="none" stroke="#cfcfcf" stroke-width="3.94" stroke-linecap="butt"/>
<path d="M22,1.4L9.9,13.5l12.3,12.3 M10.3,13.5H54.9v44.6 H10.3v-26" transform="translate(1101.81 1256.78) scale(0.4409)" fill="none" stroke="#cfcfcf" stroke-width="3.86" stroke-linecap="butt"/>
<path d="M17.5,17.3H33 M45.4,29.5h-28 M11.5,2v56H51V14.8L38.4,2H11.5z M38.4,2.2v12.7H51 M45.4,41.7h-28" transform="translate(1102.15 1297.51) scale(0.4464)" fill="none" stroke="#cfcfcf" stroke-width="3.81" stroke-linecap="butt"/>
<path d="M4.7,22.9L29.3,45.5L54.7,23.4M4.6,43.6L4.6,58L53.8,58L53.8,43.6M29.2,45.1L29.2,0" transform="translate(1103.32 1339.4) scale(0.4310)" fill="none" stroke="#cfcfcf" stroke-width="3.94" stroke-linecap="butt"/>
<path d="M794 1552 v-7.3 a2 2 0 0 1 2 -2 h298.9 a2 2 0 0 1 2 2 v7.3 z" fill="#9ea3b4"/>
<rect x="794" y="1552" width="302.9" height="15.8" fill="#23324e"/>
<rect x="794" y="1550.8" width="302.9" height="1.7" fill="#b0c2e4"/>
<rect x="942.2" y="1545.75" width="1.3" height="3.2" fill="#fff"/>
<rect x="944.8" y="1545.75" width="1.3" height="3.2" fill="#fff"/>
<rect x="947.4" y="1545.75" width="1.3" height="3.2" fill="#fff"/>
<rect x="792" y="1555.1" width="6.3" height="12.7" rx="1.6" fill="#fff" stroke="#acb8d1" stroke-width="0.5"/>
<rect x="1092.6" y="1555.1" width="6.3" height="12.7" rx="1.6" fill="#fff" stroke="#acb8d1" stroke-width="0.5"/>
<rect x="1227.6" y="1190.8" width="31" height="17.6" rx="4" fill="#1cf078"/>
<text x="1265.4" y="1205" font-size="15" fill="#c4c4c4" font-weight="350">稼働中</text>
<rect x="1322.4" y="1190.8" width="31" height="17.6" rx="4" fill="#666"/>
<text x="1361.2" y="1205" font-size="15" fill="#c4c4c4" font-weight="350">アイドル</text>
<rect x="1229.6" y="1482" width="570.1" height="2" fill="#969696"/>
<rect x="1229.6" y="1217.3" width="2" height="266.7" fill="#969696"/>
<rect x="1797.7" y="1217.3" width="2" height="266.7" fill="#969696"/>
<rect x="1230.6" y="1429" width="568.1" height="1.8" fill="#babec8"/>
<rect x="1230.6" y="1376" width="568.1" height="1.8" fill="#babec8"/>
<rect x="1230.6" y="1323" width="568.1" height="1.8" fill="#babec8"/>
<rect x="1230.6" y="1270" width="568.1" height="1.8" fill="#babec8"/>
<rect x="1229.6" y="1217" width="570.1" height="1.8" fill="#babec8"/>
<rect x="1241.61" y="1314.7" width="49" height="167.1" fill="#1cf078"/>
<rect x="1241.61" y="1216.4" width="49" height="98.3" fill="#666"/>
<text x="1266.11" y="1404.5" font-size="16" fill="#0a4726" text-anchor="middle" letter-spacing="0.4">63.3</text>
<text x="1266.11" y="1271.8" font-size="16" fill="#e2e2e2" text-anchor="middle" letter-spacing="0.4">36.7</text>
<rect x="1312.62" y="1310.11" width="49" height="171.69" fill="#1cf078"/>
<rect x="1312.62" y="1216.4" width="49" height="93.71" fill="#666"/>
<text x="1337.12" y="1402.21" font-size="16" fill="#0a4726" text-anchor="middle" letter-spacing="0.4">65.03</text>
<text x="1337.12" y="1269.51" font-size="16" fill="#e2e2e2" text-anchor="middle" letter-spacing="0.4">34.97</text>
<rect x="1383.63" y="1310.19" width="49" height="171.61" fill="#1cf078"/>
<rect x="1383.63" y="1216.4" width="49" height="93.79" fill="#666"/>
<text x="1408.13" y="1402.25" font-size="16" fill="#0a4726" text-anchor="middle" letter-spacing="0.4">65</text>
<text x="1408.13" y="1269.54" font-size="16" fill="#e2e2e2" text-anchor="middle" letter-spacing="0.4">35</text>
<rect x="1454.64" y="1305.76" width="49" height="176.04" fill="#1cf078"/>
<rect x="1454.64" y="1216.4" width="49" height="89.36" fill="#666"/>
<text x="1479.14" y="1400.03" font-size="16" fill="#0a4726" text-anchor="middle" letter-spacing="0.4">66.67</text>
<text x="1479.14" y="1267.33" font-size="16" fill="#e2e2e2" text-anchor="middle" letter-spacing="0.4">33.33</text>
<rect x="1525.66" y="1305.76" width="49" height="176.04" fill="#1cf078"/>
<rect x="1525.66" y="1216.4" width="49" height="89.36" fill="#666"/>
<text x="1550.16" y="1400.03" font-size="16" fill="#0a4726" text-anchor="middle" letter-spacing="0.4">66.67</text>
<text x="1550.16" y="1267.33" font-size="16" fill="#e2e2e2" text-anchor="middle" letter-spacing="0.4">33.33</text>
<rect x="1596.67" y="1309.84" width="49" height="171.96" fill="#1cf078"/>
<rect x="1596.67" y="1216.4" width="49" height="93.44" fill="#666"/>
<text x="1621.17" y="1402.07" font-size="16" fill="#0a4726" text-anchor="middle" letter-spacing="0.4">65.13</text>
<text x="1621.17" y="1269.37" font-size="16" fill="#e2e2e2" text-anchor="middle" letter-spacing="0.4">34.86</text>
<rect x="1667.68" y="1310.19" width="49" height="171.61" fill="#1cf078"/>
<rect x="1667.68" y="1216.4" width="49" height="93.79" fill="#666"/>
<text x="1692.18" y="1402.25" font-size="16" fill="#0a4726" text-anchor="middle" letter-spacing="0.4">65</text>
<text x="1692.18" y="1269.54" font-size="16" fill="#e2e2e2" text-anchor="middle" letter-spacing="0.4">35</text>
<rect x="1738.69" y="1310.19" width="49" height="171.61" fill="#1cf078"/>
<rect x="1738.69" y="1216.4" width="49" height="93.79" fill="#666"/>
<text x="1763.19" y="1402.25" font-size="16" fill="#0a4726" text-anchor="middle" letter-spacing="0.4">65</text>
<text x="1763.19" y="1269.54" font-size="16" fill="#e2e2e2" text-anchor="middle" letter-spacing="0.4">35</text>
<path d="M1266.41 1484v5.2M1408.43 1484v5.2M1550.46 1484v5.2M1692.48 1484v5.2" stroke="#8e8e8e" stroke-width="1.5" fill="none"/>
<text x="1266.11" y="1506.4" font-size="16" fill="#d4d4d4" text-anchor="middle" letter-spacing="0.5">0 - 60</text>
<text x="1408.13" y="1506.4" font-size="16" fill="#d4d4d4" text-anchor="middle" letter-spacing="0.5">120 - 180</text>
<text x="1550.16" y="1506.4" font-size="16" fill="#d4d4d4" text-anchor="middle" letter-spacing="0.5">240 - 300</text>
<text x="1692.18" y="1506.4" font-size="16" fill="#d4d4d4" text-anchor="middle" letter-spacing="0.5">360 - 420</text>
<text x="1221.5" y="1488.5" font-size="16" fill="#d4d4d4" text-anchor="end" letter-spacing="1.2">0</text>
<text x="1221.5" y="1435.42" font-size="16" fill="#d4d4d4" text-anchor="end" letter-spacing="1.2">20</text>
<text x="1221.5" y="1382.34" font-size="16" fill="#d4d4d4" text-anchor="end" letter-spacing="1.2">40</text>
<text x="1221.5" y="1329.26" font-size="16" fill="#d4d4d4" text-anchor="end" letter-spacing="1.2">60</text>
<text x="1221.5" y="1276.18" font-size="16" fill="#d4d4d4" text-anchor="end" letter-spacing="1.2">80</text>
<text x="1221.5" y="1223.1" font-size="16" fill="#d4d4d4" text-anchor="end" letter-spacing="1.2">100</text>
<text transform="translate(1174.5 1363) rotate(-90)" font-size="16.5" fill="#d4d4d4" font-weight="350" text-anchor="middle">稼働率 (%)</text>
<path d="M0,13.5h26.9 M13.5,26.9V0 M32.1,13.5H58V58H13.5 V32.1" transform="translate(1809 1216.4) scale(0.4310)" fill="none" stroke="#cfcfcf" stroke-width="3.94" stroke-linecap="butt"/>
<path d="M22,1.4L9.9,13.5l12.3,12.3 M10.3,13.5H54.9v44.6 H10.3v-26" transform="translate(1807.21 1256.78) scale(0.4409)" fill="none" stroke="#cfcfcf" stroke-width="3.86" stroke-linecap="butt"/>
<path d="M17.5,17.3H33 M45.4,29.5h-28 M11.5,2v56H51V14.8L38.4,2H11.5z M38.4,2.2v12.7H51 M45.4,41.7h-28" transform="translate(1807.55 1297.51) scale(0.4464)" fill="none" stroke="#cfcfcf" stroke-width="3.81" stroke-linecap="butt"/>
<path d="M4.7,22.9L29.3,45.5L54.7,23.4M4.6,43.6L4.6,58L53.8,58L53.8,43.6M29.2,45.1L29.2,0" transform="translate(1808.72 1339.4) scale(0.4310)" fill="none" stroke="#cfcfcf" stroke-width="3.94" stroke-linecap="butt"/>
<path d="M1234.5 1552 v-7.3 a2 2 0 0 1 2 -2 h563.7 a2 2 0 0 1 2 2 v7.3 z" fill="#9ea3b4"/>
<rect x="1234.5" y="1552" width="567.7" height="15.8" fill="#23324e"/>
<rect x="1234.5" y="1550.8" width="567.7" height="1.7" fill="#b0c2e4"/>
<rect x="1515.1" y="1545.75" width="1.3" height="3.2" fill="#fff"/>
<rect x="1517.7" y="1545.75" width="1.3" height="3.2" fill="#fff"/>
<rect x="1520.3" y="1545.75" width="1.3" height="3.2" fill="#fff"/>
<rect x="1232.5" y="1555.1" width="6.3" height="12.7" rx="1.6" fill="#fff" stroke="#acb8d1" stroke-width="0.5"/>
<rect x="1797.9" y="1555.1" width="6.3" height="12.7" rx="1.6" fill="#fff" stroke="#acb8d1" stroke-width="0.5"/>
<rect x="1932" y="1190.8" width="31" height="17.6" rx="4" fill="#1cf078"/>
<text x="1969.8" y="1205" font-size="15" fill="#c4c4c4" font-weight="350">稼働中</text>
<rect x="2026.8" y="1190.8" width="31" height="17.6" rx="4" fill="#666"/>
<text x="2065.6" y="1205" font-size="15" fill="#c4c4c4" font-weight="350">アイドル</text>
<rect x="1934" y="1482" width="570.1" height="2" fill="#969696"/>
<rect x="1934" y="1217.3" width="2" height="266.7" fill="#969696"/>
<rect x="2502.1" y="1217.3" width="2" height="266.7" fill="#969696"/>
<rect x="1935" y="1429" width="568.1" height="1.8" fill="#babec8"/>
<rect x="1935" y="1376" width="568.1" height="1.8" fill="#babec8"/>
<rect x="1935" y="1323" width="568.1" height="1.8" fill="#babec8"/>
<rect x="1935" y="1270" width="568.1" height="1.8" fill="#babec8"/>
<rect x="1934" y="1217" width="570.1" height="1.8" fill="#babec8"/>
<rect x="1946.01" y="1323.46" width="49" height="158.34" fill="#1cf078"/>
<rect x="1946.01" y="1216.4" width="49" height="107.06" fill="#666"/>
<text x="1970.51" y="1408.88" font-size="16" fill="#0a4726" text-anchor="middle" letter-spacing="0.4">60</text>
<text x="1970.51" y="1276.18" font-size="16" fill="#e2e2e2" text-anchor="middle" letter-spacing="0.4">40</text>
<rect x="2017.02" y="1305.76" width="49" height="176.04" fill="#1cf078"/>
<rect x="2017.02" y="1216.4" width="49" height="89.36" fill="#666"/>
<text x="2041.52" y="1400.03" font-size="16" fill="#0a4726" text-anchor="middle" letter-spacing="0.4">66.67</text>
<text x="2041.52" y="1267.33" font-size="16" fill="#e2e2e2" text-anchor="middle" letter-spacing="0.4">33.33</text>
<rect x="2088.03" y="1305.86" width="49" height="175.94" fill="#1cf078"/>
<rect x="2088.03" y="1216.4" width="49" height="89.46" fill="#666"/>
<text x="2112.53" y="1400.08" font-size="16" fill="#0a4726" text-anchor="middle" letter-spacing="0.4">66.63</text>
<text x="2112.53" y="1267.38" font-size="16" fill="#e2e2e2" text-anchor="middle" letter-spacing="0.4">33.36</text>
<rect x="2159.04" y="1310.19" width="49" height="171.61" fill="#1cf078"/>
<rect x="2159.04" y="1216.4" width="49" height="93.79" fill="#666"/>
<text x="2183.54" y="1402.25" font-size="16" fill="#0a4726" text-anchor="middle" letter-spacing="0.4">65</text>
<text x="2183.54" y="1269.54" font-size="16" fill="#e2e2e2" text-anchor="middle" letter-spacing="0.4">35</text>
<rect x="2230.06" y="1310.19" width="49" height="171.61" fill="#1cf078"/>
<rect x="2230.06" y="1216.4" width="49" height="93.79" fill="#666"/>
<text x="2254.56" y="1402.25" font-size="16" fill="#0a4726" text-anchor="middle" letter-spacing="0.4">65</text>
<text x="2254.56" y="1269.54" font-size="16" fill="#e2e2e2" text-anchor="middle" letter-spacing="0.4">35</text>
<rect x="2301.07" y="1310.19" width="49" height="171.61" fill="#1cf078"/>
<rect x="2301.07" y="1216.4" width="49" height="93.79" fill="#666"/>
<text x="2325.57" y="1402.25" font-size="16" fill="#0a4726" text-anchor="middle" letter-spacing="0.4">65</text>
<text x="2325.57" y="1269.54" font-size="16" fill="#e2e2e2" text-anchor="middle" letter-spacing="0.4">35</text>
<rect x="2372.08" y="1310.11" width="49" height="171.69" fill="#1cf078"/>
<rect x="2372.08" y="1216.4" width="49" height="93.71" fill="#666"/>
<text x="2396.58" y="1402.21" font-size="16" fill="#0a4726" text-anchor="middle" letter-spacing="0.4">65.03</text>
<text x="2396.58" y="1269.51" font-size="16" fill="#e2e2e2" text-anchor="middle" letter-spacing="0.4">34.97</text>
<rect x="2443.09" y="1305.76" width="49" height="176.04" fill="#1cf078"/>
<rect x="2443.09" y="1216.4" width="49" height="89.36" fill="#666"/>
<text x="2467.59" y="1400.03" font-size="16" fill="#0a4726" text-anchor="middle" letter-spacing="0.4">66.67</text>
<text x="2467.59" y="1267.33" font-size="16" fill="#e2e2e2" text-anchor="middle" letter-spacing="0.4">33.33</text>
<path d="M1970.81 1484v5.2M2112.83 1484v5.2M2254.86 1484v5.2M2396.88 1484v5.2" stroke="#8e8e8e" stroke-width="1.5" fill="none"/>
<text x="1970.51" y="1506.4" font-size="16" fill="#d4d4d4" text-anchor="middle" letter-spacing="0.5">0 - 60</text>
<text x="2112.53" y="1506.4" font-size="16" fill="#d4d4d4" text-anchor="middle" letter-spacing="0.5">120 - 180</text>
<text x="2254.56" y="1506.4" font-size="16" fill="#d4d4d4" text-anchor="middle" letter-spacing="0.5">240 - 300</text>
<text x="2396.58" y="1506.4" font-size="16" fill="#d4d4d4" text-anchor="middle" letter-spacing="0.5">360 - 420</text>
<text x="1925.9" y="1488.5" font-size="16" fill="#d4d4d4" text-anchor="end" letter-spacing="1.2">0</text>
<text x="1925.9" y="1435.42" font-size="16" fill="#d4d4d4" text-anchor="end" letter-spacing="1.2">20</text>
<text x="1925.9" y="1382.34" font-size="16" fill="#d4d4d4" text-anchor="end" letter-spacing="1.2">40</text>
<text x="1925.9" y="1329.26" font-size="16" fill="#d4d4d4" text-anchor="end" letter-spacing="1.2">60</text>
<text x="1925.9" y="1276.18" font-size="16" fill="#d4d4d4" text-anchor="end" letter-spacing="1.2">80</text>
<text x="1925.9" y="1223.1" font-size="16" fill="#d4d4d4" text-anchor="end" letter-spacing="1.2">100</text>
<text transform="translate(1878.9 1363) rotate(-90)" font-size="16.5" fill="#d4d4d4" font-weight="350" text-anchor="middle">稼働率 (%)</text>
<path d="M0,13.5h26.9 M13.5,26.9V0 M32.1,13.5H58V58H13.5 V32.1" transform="translate(2513.4 1216.4) scale(0.4310)" fill="none" stroke="#cfcfcf" stroke-width="3.94" stroke-linecap="butt"/>
<path d="M22,1.4L9.9,13.5l12.3,12.3 M10.3,13.5H54.9v44.6 H10.3v-26" transform="translate(2511.61 1256.78) scale(0.4409)" fill="none" stroke="#cfcfcf" stroke-width="3.86" stroke-linecap="butt"/>
<path d="M17.5,17.3H33 M45.4,29.5h-28 M11.5,2v56H51V14.8L38.4,2H11.5z M38.4,2.2v12.7H51 M45.4,41.7h-28" transform="translate(2511.95 1297.51) scale(0.4464)" fill="none" stroke="#cfcfcf" stroke-width="3.81" stroke-linecap="butt"/>
<path d="M4.7,22.9L29.3,45.5L54.7,23.4M4.6,43.6L4.6,58L53.8,58L53.8,43.6M29.2,45.1L29.2,0" transform="translate(2513.12 1339.4) scale(0.4310)" fill="none" stroke="#cfcfcf" stroke-width="3.94" stroke-linecap="butt"/>
<path d="M1938.9 1552 v-7.3 a2 2 0 0 1 2 -2 h563.7 a2 2 0 0 1 2 2 v7.3 z" fill="#9ea3b4"/>
<rect x="1938.9" y="1552" width="567.7" height="15.8" fill="#23324e"/>
<rect x="1938.9" y="1550.8" width="567.7" height="1.7" fill="#b0c2e4"/>
<rect x="2219.5" y="1545.75" width="1.3" height="3.2" fill="#fff"/>
<rect x="2222.1" y="1545.75" width="1.3" height="3.2" fill="#fff"/>
<rect x="2224.7" y="1545.75" width="1.3" height="3.2" fill="#fff"/>
<rect x="1936.9" y="1555.1" width="6.3" height="12.7" rx="1.6" fill="#fff" stroke="#acb8d1" stroke-width="0.5"/>
<rect x="2502.3" y="1555.1" width="6.3" height="12.7" rx="1.6" fill="#fff" stroke="#acb8d1" stroke-width="0.5"/>
</svg>
<div class="vstrip"></div><div class="vstrip2"></div><div class="scrollstrip"></div>
<div class="popup"><svg style="left:20px;top:20px" width="22" height="24" viewBox="0 0 22 24"><path d="M1.5 1v20.5a1.5 1.5 0 0 0 1.5 1.5h18" fill="none" stroke="#4bb8dc" stroke-width="2.4" stroke-linecap="round"/><path d="M6.5 18v-6M10.5 18v-10M14.5 18v-7M18.5 18v-12" stroke="#4bb8dc" stroke-width="2.4" fill="none"/></svg><span>グラフの解説 (β 版)</span></div>
</div>
</body>
</html>
